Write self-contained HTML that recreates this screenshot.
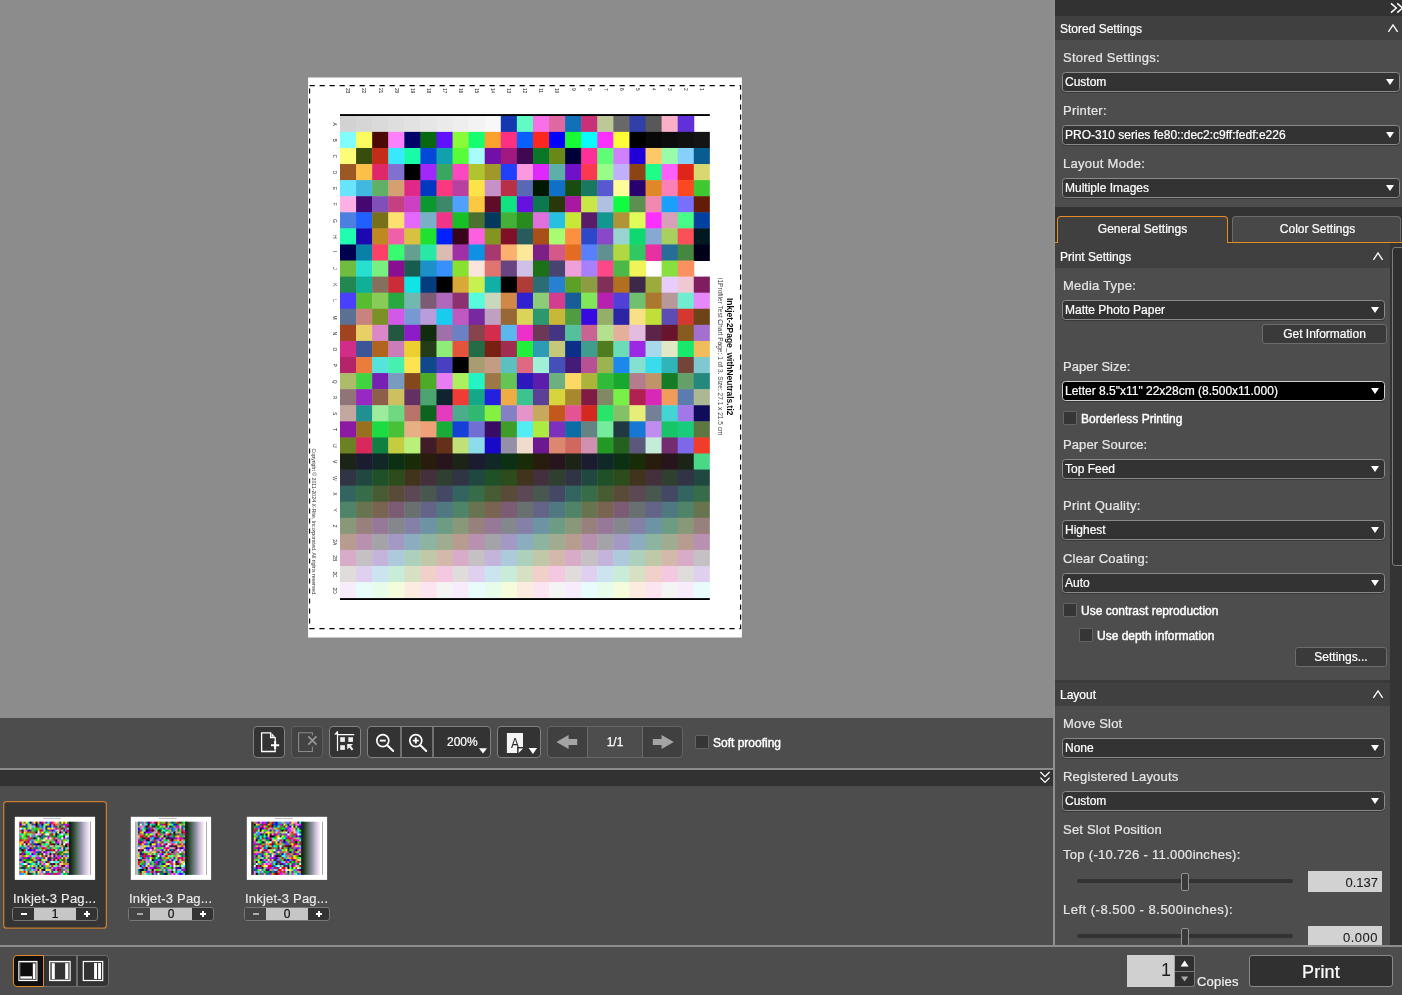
<!DOCTYPE html><html><head><meta charset="utf-8"><title>Print Layout</title><style>
*{box-sizing:border-box;margin:0;padding:0}
html,body{width:1402px;height:995px;overflow:hidden;background:#4d4d4d}
body{position:relative;font-family:"Liberation Sans",sans-serif;font-size:12px;color:#fff;-webkit-font-smoothing:antialiased;-webkit-text-stroke-width:.22px}
.a{position:absolute}
.t{position:absolute;white-space:nowrap;line-height:16px;height:16px}
.lb{position:absolute;white-space:nowrap;font-size:13px;line-height:16px;height:16px;color:#e6e6e6}
.hd{position:absolute;left:1055px;background:#404040;height:24px}
.hd span{position:absolute;left:5px;top:4px;line-height:16px;font-size:12px;color:#fff}
.dd{position:absolute;height:20px;background:#333;border:1px solid #8a8a8a;border-radius:3.5px;box-shadow:0 1px 0 rgba(0,0,0,.25)}
.dd span{position:absolute;left:2px;top:1px;line-height:16px;font-size:12px;color:#fff;white-space:nowrap}
.dd i{position:absolute;right:5px;top:6px;width:0;height:0;border-left:4.5px solid transparent;border-right:4.5px solid transparent;border-top:6px solid #fff}
.btn{position:absolute;height:20px;background:#3a3a3a;border:1px solid #6c6c6c;border-radius:3px;text-align:center;line-height:19px;font-size:12px;color:#fff}
.cb{position:absolute;width:14px;height:14px;background:#353535;border:1px solid #626262;border-radius:1px}
.fb{-webkit-text-stroke-width:.42px}
.tb{position:absolute;top:726px;height:32px;background:#333;border:1px solid #828282;border-radius:4px}
.sl{position:absolute;height:4.5px;background:#333;border-radius:2.25px}
.th{position:absolute;width:8px;height:18px;background:#3a3a3a;border:1px solid #929292;border-radius:2px}
.vb{position:absolute;background:#d2d2d2;color:#1e1e1e;font-size:13px;text-align:right;padding-right:4px;-webkit-text-stroke-width:.1px}
</style></head><body><div id="app" style="position:absolute;left:0;top:0;width:1402px;height:995px;will-change:transform">
<div class="a" style="left:0;top:0;width:1053px;height:718px;background:#8c8c8c"></div>
<svg class="a" style="left:0;top:0" width="1053" height="718" viewBox="0 0 1053 718"><rect x="308.1" y="77.5" width="433.8" height="560.0" fill="#fff"/><rect x="340.00" y="115.80" width="16.58" height="16.58" fill="#d2d2d2"/><rect x="356.08" y="115.80" width="16.58" height="16.58" fill="#d6d6d6"/><rect x="372.16" y="115.80" width="16.58" height="16.58" fill="#dadada"/><rect x="388.24" y="115.80" width="16.58" height="16.58" fill="#dedede"/><rect x="404.32" y="115.80" width="16.58" height="16.58" fill="#e2e2e2"/><rect x="420.40" y="115.80" width="16.58" height="16.58" fill="#e6e6e6"/><rect x="436.48" y="115.80" width="16.58" height="16.58" fill="#eaeaea"/><rect x="452.56" y="115.80" width="16.58" height="16.58" fill="#eeeeee"/><rect x="468.64" y="115.80" width="16.58" height="16.58" fill="#f3f3f3"/><rect x="484.72" y="115.80" width="16.58" height="16.58" fill="#f8f8f8"/><rect x="500.80" y="115.80" width="16.58" height="16.58" fill="#1338b0"/><rect x="516.88" y="115.80" width="16.58" height="16.58" fill="#60fcc4"/><rect x="532.96" y="115.80" width="16.58" height="16.58" fill="#f870e8"/><rect x="549.04" y="115.80" width="16.58" height="16.58" fill="#e068a0"/><rect x="565.12" y="115.80" width="16.58" height="16.58" fill="#1070b8"/><rect x="581.20" y="115.80" width="16.58" height="16.58" fill="#c83078"/><rect x="597.28" y="115.80" width="16.58" height="16.58" fill="#bcc898"/><rect x="613.36" y="115.80" width="16.58" height="16.58" fill="#686868"/><rect x="629.44" y="115.80" width="16.58" height="16.58" fill="#3040a8"/><rect x="645.52" y="115.80" width="16.58" height="16.58" fill="#585858"/><rect x="661.60" y="115.80" width="16.58" height="16.58" fill="#fcb0c8"/><rect x="677.68" y="115.80" width="16.58" height="16.58" fill="#6030d8"/><rect x="340.00" y="131.88" width="16.58" height="16.58" fill="#80fcfc"/><rect x="356.08" y="131.88" width="16.58" height="16.58" fill="#fcfc60"/><rect x="372.16" y="131.88" width="16.58" height="16.58" fill="#4c0804"/><rect x="388.24" y="131.88" width="16.58" height="16.58" fill="#fc80fc"/><rect x="404.32" y="131.88" width="16.58" height="16.58" fill="#000068"/><rect x="420.40" y="131.88" width="16.58" height="16.58" fill="#086810"/><rect x="436.48" y="131.88" width="16.58" height="16.58" fill="#6010fc"/><rect x="452.56" y="131.88" width="16.58" height="16.58" fill="#88fc38"/><rect x="468.64" y="131.88" width="16.58" height="16.58" fill="#18fc70"/><rect x="484.72" y="131.88" width="16.58" height="16.58" fill="#fca030"/><rect x="500.80" y="131.88" width="16.58" height="16.58" fill="#fc3080"/><rect x="516.88" y="131.88" width="16.58" height="16.58" fill="#0860fc"/><rect x="532.96" y="131.88" width="16.58" height="16.58" fill="#fc2820"/><rect x="549.04" y="131.88" width="16.58" height="16.58" fill="#0000fc"/><rect x="565.12" y="131.88" width="16.58" height="16.58" fill="#18fc38"/><rect x="581.20" y="131.88" width="16.58" height="16.58" fill="#08fcfc"/><rect x="597.28" y="131.88" width="16.58" height="16.58" fill="#fc30fc"/><rect x="613.36" y="131.88" width="16.58" height="16.58" fill="#fcfc38"/><rect x="629.44" y="131.88" width="16.58" height="16.58" fill="#000000"/><rect x="645.52" y="131.88" width="16.58" height="16.58" fill="#080808"/><rect x="661.60" y="131.88" width="16.58" height="16.58" fill="#0c0c0c"/><rect x="677.68" y="131.88" width="16.58" height="16.58" fill="#101010"/><rect x="693.76" y="131.88" width="16.08" height="16.58" fill="#141414"/><rect x="340.00" y="147.96" width="16.58" height="16.58" fill="#fcfc78"/><rect x="356.08" y="147.96" width="16.58" height="16.58" fill="#384c0c"/><rect x="372.16" y="147.96" width="16.58" height="16.58" fill="#c42c18"/><rect x="388.24" y="147.96" width="16.58" height="16.58" fill="#38e8fc"/><rect x="404.32" y="147.96" width="16.58" height="16.58" fill="#18fca8"/><rect x="420.40" y="147.96" width="16.58" height="16.58" fill="#0448d8"/><rect x="436.48" y="147.96" width="16.58" height="16.58" fill="#10a0b0"/><rect x="452.56" y="147.96" width="16.58" height="16.58" fill="#58fc38"/><rect x="468.64" y="147.96" width="16.58" height="16.58" fill="#a8fcfc"/><rect x="484.72" y="147.96" width="16.58" height="16.58" fill="#7010a8"/><rect x="500.80" y="147.96" width="16.58" height="16.58" fill="#a01880"/><rect x="516.88" y="147.96" width="16.58" height="16.58" fill="#400850"/><rect x="532.96" y="147.96" width="16.58" height="16.58" fill="#087828"/><rect x="549.04" y="147.96" width="16.58" height="16.58" fill="#688818"/><rect x="565.12" y="147.96" width="16.58" height="16.58" fill="#000038"/><rect x="581.20" y="147.96" width="16.58" height="16.58" fill="#fc3098"/><rect x="597.28" y="147.96" width="16.58" height="16.58" fill="#60fc78"/><rect x="613.36" y="147.96" width="16.58" height="16.58" fill="#d080fc"/><rect x="629.44" y="147.96" width="16.58" height="16.58" fill="#2000d8"/><rect x="645.52" y="147.96" width="16.58" height="16.58" fill="#fcc868"/><rect x="661.60" y="147.96" width="16.58" height="16.58" fill="#98fca8"/><rect x="677.68" y="147.96" width="16.58" height="16.58" fill="#88d0fc"/><rect x="693.76" y="147.96" width="16.08" height="16.58" fill="#085c90"/><rect x="340.00" y="164.04" width="16.58" height="16.58" fill="#9c5824"/><rect x="356.08" y="164.04" width="16.58" height="16.58" fill="#fcc048"/><rect x="372.16" y="164.04" width="16.58" height="16.58" fill="#e02868"/><rect x="388.24" y="164.04" width="16.58" height="16.58" fill="#8070d0"/><rect x="404.32" y="164.04" width="16.58" height="16.58" fill="#000000"/><rect x="420.40" y="164.04" width="16.58" height="16.58" fill="#a028fc"/><rect x="436.48" y="164.04" width="16.58" height="16.58" fill="#38a860"/><rect x="452.56" y="164.04" width="16.58" height="16.58" fill="#fc48c0"/><rect x="468.64" y="164.04" width="16.58" height="16.58" fill="#b0c430"/><rect x="484.72" y="164.04" width="16.58" height="16.58" fill="#a09828"/><rect x="500.80" y="164.04" width="16.58" height="16.58" fill="#2040fc"/><rect x="516.88" y="164.04" width="16.58" height="16.58" fill="#fc98e0"/><rect x="532.96" y="164.04" width="16.58" height="16.58" fill="#e028fc"/><rect x="549.04" y="164.04" width="16.58" height="16.58" fill="#5cb0a8"/><rect x="565.12" y="164.04" width="16.58" height="16.58" fill="#7010c8"/><rect x="581.20" y="164.04" width="16.58" height="16.58" fill="#fc3850"/><rect x="597.28" y="164.04" width="16.58" height="16.58" fill="#98fc88"/><rect x="613.36" y="164.04" width="16.58" height="16.58" fill="#c0b0fc"/><rect x="629.44" y="164.04" width="16.58" height="16.58" fill="#8c4414"/><rect x="645.52" y="164.04" width="16.58" height="16.58" fill="#20fc88"/><rect x="661.60" y="164.04" width="16.58" height="16.58" fill="#fc60fc"/><rect x="677.68" y="164.04" width="16.58" height="16.58" fill="#e02418"/><rect x="693.76" y="164.04" width="16.08" height="16.58" fill="#d8d870"/><rect x="340.00" y="180.12" width="16.58" height="16.58" fill="#68e4fc"/><rect x="356.08" y="180.12" width="16.58" height="16.58" fill="#40b8e0"/><rect x="372.16" y="180.12" width="16.58" height="16.58" fill="#60b068"/><rect x="388.24" y="180.12" width="16.58" height="16.58" fill="#d4a070"/><rect x="404.32" y="180.12" width="16.58" height="16.58" fill="#e02888"/><rect x="420.40" y="180.12" width="16.58" height="16.58" fill="#0038c0"/><rect x="436.48" y="180.12" width="16.58" height="16.58" fill="#fc3880"/><rect x="452.56" y="180.12" width="16.58" height="16.58" fill="#b840a0"/><rect x="468.64" y="180.12" width="16.58" height="16.58" fill="#fce448"/><rect x="484.72" y="180.12" width="16.58" height="16.58" fill="#c890c8"/><rect x="500.80" y="180.12" width="16.58" height="16.58" fill="#b83048"/><rect x="516.88" y="180.12" width="16.58" height="16.58" fill="#5868b4"/><rect x="532.96" y="180.12" width="16.58" height="16.58" fill="#001800"/><rect x="549.04" y="180.12" width="16.58" height="16.58" fill="#1070c8"/><rect x="565.12" y="180.12" width="16.58" height="16.58" fill="#184c10"/><rect x="581.20" y="180.12" width="16.58" height="16.58" fill="#187860"/><rect x="597.28" y="180.12" width="16.58" height="16.58" fill="#5858d0"/><rect x="613.36" y="180.12" width="16.58" height="16.58" fill="#fcfc98"/><rect x="629.44" y="180.12" width="16.58" height="16.58" fill="#280070"/><rect x="645.52" y="180.12" width="16.58" height="16.58" fill="#e08828"/><rect x="661.60" y="180.12" width="16.58" height="16.58" fill="#fc80b8"/><rect x="677.68" y="180.12" width="16.58" height="16.58" fill="#fc4820"/><rect x="693.76" y="180.12" width="16.08" height="16.58" fill="#40c830"/><rect x="340.00" y="196.20" width="16.58" height="16.58" fill="#fcb0e4"/><rect x="356.08" y="196.20" width="16.58" height="16.58" fill="#440870"/><rect x="372.16" y="196.20" width="16.58" height="16.58" fill="#8050b8"/><rect x="388.24" y="196.20" width="16.58" height="16.58" fill="#c44080"/><rect x="404.32" y="196.20" width="16.58" height="16.58" fill="#cc40c4"/><rect x="420.40" y="196.20" width="16.58" height="16.58" fill="#0c9830"/><rect x="436.48" y="196.20" width="16.58" height="16.58" fill="#3c8868"/><rect x="452.56" y="196.20" width="16.58" height="16.58" fill="#50a0fc"/><rect x="468.64" y="196.20" width="16.58" height="16.58" fill="#fcc840"/><rect x="484.72" y="196.20" width="16.58" height="16.58" fill="#600c28"/><rect x="500.80" y="196.20" width="16.58" height="16.58" fill="#10e480"/><rect x="516.88" y="196.20" width="16.58" height="16.58" fill="#6810e0"/><rect x="532.96" y="196.20" width="16.58" height="16.58" fill="#0c7850"/><rect x="549.04" y="196.20" width="16.58" height="16.58" fill="#283808"/><rect x="565.12" y="196.20" width="16.58" height="16.58" fill="#a818a0"/><rect x="581.20" y="196.20" width="16.58" height="16.58" fill="#c8e848"/><rect x="597.28" y="196.20" width="16.58" height="16.58" fill="#b0c0e0"/><rect x="613.36" y="196.20" width="16.58" height="16.58" fill="#10fc40"/><rect x="629.44" y="196.20" width="16.58" height="16.58" fill="#5c9050"/><rect x="645.52" y="196.20" width="16.58" height="16.58" fill="#f088b0"/><rect x="661.60" y="196.20" width="16.58" height="16.58" fill="#18a0fc"/><rect x="677.68" y="196.20" width="16.58" height="16.58" fill="#7870fc"/><rect x="693.76" y="196.20" width="16.08" height="16.58" fill="#641c08"/><rect x="340.00" y="212.28" width="16.58" height="16.58" fill="#4c80e0"/><rect x="356.08" y="212.28" width="16.58" height="16.58" fill="#2060fc"/><rect x="372.16" y="212.28" width="16.58" height="16.58" fill="#787018"/><rect x="388.24" y="212.28" width="16.58" height="16.58" fill="#fce070"/><rect x="404.32" y="212.28" width="16.58" height="16.58" fill="#e468fc"/><rect x="420.40" y="212.28" width="16.58" height="16.58" fill="#78b0c8"/><rect x="436.48" y="212.28" width="16.58" height="16.58" fill="#f03488"/><rect x="452.56" y="212.28" width="16.58" height="16.58" fill="#18c028"/><rect x="468.64" y="212.28" width="16.58" height="16.58" fill="#4c7030"/><rect x="484.72" y="212.28" width="16.58" height="16.58" fill="#04385c"/><rect x="500.80" y="212.28" width="16.58" height="16.58" fill="#44b038"/><rect x="516.88" y="212.28" width="16.58" height="16.58" fill="#288c1c"/><rect x="532.96" y="212.28" width="16.58" height="16.58" fill="#e070dc"/><rect x="549.04" y="212.28" width="16.58" height="16.58" fill="#28c0e0"/><rect x="565.12" y="212.28" width="16.58" height="16.58" fill="#c8e838"/><rect x="581.20" y="212.28" width="16.58" height="16.58" fill="#581c68"/><rect x="597.28" y="212.28" width="16.58" height="16.58" fill="#109890"/><rect x="613.36" y="212.28" width="16.58" height="16.58" fill="#b09438"/><rect x="629.44" y="212.28" width="16.58" height="16.58" fill="#e0fc58"/><rect x="645.52" y="212.28" width="16.58" height="16.58" fill="#fc30fc"/><rect x="661.60" y="212.28" width="16.58" height="16.58" fill="#d8a0b8"/><rect x="677.68" y="212.28" width="16.58" height="16.58" fill="#48fc88"/><rect x="693.76" y="212.28" width="16.08" height="16.58" fill="#0440a0"/><rect x="340.00" y="228.36" width="16.58" height="16.58" fill="#20fcb0"/><rect x="356.08" y="228.36" width="16.58" height="16.58" fill="#1c08b0"/><rect x="372.16" y="228.36" width="16.58" height="16.58" fill="#c08820"/><rect x="388.24" y="228.36" width="16.58" height="16.58" fill="#f060a8"/><rect x="404.32" y="228.36" width="16.58" height="16.58" fill="#d8c040"/><rect x="420.40" y="228.36" width="16.58" height="16.58" fill="#20e030"/><rect x="436.48" y="228.36" width="16.58" height="16.58" fill="#0020fc"/><rect x="452.56" y="228.36" width="16.58" height="16.58" fill="#38041c"/><rect x="468.64" y="228.36" width="16.58" height="16.58" fill="#fc60e0"/><rect x="484.72" y="228.36" width="16.58" height="16.58" fill="#849420"/><rect x="500.80" y="228.36" width="16.58" height="16.58" fill="#801028"/><rect x="516.88" y="228.36" width="16.58" height="16.58" fill="#285c5c"/><rect x="532.96" y="228.36" width="16.58" height="16.58" fill="#a85018"/><rect x="549.04" y="228.36" width="16.58" height="16.58" fill="#a8fc70"/><rect x="565.12" y="228.36" width="16.58" height="16.58" fill="#fc9040"/><rect x="581.20" y="228.36" width="16.58" height="16.58" fill="#2c48c8"/><rect x="597.28" y="228.36" width="16.58" height="16.58" fill="#8848c8"/><rect x="613.36" y="228.36" width="16.58" height="16.58" fill="#98d4d0"/><rect x="629.44" y="228.36" width="16.58" height="16.58" fill="#10d870"/><rect x="645.52" y="228.36" width="16.58" height="16.58" fill="#88a8d4"/><rect x="661.60" y="228.36" width="16.58" height="16.58" fill="#a8d060"/><rect x="677.68" y="228.36" width="16.58" height="16.58" fill="#fc5058"/><rect x="693.76" y="228.36" width="16.08" height="16.58" fill="#001820"/><rect x="340.00" y="244.44" width="16.58" height="16.58" fill="#000050"/><rect x="356.08" y="244.44" width="16.58" height="16.58" fill="#0880a8"/><rect x="372.16" y="244.44" width="16.58" height="16.58" fill="#fc4068"/><rect x="388.24" y="244.44" width="16.58" height="16.58" fill="#38fc70"/><rect x="404.32" y="244.44" width="16.58" height="16.58" fill="#64a090"/><rect x="420.40" y="244.44" width="16.58" height="16.58" fill="#28e8a8"/><rect x="436.48" y="244.44" width="16.58" height="16.58" fill="#dcbcb0"/><rect x="452.56" y="244.44" width="16.58" height="16.58" fill="#a030a8"/><rect x="468.64" y="244.44" width="16.58" height="16.58" fill="#1090e0"/><rect x="484.72" y="244.44" width="16.58" height="16.58" fill="#a83870"/><rect x="500.80" y="244.44" width="16.58" height="16.58" fill="#fcb070"/><rect x="516.88" y="244.44" width="16.58" height="16.58" fill="#fce898"/><rect x="532.96" y="244.44" width="16.58" height="16.58" fill="#7c2088"/><rect x="549.04" y="244.44" width="16.58" height="16.58" fill="#d45888"/><rect x="565.12" y="244.44" width="16.58" height="16.58" fill="#e46c20"/><rect x="581.20" y="244.44" width="16.58" height="16.58" fill="#5880fc"/><rect x="597.28" y="244.44" width="16.58" height="16.58" fill="#609090"/><rect x="613.36" y="244.44" width="16.58" height="16.58" fill="#b0d840"/><rect x="629.44" y="244.44" width="16.58" height="16.58" fill="#30c860"/><rect x="645.52" y="244.44" width="16.58" height="16.58" fill="#e830a0"/><rect x="661.60" y="244.44" width="16.58" height="16.58" fill="#286c98"/><rect x="677.68" y="244.44" width="16.58" height="16.58" fill="#448840"/><rect x="693.76" y="244.44" width="16.08" height="16.58" fill="#000018"/><rect x="340.00" y="260.52" width="16.58" height="16.58" fill="#70bc40"/><rect x="356.08" y="260.52" width="16.58" height="16.58" fill="#28e0d0"/><rect x="372.16" y="260.52" width="16.58" height="16.58" fill="#78f080"/><rect x="388.24" y="260.52" width="16.58" height="16.58" fill="#881090"/><rect x="404.32" y="260.52" width="16.58" height="16.58" fill="#185c50"/><rect x="420.40" y="260.52" width="16.58" height="16.58" fill="#1c90c8"/><rect x="436.48" y="260.52" width="16.58" height="16.58" fill="#3890fc"/><rect x="452.56" y="260.52" width="16.58" height="16.58" fill="#88e030"/><rect x="468.64" y="260.52" width="16.58" height="16.58" fill="#fce4dc"/><rect x="484.72" y="260.52" width="16.58" height="16.58" fill="#e07470"/><rect x="500.80" y="260.52" width="16.58" height="16.58" fill="#684480"/><rect x="516.88" y="260.52" width="16.58" height="16.58" fill="#d0c0e8"/><rect x="532.96" y="260.52" width="16.58" height="16.58" fill="#1c7018"/><rect x="549.04" y="260.52" width="16.58" height="16.58" fill="#484470"/><rect x="565.12" y="260.52" width="16.58" height="16.58" fill="#f0a0d8"/><rect x="581.20" y="260.52" width="16.58" height="16.58" fill="#a880fc"/><rect x="597.28" y="260.52" width="16.58" height="16.58" fill="#fc4888"/><rect x="613.36" y="260.52" width="16.58" height="16.58" fill="#4cb848"/><rect x="629.44" y="260.52" width="16.58" height="16.58" fill="#f0f458"/><rect x="661.60" y="260.52" width="16.58" height="16.58" fill="#88e040"/><rect x="677.68" y="260.52" width="16.58" height="16.58" fill="#fc9060"/><rect x="340.00" y="276.60" width="16.58" height="16.58" fill="#208850"/><rect x="356.08" y="276.60" width="16.58" height="16.58" fill="#10b098"/><rect x="372.16" y="276.60" width="16.58" height="16.58" fill="#84705c"/><rect x="388.24" y="276.60" width="16.58" height="16.58" fill="#cc2c38"/><rect x="404.32" y="276.60" width="16.58" height="16.58" fill="#10e4e4"/><rect x="420.40" y="276.60" width="16.58" height="16.58" fill="#043c80"/><rect x="436.48" y="276.60" width="16.58" height="16.58" fill="#000000"/><rect x="452.56" y="276.60" width="16.58" height="16.58" fill="#d8a838"/><rect x="468.64" y="276.60" width="16.58" height="16.58" fill="#c8f050"/><rect x="484.72" y="276.60" width="16.58" height="16.58" fill="#10b0a8"/><rect x="500.80" y="276.60" width="16.58" height="16.58" fill="#000000"/><rect x="516.88" y="276.60" width="16.58" height="16.58" fill="#b03c38"/><rect x="532.96" y="276.60" width="16.58" height="16.58" fill="#2c6c74"/><rect x="549.04" y="276.60" width="16.58" height="16.58" fill="#2880d0"/><rect x="565.12" y="276.60" width="16.58" height="16.58" fill="#5ca028"/><rect x="581.20" y="276.60" width="16.58" height="16.58" fill="#8c9c40"/><rect x="597.28" y="276.60" width="16.58" height="16.58" fill="#803058"/><rect x="613.36" y="276.60" width="16.58" height="16.58" fill="#b07020"/><rect x="629.44" y="276.60" width="16.58" height="16.58" fill="#3c2848"/><rect x="645.52" y="276.60" width="16.58" height="16.58" fill="#9cac3c"/><rect x="661.60" y="276.60" width="16.58" height="16.58" fill="#e8ccfc"/><rect x="677.68" y="276.60" width="16.58" height="16.58" fill="#f0c8d4"/><rect x="693.76" y="276.60" width="16.08" height="16.58" fill="#801c60"/><rect x="340.00" y="292.68" width="16.58" height="16.58" fill="#4840fc"/><rect x="356.08" y="292.68" width="16.58" height="16.58" fill="#58bc30"/><rect x="372.16" y="292.68" width="16.58" height="16.58" fill="#88cc58"/><rect x="388.24" y="292.68" width="16.58" height="16.58" fill="#28a840"/><rect x="404.32" y="292.68" width="16.58" height="16.58" fill="#70b8b0"/><rect x="420.40" y="292.68" width="16.58" height="16.58" fill="#7c5c74"/><rect x="436.48" y="292.68" width="16.58" height="16.58" fill="#b068bc"/><rect x="452.56" y="292.68" width="16.58" height="16.58" fill="#8c3070"/><rect x="468.64" y="292.68" width="16.58" height="16.58" fill="#58fcdc"/><rect x="484.72" y="292.68" width="16.58" height="16.58" fill="#c8d8bc"/><rect x="500.80" y="292.68" width="16.58" height="16.58" fill="#d08848"/><rect x="516.88" y="292.68" width="16.58" height="16.58" fill="#3020d0"/><rect x="532.96" y="292.68" width="16.58" height="16.58" fill="#8ccc78"/><rect x="549.04" y="292.68" width="16.58" height="16.58" fill="#d43c90"/><rect x="565.12" y="292.68" width="16.58" height="16.58" fill="#185c98"/><rect x="581.20" y="292.68" width="16.58" height="16.58" fill="#80e858"/><rect x="597.28" y="292.68" width="16.58" height="16.58" fill="#b820b0"/><rect x="613.36" y="292.68" width="16.58" height="16.58" fill="#5040d8"/><rect x="629.44" y="292.68" width="16.58" height="16.58" fill="#70c070"/><rect x="645.52" y="292.68" width="16.58" height="16.58" fill="#ac7830"/><rect x="661.60" y="292.68" width="16.58" height="16.58" fill="#b89898"/><rect x="677.68" y="292.68" width="16.58" height="16.58" fill="#70ecd0"/><rect x="693.76" y="292.68" width="16.08" height="16.58" fill="#e488fc"/><rect x="340.00" y="308.76" width="16.58" height="16.58" fill="#5c7094"/><rect x="356.08" y="308.76" width="16.58" height="16.58" fill="#c8847c"/><rect x="372.16" y="308.76" width="16.58" height="16.58" fill="#7c9028"/><rect x="388.24" y="308.76" width="16.58" height="16.58" fill="#d458e8"/><rect x="404.32" y="308.76" width="16.58" height="16.58" fill="#7898d4"/><rect x="420.40" y="308.76" width="16.58" height="16.58" fill="#b89cdc"/><rect x="436.48" y="308.76" width="16.58" height="16.58" fill="#18ccf0"/><rect x="452.56" y="308.76" width="16.58" height="16.58" fill="#c058c0"/><rect x="468.64" y="308.76" width="16.58" height="16.58" fill="#7828a0"/><rect x="484.72" y="308.76" width="16.58" height="16.58" fill="#c0a0c0"/><rect x="500.80" y="308.76" width="16.58" height="16.58" fill="#986834"/><rect x="516.88" y="308.76" width="16.58" height="16.58" fill="#dcd458"/><rect x="532.96" y="308.76" width="16.58" height="16.58" fill="#2c9870"/><rect x="549.04" y="308.76" width="16.58" height="16.58" fill="#c8b838"/><rect x="565.12" y="308.76" width="16.58" height="16.58" fill="#509c40"/><rect x="581.20" y="308.76" width="16.58" height="16.58" fill="#3808e0"/><rect x="597.28" y="308.76" width="16.58" height="16.58" fill="#94b068"/><rect x="613.36" y="308.76" width="16.58" height="16.58" fill="#2c24a4"/><rect x="629.44" y="308.76" width="16.58" height="16.58" fill="#f8e084"/><rect x="645.52" y="308.76" width="16.58" height="16.58" fill="#c0e038"/><rect x="661.60" y="308.76" width="16.58" height="16.58" fill="#5c4cb4"/><rect x="677.68" y="308.76" width="16.58" height="16.58" fill="#d43830"/><rect x="693.76" y="308.76" width="16.08" height="16.58" fill="#6c4418"/><rect x="340.00" y="324.84" width="16.58" height="16.58" fill="#a04420"/><rect x="356.08" y="324.84" width="16.58" height="16.58" fill="#e8d064"/><rect x="372.16" y="324.84" width="16.58" height="16.58" fill="#dc88c8"/><rect x="388.24" y="324.84" width="16.58" height="16.58" fill="#205840"/><rect x="404.32" y="324.84" width="16.58" height="16.58" fill="#8c1cc8"/><rect x="420.40" y="324.84" width="16.58" height="16.58" fill="#102c0c"/><rect x="436.48" y="324.84" width="16.58" height="16.58" fill="#a070a8"/><rect x="452.56" y="324.84" width="16.58" height="16.58" fill="#6c80c4"/><rect x="468.64" y="324.84" width="16.58" height="16.58" fill="#88444c"/><rect x="484.72" y="324.84" width="16.58" height="16.58" fill="#d42c4c"/><rect x="500.80" y="324.84" width="16.58" height="16.58" fill="#5cb8ec"/><rect x="516.88" y="324.84" width="16.58" height="16.58" fill="#ec30c8"/><rect x="532.96" y="324.84" width="16.58" height="16.58" fill="#6c3858"/><rect x="549.04" y="324.84" width="16.58" height="16.58" fill="#443484"/><rect x="565.12" y="324.84" width="16.58" height="16.58" fill="#54c09c"/><rect x="581.20" y="324.84" width="16.58" height="16.58" fill="#c86494"/><rect x="597.28" y="324.84" width="16.58" height="16.58" fill="#b4e090"/><rect x="613.36" y="324.84" width="16.58" height="16.58" fill="#e4b09c"/><rect x="629.44" y="324.84" width="16.58" height="16.58" fill="#e4bce0"/><rect x="645.52" y="324.84" width="16.58" height="16.58" fill="#5c2448"/><rect x="661.60" y="324.84" width="16.58" height="16.58" fill="#68142c"/><rect x="677.68" y="324.84" width="16.58" height="16.58" fill="#885c20"/><rect x="693.76" y="324.84" width="16.08" height="16.58" fill="#a470d0"/><rect x="340.00" y="340.92" width="16.58" height="16.58" fill="#d02c88"/><rect x="356.08" y="340.92" width="16.58" height="16.58" fill="#3c5498"/><rect x="372.16" y="340.92" width="16.58" height="16.58" fill="#b06420"/><rect x="388.24" y="340.92" width="16.58" height="16.58" fill="#cc7cb8"/><rect x="404.32" y="340.92" width="16.58" height="16.58" fill="#ecd030"/><rect x="420.40" y="340.92" width="16.58" height="16.58" fill="#243c18"/><rect x="436.48" y="340.92" width="16.58" height="16.58" fill="#90ec78"/><rect x="452.56" y="340.92" width="16.58" height="16.58" fill="#e4543c"/><rect x="468.64" y="340.92" width="16.58" height="16.58" fill="#246c48"/><rect x="484.72" y="340.92" width="16.58" height="16.58" fill="#782014"/><rect x="500.80" y="340.92" width="16.58" height="16.58" fill="#a02c50"/><rect x="516.88" y="340.92" width="16.58" height="16.58" fill="#20f03c"/><rect x="532.96" y="340.92" width="16.58" height="16.58" fill="#2c9cb4"/><rect x="549.04" y="340.92" width="16.58" height="16.58" fill="#c4c878"/><rect x="565.12" y="340.92" width="16.58" height="16.58" fill="#0c3088"/><rect x="581.20" y="340.92" width="16.58" height="16.58" fill="#409c8c"/><rect x="597.28" y="340.92" width="16.58" height="16.58" fill="#507c20"/><rect x="613.36" y="340.92" width="16.58" height="16.58" fill="#6cdcb8"/><rect x="629.44" y="340.92" width="16.58" height="16.58" fill="#9c28e4"/><rect x="645.52" y="340.92" width="16.58" height="16.58" fill="#a8d8ec"/><rect x="661.60" y="340.92" width="16.58" height="16.58" fill="#e0e8c4"/><rect x="677.68" y="340.92" width="16.58" height="16.58" fill="#18e86c"/><rect x="693.76" y="340.92" width="16.08" height="16.58" fill="#f0bc5c"/><rect x="340.00" y="357.00" width="16.58" height="16.58" fill="#b42468"/><rect x="356.08" y="357.00" width="16.58" height="16.58" fill="#ec7c3c"/><rect x="372.16" y="357.00" width="16.58" height="16.58" fill="#54e4dc"/><rect x="388.24" y="357.00" width="16.58" height="16.58" fill="#48f0b0"/><rect x="404.32" y="357.00" width="16.58" height="16.58" fill="#fce450"/><rect x="420.40" y="357.00" width="16.58" height="16.58" fill="#10488c"/><rect x="436.48" y="357.00" width="16.58" height="16.58" fill="#4840c0"/><rect x="452.56" y="357.00" width="16.58" height="16.58" fill="#000000"/><rect x="468.64" y="357.00" width="16.58" height="16.58" fill="#a89c70"/><rect x="484.72" y="357.00" width="16.58" height="16.58" fill="#c49c84"/><rect x="500.80" y="357.00" width="16.58" height="16.58" fill="#5cc0c0"/><rect x="516.88" y="357.00" width="16.58" height="16.58" fill="#e06880"/><rect x="532.96" y="357.00" width="16.58" height="16.58" fill="#a0f0d8"/><rect x="549.04" y="357.00" width="16.58" height="16.58" fill="#4450b8"/><rect x="565.12" y="357.00" width="16.58" height="16.58" fill="#441c78"/><rect x="581.20" y="357.00" width="16.58" height="16.58" fill="#b85094"/><rect x="597.28" y="357.00" width="16.58" height="16.58" fill="#9cb450"/><rect x="613.36" y="357.00" width="16.58" height="16.58" fill="#1c88ec"/><rect x="629.44" y="357.00" width="16.58" height="16.58" fill="#84e0d0"/><rect x="645.52" y="357.00" width="16.58" height="16.58" fill="#38dcec"/><rect x="661.60" y="357.00" width="16.58" height="16.58" fill="#30b4b8"/><rect x="677.68" y="357.00" width="16.58" height="16.58" fill="#744438"/><rect x="693.76" y="357.00" width="16.08" height="16.58" fill="#80c8d0"/><rect x="340.00" y="373.08" width="16.58" height="16.58" fill="#acbc68"/><rect x="356.08" y="373.08" width="16.58" height="16.58" fill="#40d440"/><rect x="372.16" y="373.08" width="16.58" height="16.58" fill="#7820b4"/><rect x="388.24" y="373.08" width="16.58" height="16.58" fill="#789cc0"/><rect x="404.32" y="373.08" width="16.58" height="16.58" fill="#84481c"/><rect x="420.40" y="373.08" width="16.58" height="16.58" fill="#4cac28"/><rect x="436.48" y="373.08" width="16.58" height="16.58" fill="#e87cf4"/><rect x="452.56" y="373.08" width="16.58" height="16.58" fill="#acf060"/><rect x="468.64" y="373.08" width="16.58" height="16.58" fill="#24f4c4"/><rect x="484.72" y="373.08" width="16.58" height="16.58" fill="#9c7848"/><rect x="500.80" y="373.08" width="16.58" height="16.58" fill="#64c454"/><rect x="516.88" y="373.08" width="16.58" height="16.58" fill="#2c18bc"/><rect x="532.96" y="373.08" width="16.58" height="16.58" fill="#5c1cac"/><rect x="549.04" y="373.08" width="16.58" height="16.58" fill="#6cb080"/><rect x="565.12" y="373.08" width="16.58" height="16.58" fill="#fcd864"/><rect x="581.20" y="373.08" width="16.58" height="16.58" fill="#acb43c"/><rect x="597.28" y="373.08" width="16.58" height="16.58" fill="#30bc38"/><rect x="613.36" y="373.08" width="16.58" height="16.58" fill="#18a830"/><rect x="629.44" y="373.08" width="16.58" height="16.58" fill="#b47c8c"/><rect x="645.52" y="373.08" width="16.58" height="16.58" fill="#c09468"/><rect x="661.60" y="373.08" width="16.58" height="16.58" fill="#147c24"/><rect x="677.68" y="373.08" width="16.58" height="16.58" fill="#64a068"/><rect x="693.76" y="373.08" width="16.08" height="16.58" fill="#24887c"/><rect x="340.00" y="389.16" width="16.58" height="16.58" fill="#907478"/><rect x="356.08" y="389.16" width="16.58" height="16.58" fill="#9828c4"/><rect x="372.16" y="389.16" width="16.58" height="16.58" fill="#8c6048"/><rect x="388.24" y="389.16" width="16.58" height="16.58" fill="#ccc060"/><rect x="404.32" y="389.16" width="16.58" height="16.58" fill="#643064"/><rect x="420.40" y="389.16" width="16.58" height="16.58" fill="#4ca470"/><rect x="436.48" y="389.16" width="16.58" height="16.58" fill="#102430"/><rect x="452.56" y="389.16" width="16.58" height="16.58" fill="#f03c34"/><rect x="468.64" y="389.16" width="16.58" height="16.58" fill="#14a888"/><rect x="484.72" y="389.16" width="16.58" height="16.58" fill="#2420e0"/><rect x="500.80" y="389.16" width="16.58" height="16.58" fill="#f0ac44"/><rect x="516.88" y="389.16" width="16.58" height="16.58" fill="#3cc490"/><rect x="532.96" y="389.16" width="16.58" height="16.58" fill="#5c4098"/><rect x="549.04" y="389.16" width="16.58" height="16.58" fill="#d8d43c"/><rect x="565.12" y="389.16" width="16.58" height="16.58" fill="#a8882c"/><rect x="581.20" y="389.16" width="16.58" height="16.58" fill="#801c44"/><rect x="597.28" y="389.16" width="16.58" height="16.58" fill="#808864"/><rect x="613.36" y="389.16" width="16.58" height="16.58" fill="#78f048"/><rect x="629.44" y="389.16" width="16.58" height="16.58" fill="#b02050"/><rect x="645.52" y="389.16" width="16.58" height="16.58" fill="#d828b8"/><rect x="661.60" y="389.16" width="16.58" height="16.58" fill="#f09c5c"/><rect x="677.68" y="389.16" width="16.58" height="16.58" fill="#5c7cb0"/><rect x="693.76" y="389.16" width="16.08" height="16.58" fill="#acb894"/><rect x="340.00" y="405.24" width="16.58" height="16.58" fill="#c4a8a0"/><rect x="356.08" y="405.24" width="16.58" height="16.58" fill="#209090"/><rect x="372.16" y="405.24" width="16.58" height="16.58" fill="#9cec9c"/><rect x="388.24" y="405.24" width="16.58" height="16.58" fill="#70d880"/><rect x="404.32" y="405.24" width="16.58" height="16.58" fill="#b87468"/><rect x="420.40" y="405.24" width="16.58" height="16.58" fill="#0c6420"/><rect x="436.48" y="405.24" width="16.58" height="16.58" fill="#e43cbc"/><rect x="452.56" y="405.24" width="16.58" height="16.58" fill="#4cac8c"/><rect x="468.64" y="405.24" width="16.58" height="16.58" fill="#30b870"/><rect x="484.72" y="405.24" width="16.58" height="16.58" fill="#84f040"/><rect x="500.80" y="405.24" width="16.58" height="16.58" fill="#8480c4"/><rect x="516.88" y="405.24" width="16.58" height="16.58" fill="#e494c8"/><rect x="532.96" y="405.24" width="16.58" height="16.58" fill="#c8a85c"/><rect x="549.04" y="405.24" width="16.58" height="16.58" fill="#c4581c"/><rect x="565.12" y="405.24" width="16.58" height="16.58" fill="#e45494"/><rect x="581.20" y="405.24" width="16.58" height="16.58" fill="#d42820"/><rect x="597.28" y="405.24" width="16.58" height="16.58" fill="#28e468"/><rect x="613.36" y="405.24" width="16.58" height="16.58" fill="#84c068"/><rect x="629.44" y="405.24" width="16.58" height="16.58" fill="#e8ec78"/><rect x="645.52" y="405.24" width="16.58" height="16.58" fill="#748098"/><rect x="661.60" y="405.24" width="16.58" height="16.58" fill="#44d4d4"/><rect x="677.68" y="405.24" width="16.58" height="16.58" fill="#a078e8"/><rect x="693.76" y="405.24" width="16.08" height="16.58" fill="#100c5c"/><rect x="340.00" y="421.32" width="16.58" height="16.58" fill="#8c18a4"/><rect x="356.08" y="421.32" width="16.58" height="16.58" fill="#987020"/><rect x="372.16" y="421.32" width="16.58" height="16.58" fill="#1cdc44"/><rect x="388.24" y="421.32" width="16.58" height="16.58" fill="#48c038"/><rect x="404.32" y="421.32" width="16.58" height="16.58" fill="#e4b084"/><rect x="420.40" y="421.32" width="16.58" height="16.58" fill="#f0a078"/><rect x="436.48" y="421.32" width="16.58" height="16.58" fill="#18ac38"/><rect x="452.56" y="421.32" width="16.58" height="16.58" fill="#1440d8"/><rect x="468.64" y="421.32" width="16.58" height="16.58" fill="#7070d4"/><rect x="484.72" y="421.32" width="16.58" height="16.58" fill="#380c64"/><rect x="500.80" y="421.32" width="16.58" height="16.58" fill="#409c28"/><rect x="516.88" y="421.32" width="16.58" height="16.58" fill="#54ecf4"/><rect x="532.96" y="421.32" width="16.58" height="16.58" fill="#acec40"/><rect x="549.04" y="421.32" width="16.58" height="16.58" fill="#7c30bc"/><rect x="565.12" y="421.32" width="16.58" height="16.58" fill="#0c6ca4"/><rect x="581.20" y="421.32" width="16.58" height="16.58" fill="#648484"/><rect x="597.28" y="421.32" width="16.58" height="16.58" fill="#74ec9c"/><rect x="613.36" y="421.32" width="16.58" height="16.58" fill="#203840"/><rect x="629.44" y="421.32" width="16.58" height="16.58" fill="#1478d4"/><rect x="645.52" y="421.32" width="16.58" height="16.58" fill="#c08cf0"/><rect x="661.60" y="421.32" width="16.58" height="16.58" fill="#18c468"/><rect x="677.68" y="421.32" width="16.58" height="16.58" fill="#18cc7c"/><rect x="693.76" y="421.32" width="16.08" height="16.58" fill="#5c7840"/><rect x="340.00" y="437.40" width="16.58" height="16.58" fill="#6c8024"/><rect x="356.08" y="437.40" width="16.58" height="16.58" fill="#d8285c"/><rect x="372.16" y="437.40" width="16.58" height="16.58" fill="#108040"/><rect x="388.24" y="437.40" width="16.58" height="16.58" fill="#c4cc40"/><rect x="404.32" y="437.40" width="16.58" height="16.58" fill="#b8f078"/><rect x="420.40" y="437.40" width="16.58" height="16.58" fill="#401c28"/><rect x="436.48" y="437.40" width="16.58" height="16.58" fill="#643018"/><rect x="452.56" y="437.40" width="16.58" height="16.58" fill="#c0e078"/><rect x="468.64" y="437.40" width="16.58" height="16.58" fill="#8cdcec"/><rect x="484.72" y="437.40" width="16.58" height="16.58" fill="#1808c8"/><rect x="500.80" y="437.40" width="16.58" height="16.58" fill="#9490a8"/><rect x="516.88" y="437.40" width="16.58" height="16.58" fill="#f0dccc"/><rect x="532.96" y="437.40" width="16.58" height="16.58" fill="#6c1890"/><rect x="549.04" y="437.40" width="16.58" height="16.58" fill="#dc8870"/><rect x="565.12" y="437.40" width="16.58" height="16.58" fill="#d06860"/><rect x="581.20" y="437.40" width="16.58" height="16.58" fill="#d090b0"/><rect x="597.28" y="437.40" width="16.58" height="16.58" fill="#249824"/><rect x="613.36" y="437.40" width="16.58" height="16.58" fill="#246020"/><rect x="629.44" y="437.40" width="16.58" height="16.58" fill="#5c587c"/><rect x="645.52" y="437.40" width="16.58" height="16.58" fill="#c4ecd8"/><rect x="661.60" y="437.40" width="16.58" height="16.58" fill="#742c70"/><rect x="677.68" y="437.40" width="16.58" height="16.58" fill="#7c68e8"/><rect x="693.76" y="437.40" width="16.08" height="16.58" fill="#f03c28"/><rect x="340.00" y="453.48" width="16.58" height="16.58" fill="#1c2418"/><rect x="356.08" y="453.48" width="16.58" height="16.58" fill="#1c1c30"/><rect x="372.16" y="453.48" width="16.58" height="16.58" fill="#102828"/><rect x="388.24" y="453.48" width="16.58" height="16.58" fill="#0c3014"/><rect x="404.32" y="453.48" width="16.58" height="16.58" fill="#182c08"/><rect x="420.40" y="453.48" width="16.58" height="16.58" fill="#281c0c"/><rect x="436.48" y="453.48" width="16.58" height="16.58" fill="#28141c"/><rect x="452.56" y="453.48" width="16.58" height="16.58" fill="#1c2418"/><rect x="468.64" y="453.48" width="16.58" height="16.58" fill="#1c1c30"/><rect x="484.72" y="453.48" width="16.58" height="16.58" fill="#102828"/><rect x="500.80" y="453.48" width="16.58" height="16.58" fill="#0c3014"/><rect x="516.88" y="453.48" width="16.58" height="16.58" fill="#182c08"/><rect x="532.96" y="453.48" width="16.58" height="16.58" fill="#281c0c"/><rect x="549.04" y="453.48" width="16.58" height="16.58" fill="#28141c"/><rect x="565.12" y="453.48" width="16.58" height="16.58" fill="#1c2418"/><rect x="581.20" y="453.48" width="16.58" height="16.58" fill="#1c1c30"/><rect x="597.28" y="453.48" width="16.58" height="16.58" fill="#102828"/><rect x="613.36" y="453.48" width="16.58" height="16.58" fill="#0c3014"/><rect x="629.44" y="453.48" width="16.58" height="16.58" fill="#182c08"/><rect x="645.52" y="453.48" width="16.58" height="16.58" fill="#281c0c"/><rect x="661.60" y="453.48" width="16.58" height="16.58" fill="#28141c"/><rect x="677.68" y="453.48" width="16.58" height="16.58" fill="#1c2418"/><rect x="693.76" y="453.48" width="16.08" height="16.58" fill="#48d888"/><rect x="340.00" y="469.56" width="16.58" height="16.58" fill="#303444"/><rect x="356.08" y="469.56" width="16.58" height="16.58" fill="#204840"/><rect x="372.16" y="469.56" width="16.58" height="16.58" fill="#205028"/><rect x="388.24" y="469.56" width="16.58" height="16.58" fill="#2c4c1c"/><rect x="404.32" y="469.56" width="16.58" height="16.58" fill="#40341c"/><rect x="420.40" y="469.56" width="16.58" height="16.58" fill="#44303c"/><rect x="436.48" y="469.56" width="16.58" height="16.58" fill="#304030"/><rect x="452.56" y="469.56" width="16.58" height="16.58" fill="#303444"/><rect x="468.64" y="469.56" width="16.58" height="16.58" fill="#204840"/><rect x="484.72" y="469.56" width="16.58" height="16.58" fill="#205028"/><rect x="500.80" y="469.56" width="16.58" height="16.58" fill="#2c4c1c"/><rect x="516.88" y="469.56" width="16.58" height="16.58" fill="#40341c"/><rect x="532.96" y="469.56" width="16.58" height="16.58" fill="#44303c"/><rect x="549.04" y="469.56" width="16.58" height="16.58" fill="#304030"/><rect x="565.12" y="469.56" width="16.58" height="16.58" fill="#303444"/><rect x="581.20" y="469.56" width="16.58" height="16.58" fill="#204840"/><rect x="597.28" y="469.56" width="16.58" height="16.58" fill="#205028"/><rect x="613.36" y="469.56" width="16.58" height="16.58" fill="#2c4c1c"/><rect x="629.44" y="469.56" width="16.58" height="16.58" fill="#40341c"/><rect x="645.52" y="469.56" width="16.58" height="16.58" fill="#44303c"/><rect x="661.60" y="469.56" width="16.58" height="16.58" fill="#304030"/><rect x="677.68" y="469.56" width="16.58" height="16.58" fill="#303444"/><rect x="693.76" y="469.56" width="16.08" height="16.58" fill="#204840"/><rect x="340.00" y="485.64" width="16.58" height="16.58" fill="#346460"/><rect x="356.08" y="485.64" width="16.58" height="16.58" fill="#386c48"/><rect x="372.16" y="485.64" width="16.58" height="16.58" fill="#485c34"/><rect x="388.24" y="485.64" width="16.58" height="16.58" fill="#584c38"/><rect x="404.32" y="485.64" width="16.58" height="16.58" fill="#5c4854"/><rect x="420.40" y="485.64" width="16.58" height="16.58" fill="#485850"/><rect x="436.48" y="485.64" width="16.58" height="16.58" fill="#444864"/><rect x="452.56" y="485.64" width="16.58" height="16.58" fill="#346460"/><rect x="468.64" y="485.64" width="16.58" height="16.58" fill="#386c48"/><rect x="484.72" y="485.64" width="16.58" height="16.58" fill="#485c34"/><rect x="500.80" y="485.64" width="16.58" height="16.58" fill="#584c38"/><rect x="516.88" y="485.64" width="16.58" height="16.58" fill="#5c4854"/><rect x="532.96" y="485.64" width="16.58" height="16.58" fill="#485850"/><rect x="549.04" y="485.64" width="16.58" height="16.58" fill="#444864"/><rect x="565.12" y="485.64" width="16.58" height="16.58" fill="#346460"/><rect x="581.20" y="485.64" width="16.58" height="16.58" fill="#386c48"/><rect x="597.28" y="485.64" width="16.58" height="16.58" fill="#485c34"/><rect x="613.36" y="485.64" width="16.58" height="16.58" fill="#584c38"/><rect x="629.44" y="485.64" width="16.58" height="16.58" fill="#5c4854"/><rect x="645.52" y="485.64" width="16.58" height="16.58" fill="#485850"/><rect x="661.60" y="485.64" width="16.58" height="16.58" fill="#444864"/><rect x="677.68" y="485.64" width="16.58" height="16.58" fill="#346460"/><rect x="693.76" y="485.64" width="16.08" height="16.58" fill="#386c48"/><rect x="340.00" y="501.72" width="16.58" height="16.58" fill="#508468"/><rect x="356.08" y="501.72" width="16.58" height="16.58" fill="#687450"/><rect x="372.16" y="501.72" width="16.58" height="16.58" fill="#786450"/><rect x="388.24" y="501.72" width="16.58" height="16.58" fill="#7c5c74"/><rect x="404.32" y="501.72" width="16.58" height="16.58" fill="#687070"/><rect x="420.40" y="501.72" width="16.58" height="16.58" fill="#646488"/><rect x="436.48" y="501.72" width="16.58" height="16.58" fill="#507880"/><rect x="452.56" y="501.72" width="16.58" height="16.58" fill="#508468"/><rect x="468.64" y="501.72" width="16.58" height="16.58" fill="#687450"/><rect x="484.72" y="501.72" width="16.58" height="16.58" fill="#786450"/><rect x="500.80" y="501.72" width="16.58" height="16.58" fill="#7c5c74"/><rect x="516.88" y="501.72" width="16.58" height="16.58" fill="#687070"/><rect x="532.96" y="501.72" width="16.58" height="16.58" fill="#646488"/><rect x="549.04" y="501.72" width="16.58" height="16.58" fill="#507880"/><rect x="565.12" y="501.72" width="16.58" height="16.58" fill="#508468"/><rect x="581.20" y="501.72" width="16.58" height="16.58" fill="#687450"/><rect x="597.28" y="501.72" width="16.58" height="16.58" fill="#786450"/><rect x="613.36" y="501.72" width="16.58" height="16.58" fill="#7c5c74"/><rect x="629.44" y="501.72" width="16.58" height="16.58" fill="#687070"/><rect x="645.52" y="501.72" width="16.58" height="16.58" fill="#646488"/><rect x="661.60" y="501.72" width="16.58" height="16.58" fill="#507880"/><rect x="677.68" y="501.72" width="16.58" height="16.58" fill="#508468"/><rect x="693.76" y="501.72" width="16.08" height="16.58" fill="#687450"/><rect x="340.00" y="517.80" width="16.58" height="16.58" fill="#889878"/><rect x="356.08" y="517.80" width="16.58" height="16.58" fill="#98807c"/><rect x="372.16" y="517.80" width="16.58" height="16.58" fill="#987898"/><rect x="388.24" y="517.80" width="16.58" height="16.58" fill="#84888c"/><rect x="404.32" y="517.80" width="16.58" height="16.58" fill="#8480a8"/><rect x="420.40" y="517.80" width="16.58" height="16.58" fill="#6c94a4"/><rect x="436.48" y="517.80" width="16.58" height="16.58" fill="#6c9c84"/><rect x="452.56" y="517.80" width="16.58" height="16.58" fill="#889878"/><rect x="468.64" y="517.80" width="16.58" height="16.58" fill="#98807c"/><rect x="484.72" y="517.80" width="16.58" height="16.58" fill="#987898"/><rect x="500.80" y="517.80" width="16.58" height="16.58" fill="#84888c"/><rect x="516.88" y="517.80" width="16.58" height="16.58" fill="#8480a8"/><rect x="532.96" y="517.80" width="16.58" height="16.58" fill="#6c94a4"/><rect x="549.04" y="517.80" width="16.58" height="16.58" fill="#6c9c84"/><rect x="565.12" y="517.80" width="16.58" height="16.58" fill="#889878"/><rect x="581.20" y="517.80" width="16.58" height="16.58" fill="#98807c"/><rect x="597.28" y="517.80" width="16.58" height="16.58" fill="#987898"/><rect x="613.36" y="517.80" width="16.58" height="16.58" fill="#84888c"/><rect x="629.44" y="517.80" width="16.58" height="16.58" fill="#8480a8"/><rect x="645.52" y="517.80" width="16.58" height="16.58" fill="#6c94a4"/><rect x="661.60" y="517.80" width="16.58" height="16.58" fill="#6c9c84"/><rect x="677.68" y="517.80" width="16.58" height="16.58" fill="#889878"/><rect x="693.76" y="517.80" width="16.08" height="16.58" fill="#98807c"/><rect x="340.00" y="533.88" width="16.58" height="16.58" fill="#b89c90"/><rect x="356.08" y="533.88" width="16.58" height="16.58" fill="#b890b0"/><rect x="372.16" y="533.88" width="16.58" height="16.58" fill="#a4a4a8"/><rect x="388.24" y="533.88" width="16.58" height="16.58" fill="#a498c4"/><rect x="404.32" y="533.88" width="16.58" height="16.58" fill="#8cacc0"/><rect x="420.40" y="533.88" width="16.58" height="16.58" fill="#8cb4a0"/><rect x="436.48" y="533.88" width="16.58" height="16.58" fill="#a0ac90"/><rect x="452.56" y="533.88" width="16.58" height="16.58" fill="#b89c90"/><rect x="468.64" y="533.88" width="16.58" height="16.58" fill="#b890b0"/><rect x="484.72" y="533.88" width="16.58" height="16.58" fill="#a4a4a8"/><rect x="500.80" y="533.88" width="16.58" height="16.58" fill="#a498c4"/><rect x="516.88" y="533.88" width="16.58" height="16.58" fill="#8cacc0"/><rect x="532.96" y="533.88" width="16.58" height="16.58" fill="#8cb4a0"/><rect x="549.04" y="533.88" width="16.58" height="16.58" fill="#a0ac90"/><rect x="565.12" y="533.88" width="16.58" height="16.58" fill="#b89c90"/><rect x="581.20" y="533.88" width="16.58" height="16.58" fill="#b890b0"/><rect x="597.28" y="533.88" width="16.58" height="16.58" fill="#a4a4a8"/><rect x="613.36" y="533.88" width="16.58" height="16.58" fill="#a498c4"/><rect x="629.44" y="533.88" width="16.58" height="16.58" fill="#8cacc0"/><rect x="645.52" y="533.88" width="16.58" height="16.58" fill="#8cb4a0"/><rect x="661.60" y="533.88" width="16.58" height="16.58" fill="#a0ac90"/><rect x="677.68" y="533.88" width="16.58" height="16.58" fill="#b89c90"/><rect x="693.76" y="533.88" width="16.08" height="16.58" fill="#b890b0"/><rect x="340.00" y="549.96" width="16.58" height="16.58" fill="#d8acc8"/><rect x="356.08" y="549.96" width="16.58" height="16.58" fill="#c4c0c4"/><rect x="372.16" y="549.96" width="16.58" height="16.58" fill="#c4b4dc"/><rect x="388.24" y="549.96" width="16.58" height="16.58" fill="#accadc"/><rect x="404.32" y="549.96" width="16.58" height="16.58" fill="#acd0bc"/><rect x="420.40" y="549.96" width="16.58" height="16.58" fill="#c0c8a8"/><rect x="436.48" y="549.96" width="16.58" height="16.58" fill="#d4b8ac"/><rect x="452.56" y="549.96" width="16.58" height="16.58" fill="#d8acc8"/><rect x="468.64" y="549.96" width="16.58" height="16.58" fill="#c4c0c4"/><rect x="484.72" y="549.96" width="16.58" height="16.58" fill="#c4b4dc"/><rect x="500.80" y="549.96" width="16.58" height="16.58" fill="#accadc"/><rect x="516.88" y="549.96" width="16.58" height="16.58" fill="#acd0bc"/><rect x="532.96" y="549.96" width="16.58" height="16.58" fill="#c0c8a8"/><rect x="549.04" y="549.96" width="16.58" height="16.58" fill="#d4b8ac"/><rect x="565.12" y="549.96" width="16.58" height="16.58" fill="#d8acc8"/><rect x="581.20" y="549.96" width="16.58" height="16.58" fill="#c4c0c4"/><rect x="597.28" y="549.96" width="16.58" height="16.58" fill="#c4b4dc"/><rect x="613.36" y="549.96" width="16.58" height="16.58" fill="#accadc"/><rect x="629.44" y="549.96" width="16.58" height="16.58" fill="#acd0bc"/><rect x="645.52" y="549.96" width="16.58" height="16.58" fill="#c0c8a8"/><rect x="661.60" y="549.96" width="16.58" height="16.58" fill="#d4b8ac"/><rect x="677.68" y="549.96" width="16.58" height="16.58" fill="#d8acc8"/><rect x="693.76" y="549.96" width="16.08" height="16.58" fill="#c4c0c4"/><rect x="340.00" y="566.04" width="16.58" height="16.58" fill="#e0dcdc"/><rect x="356.08" y="566.04" width="16.58" height="16.58" fill="#e0d0f0"/><rect x="372.16" y="566.04" width="16.58" height="16.58" fill="#cce4f0"/><rect x="388.24" y="566.04" width="16.58" height="16.58" fill="#c8ecd8"/><rect x="404.32" y="566.04" width="16.58" height="16.58" fill="#d8e0c4"/><rect x="420.40" y="566.04" width="16.58" height="16.58" fill="#f0d0c8"/><rect x="436.48" y="566.04" width="16.58" height="16.58" fill="#f4c8e0"/><rect x="452.56" y="566.04" width="16.58" height="16.58" fill="#e0dcdc"/><rect x="468.64" y="566.04" width="16.58" height="16.58" fill="#e0d0f0"/><rect x="484.72" y="566.04" width="16.58" height="16.58" fill="#cce4f0"/><rect x="500.80" y="566.04" width="16.58" height="16.58" fill="#c8ecd8"/><rect x="516.88" y="566.04" width="16.58" height="16.58" fill="#d8e0c4"/><rect x="532.96" y="566.04" width="16.58" height="16.58" fill="#f0d0c8"/><rect x="549.04" y="566.04" width="16.58" height="16.58" fill="#f4c8e0"/><rect x="565.12" y="566.04" width="16.58" height="16.58" fill="#e0dcdc"/><rect x="581.20" y="566.04" width="16.58" height="16.58" fill="#e0d0f0"/><rect x="597.28" y="566.04" width="16.58" height="16.58" fill="#cce4f0"/><rect x="613.36" y="566.04" width="16.58" height="16.58" fill="#c8ecd8"/><rect x="629.44" y="566.04" width="16.58" height="16.58" fill="#d8e0c4"/><rect x="645.52" y="566.04" width="16.58" height="16.58" fill="#f0d0c8"/><rect x="661.60" y="566.04" width="16.58" height="16.58" fill="#f4c8e0"/><rect x="677.68" y="566.04" width="16.58" height="16.58" fill="#e0dcdc"/><rect x="693.76" y="566.04" width="16.08" height="16.58" fill="#e0d0f0"/><rect x="340.00" y="582.12" width="16.58" height="16.08" fill="#f8ecfc"/><rect x="356.08" y="582.12" width="16.58" height="16.08" fill="#e8fcfc"/><rect x="372.16" y="582.12" width="16.58" height="16.08" fill="#e8fcec"/><rect x="388.24" y="582.12" width="16.58" height="16.08" fill="#f4fcdc"/><rect x="404.32" y="582.12" width="16.58" height="16.08" fill="#fcece0"/><rect x="420.40" y="582.12" width="16.58" height="16.08" fill="#fce4f0"/><rect x="436.48" y="582.12" width="16.58" height="16.08" fill="#f4f4f4"/><rect x="452.56" y="582.12" width="16.58" height="16.08" fill="#f8ecfc"/><rect x="468.64" y="582.12" width="16.58" height="16.08" fill="#e8fcfc"/><rect x="484.72" y="582.12" width="16.58" height="16.08" fill="#e8fcec"/><rect x="500.80" y="582.12" width="16.58" height="16.08" fill="#f4fcdc"/><rect x="516.88" y="582.12" width="16.58" height="16.08" fill="#fcece0"/><rect x="532.96" y="582.12" width="16.58" height="16.08" fill="#fce4f0"/><rect x="549.04" y="582.12" width="16.58" height="16.08" fill="#f4f4f4"/><rect x="565.12" y="582.12" width="16.58" height="16.08" fill="#f8ecfc"/><rect x="581.20" y="582.12" width="16.58" height="16.08" fill="#e8fcfc"/><rect x="597.28" y="582.12" width="16.58" height="16.08" fill="#e8fcec"/><rect x="613.36" y="582.12" width="16.58" height="16.08" fill="#f4fcdc"/><rect x="629.44" y="582.12" width="16.58" height="16.08" fill="#fcece0"/><rect x="645.52" y="582.12" width="16.58" height="16.08" fill="#fce4f0"/><rect x="661.60" y="582.12" width="16.58" height="16.08" fill="#f4f4f4"/><rect x="677.68" y="582.12" width="16.58" height="16.08" fill="#f8ecfc"/><rect x="693.76" y="582.12" width="16.08" height="16.08" fill="#e8fcfc"/><rect x="340.0" y="114.1" width="369.8" height="1.9" fill="#000"/><rect x="340.0" y="598.1" width="369.8" height="1.9" fill="#000"/><rect x="309.6" y="85.6" width="431" height="543" fill="none" stroke="#000" stroke-width="1.1" stroke-dasharray="5.2 4.8"/><g font-family="Liberation Sans, sans-serif" fill="#1c1c1c"><text transform="translate(346.3 87.9) rotate(90)" font-size="4.9">23</text><text transform="translate(362.4 87.9) rotate(90)" font-size="4.9">22</text><text transform="translate(378.5 87.9) rotate(90)" font-size="4.9">21</text><text transform="translate(394.6 87.9) rotate(90)" font-size="4.9">20</text><text transform="translate(410.7 87.9) rotate(90)" font-size="4.9">19</text><text transform="translate(426.7 87.9) rotate(90)" font-size="4.9">18</text><text transform="translate(442.8 87.9) rotate(90)" font-size="4.9">17</text><text transform="translate(458.9 87.9) rotate(90)" font-size="4.9">16</text><text transform="translate(475.0 87.9) rotate(90)" font-size="4.9">15</text><text transform="translate(491.1 87.9) rotate(90)" font-size="4.9">14</text><text transform="translate(507.1 87.9) rotate(90)" font-size="4.9">13</text><text transform="translate(523.2 87.9) rotate(90)" font-size="4.9">12</text><text transform="translate(539.3 87.9) rotate(90)" font-size="4.9">11</text><text transform="translate(555.4 87.9) rotate(90)" font-size="4.9">10</text><text transform="translate(571.5 87.9) rotate(90)" font-size="4.9">9</text><text transform="translate(587.5 87.9) rotate(90)" font-size="4.9">8</text><text transform="translate(603.6 87.9) rotate(90)" font-size="4.9">7</text><text transform="translate(619.7 87.9) rotate(90)" font-size="4.9">6</text><text transform="translate(635.8 87.9) rotate(90)" font-size="4.9">5</text><text transform="translate(651.9 87.9) rotate(90)" font-size="4.9">4</text><text transform="translate(667.9 87.9) rotate(90)" font-size="4.9">3</text><text transform="translate(684.0 87.9) rotate(90)" font-size="4.9">2</text><text transform="translate(700.1 87.9) rotate(90)" font-size="4.9">1</text><text transform="translate(333.2 122.4) rotate(90)" font-size="4.9">A</text><text transform="translate(333.2 138.5) rotate(90)" font-size="4.9">B</text><text transform="translate(333.2 154.6) rotate(90)" font-size="4.9">C</text><text transform="translate(333.2 170.7) rotate(90)" font-size="4.9">D</text><text transform="translate(333.2 186.8) rotate(90)" font-size="4.9">E</text><text transform="translate(333.2 202.8) rotate(90)" font-size="4.9">F</text><text transform="translate(333.2 218.9) rotate(90)" font-size="4.9">G</text><text transform="translate(333.2 235.0) rotate(90)" font-size="4.9">H</text><text transform="translate(333.2 251.1) rotate(90)" font-size="4.9">I</text><text transform="translate(333.2 267.2) rotate(90)" font-size="4.9">J</text><text transform="translate(333.2 283.2) rotate(90)" font-size="4.9">K</text><text transform="translate(333.2 299.3) rotate(90)" font-size="4.9">L</text><text transform="translate(333.2 315.4) rotate(90)" font-size="4.9">M</text><text transform="translate(333.2 331.5) rotate(90)" font-size="4.9">N</text><text transform="translate(333.2 347.6) rotate(90)" font-size="4.9">O</text><text transform="translate(333.2 363.6) rotate(90)" font-size="4.9">P</text><text transform="translate(333.2 379.7) rotate(90)" font-size="4.9">Q</text><text transform="translate(333.2 395.8) rotate(90)" font-size="4.9">R</text><text transform="translate(333.2 411.9) rotate(90)" font-size="4.9">S</text><text transform="translate(333.2 428.0) rotate(90)" font-size="4.9">T</text><text transform="translate(333.2 444.0) rotate(90)" font-size="4.9">U</text><text transform="translate(333.2 460.1) rotate(90)" font-size="4.9">V</text><text transform="translate(333.2 476.2) rotate(90)" font-size="4.9">W</text><text transform="translate(333.2 492.3) rotate(90)" font-size="4.9">X</text><text transform="translate(333.2 508.4) rotate(90)" font-size="4.9">Y</text><text transform="translate(333.2 524.4) rotate(90)" font-size="4.9">Z</text><text transform="translate(333.2 539.2) rotate(90)" font-size="4.9">2A</text><text transform="translate(333.2 555.3) rotate(90)" font-size="4.9">2B</text><text transform="translate(333.2 571.4) rotate(90)" font-size="4.9">2C</text><text transform="translate(333.2 587.5) rotate(90)" font-size="4.9">2D</text><text transform="translate(726.6 298) rotate(90)" font-size="8.3" font-weight="bold" fill="#111" textLength="117.5" lengthAdjust="spacingAndGlyphs">Inkjet-2Page_withNeutrals.ti2</text><text transform="translate(717.9 278) rotate(90)" font-size="6.4" fill="#444" textLength="157.5" lengthAdjust="spacingAndGlyphs">i1Profiler Test Chart Page: 1 of 3. Size: 27.1 x 21.5 cm</text><text transform="translate(311.8 448.6) rotate(90)" font-size="4.7" fill="#333" textLength="147" lengthAdjust="spacingAndGlyphs">Copyright © 2011-2024 X-Rite, Incorporated. All rights reserved.</text></g></svg>
<div class="a" style="left:1053px;top:0;width:2px;height:945px;background:#909090"></div>
<div class="a" style="left:0;top:718px;width:1053px;height:50px;background:#4d4d4d"></div>
<div class="a" style="left:0;top:768px;width:1053px;height:2px;background:#8c8c8c"></div>
<div class="a" style="left:0;top:770px;width:1053px;height:16px;background:#323232"></div>
<div class="a" style="left:0;top:945px;width:1402px;height:2px;background:#8c8c8c"></div>
<div class="tb" style="left:253px;width:32px"></div>
<div class="tb" style="left:291px;width:32px;background:#434343;border-color:#5e5e5e"></div>
<div class="tb" style="left:329px;width:32px"></div>
<div class="tb" style="left:367px;width:124px"></div>
<div class="a" style="left:400px;top:727px;width:2px;height:30px;background:#707070"></div>
<div class="a" style="left:432px;top:727px;width:2px;height:30px;background:#707070"></div>
<div class="tb" style="left:497px;width:44px"></div>
<div class="tb" style="left:547px;width:136px;background:#404040;border-color:#646464"></div>
<div class="a" style="left:587px;top:727px;width:56px;height:30px;background:#4d4d4d;border-left:1px solid #6a6a6a;border-right:1px solid #6a6a6a"></div>
<svg class="a" style="left:240px;top:718px" width="460" height="50" viewBox="240 718 460 50">
<path d="M275.2 741 V737.6 H270.6 V732.8 H261.6 V751.5 H275.2 V749.6" fill="none" stroke="#fff" stroke-width="1.3"/>
<path d="M271.5 732.9 L275.2 736.7 H271.5 Z" fill="#f4f4f4"/>
<path d="M271 745.2 H279.2 M275.1 741.1 V749.3" stroke="#fff" stroke-width="2.1" fill="none"/>
<path d="M312.4 735.5 V732.8 H298.6 V751.5 H312.4 V746.5" fill="none" stroke="#8a8a8a" stroke-width="1.1"/>
<path d="M308.3 736.4 L316.5 744.6 M316.5 736.4 L308.3 744.6" stroke="#969696" stroke-width="1.8" fill="none"/>
<path d="M337.5 731.3 V751 M337 734.6 H354.2" stroke="#fff" stroke-width="1.2" fill="none"/>
<path d="M334 734.4 L337.2 731.2 V734.4 Z" fill="#fff"/>
<rect x="340.2" y="737.2" width="4.7" height="4.7" fill="#eee"/><rect x="348.3" y="737.2" width="4.7" height="4.7" fill="#eee"/><rect x="340.2" y="745.2" width="4.7" height="4.7" fill="#eee"/>
<path d="M347.2 743.9 H353 L351 745.9 L353.4 749.2 L351.8 750.5 L349.3 747.4 L347.2 749.6 Z" fill="#f0f0f0"/>
<circle cx="382.8" cy="740.6" r="6" fill="none" stroke="#fff" stroke-width="1.7"/><path d="M387.3 745.2 L393.2 751" stroke="#fff" stroke-width="2" stroke-linecap="round"/><path d="M379.8 740.6 H385.8" stroke="#fff" stroke-width="1.9"/>
<circle cx="415.8" cy="740.6" r="6" fill="none" stroke="#fff" stroke-width="1.7"/><path d="M420.3 745.2 L426.2 751" stroke="#fff" stroke-width="2" stroke-linecap="round"/><path d="M412.8 740.6 H418.8 M415.8 737.6 V743.6" stroke="#fff" stroke-width="1.9"/>
<path d="M479 748.2 H487 L483 753.6 Z" fill="#fff"/>
<path d="M506.9 733 H523 V747.1 H517.1 V752.9 H506.9 Z" fill="#f4f4f4"/><path d="M518.6 748.6 H523 L518.6 753 Z" fill="#fff"/>
<text x="515.1" y="747.9" font-family="Liberation Sans, sans-serif" font-size="15.2" fill="#2a2a2a" text-anchor="middle" transform="translate(515.1 0) scale(.8 1) translate(-515.1 0)">A</text>
<rect x="517.1" y="747.1" width="1.2" height="1.2" fill="#333"/>
<path d="M528.7 748 H537.1 L532.9 753.9 Z" fill="#fff"/>
<path d="M556.4 742 L568.6 735.1 V739 H577.2 V745 H568.6 V748.9 Z" fill="#a4a4a4"/>
<path d="M673.8 742 L661.6 735.1 V739 H652.8 V745 H661.6 V748.9 Z" fill="#a4a4a4"/>
</svg>
<div class="t" style="left:447px;top:734px;font-size:12px;-webkit-text-stroke:.2px #fff">200%</div>
<div class="t" style="left:587px;width:56px;text-align:center;top:734px;font-size:12px;-webkit-text-stroke:.25px #fff">1/1</div>
<div class="cb" style="left:695px;top:735px"></div>
<div class="t fb" style="left:713px;top:735px">Soft proofing</div>
<svg class="a" style="left:1036px;top:770px" width="17" height="16" viewBox="1036 770 17 16"><path d="M1040.4 772 L1045 776.6 L1049.6 772 M1040.4 777.6 L1045 782.4 L1049.6 777.6" fill="none" stroke="#fff" stroke-width="1.3"/></svg>
<svg class="a" style="left:0;top:786px" width="1053" height="159" viewBox="0 786 1053 159">
<linearGradient id="ng" x1="0" x2="1" y1="0" y2="0"><stop offset="0" stop-color="#0c140c"/><stop offset=".2" stop-color="#2c4430"/><stop offset=".4" stop-color="#60746c"/><stop offset=".58" stop-color="#9494a8"/><stop offset=".76" stop-color="#ccc0d8"/><stop offset=".9" stop-color="#ecdcec"/><stop offset="1" stop-color="#f6f8fa"/></linearGradient>
<rect x="3.7" y="801.6" width="102.7" height="126.6" rx="3" fill="#353535" stroke="#c47c30" stroke-width="1.3"/>
<rect x="14.8" y="816.8" width="80.3" height="63.1" fill="#fff"/>
<rect x="19.0" y="821.7" width="0.5" height="53.2" fill="#444"/>
<rect x="19.6" y="821.7" width="2.5" height="2.5" fill="#d04"/>
<rect x="21.6" y="821.7" width="2.5" height="2.5" fill="#8f4"/>
<rect x="23.6" y="821.7" width="2.5" height="2.5" fill="#a62"/>
<rect x="25.6" y="821.7" width="2.5" height="2.5" fill="#ff0"/>
<rect x="27.5" y="821.7" width="2.5" height="2.5" fill="#0ff"/>
<rect x="29.5" y="821.7" width="2.5" height="2.5" fill="#000"/>
<rect x="31.5" y="821.7" width="2.5" height="2.5" fill="#b4e"/>
<rect x="33.5" y="821.7" width="2.5" height="2.5" fill="#ff0"/>
<rect x="35.5" y="821.7" width="2.5" height="2.5" fill="#511"/>
<rect x="37.5" y="821.7" width="2.5" height="2.5" fill="#fa0"/>
<rect x="39.4" y="821.7" width="2.5" height="2.5" fill="#00f"/>
<rect x="41.4" y="821.7" width="2.5" height="2.5" fill="#f00"/>
<rect x="43.4" y="821.7" width="2.5" height="2.5" fill="#e6c"/>
<rect x="45.4" y="821.7" width="2.5" height="2.5" fill="#24a"/>
<rect x="47.4" y="821.7" width="2.5" height="2.5" fill="#0ff"/>
<rect x="49.4" y="821.7" width="2.5" height="2.5" fill="#c0c"/>
<rect x="51.3" y="821.7" width="2.5" height="2.5" fill="#f00"/>
<rect x="53.3" y="821.7" width="2.5" height="2.5" fill="#e6c"/>
<rect x="55.3" y="821.7" width="2.5" height="2.5" fill="#ff0"/>
<rect x="57.3" y="821.7" width="2.5" height="2.5" fill="#e8e"/>
<rect x="59.3" y="821.7" width="2.5" height="2.5" fill="#084"/>
<rect x="61.3" y="821.7" width="2.5" height="2.5" fill="#ff0"/>
<rect x="63.2" y="821.7" width="2.5" height="2.5" fill="#a62"/>
<rect x="65.2" y="821.7" width="2.5" height="2.5" fill="#ff0"/>
<rect x="67.2" y="821.7" width="2.0" height="2.5" fill="#084"/>
<rect x="19.6" y="823.7" width="2.5" height="2.5" fill="#00f"/>
<rect x="21.6" y="823.7" width="2.5" height="2.5" fill="#f8a"/>
<rect x="23.6" y="823.7" width="2.5" height="2.5" fill="#fc8"/>
<rect x="25.6" y="823.7" width="2.5" height="2.5" fill="#24a"/>
<rect x="27.5" y="823.7" width="2.5" height="2.5" fill="#8f4"/>
<rect x="29.5" y="823.7" width="2.5" height="2.5" fill="#e8e"/>
<rect x="31.5" y="823.7" width="2.5" height="2.5" fill="#080"/>
<rect x="33.5" y="823.7" width="2.5" height="2.5" fill="#a0f"/>
<rect x="35.5" y="823.7" width="2.5" height="2.5" fill="#000"/>
<rect x="37.5" y="823.7" width="2.5" height="2.5" fill="#0a4"/>
<rect x="39.4" y="823.7" width="2.5" height="2.5" fill="#b4e"/>
<rect x="41.4" y="823.7" width="2.5" height="2.5" fill="#000"/>
<rect x="43.4" y="823.7" width="2.5" height="2.5" fill="#0ff"/>
<rect x="45.4" y="823.7" width="2.5" height="2.5" fill="#ff0"/>
<rect x="47.4" y="823.7" width="2.5" height="2.5" fill="#fa0"/>
<rect x="49.4" y="823.7" width="2.5" height="2.5" fill="#135"/>
<rect x="51.3" y="823.7" width="2.5" height="2.5" fill="#e6c"/>
<rect x="53.3" y="823.7" width="2.5" height="2.5" fill="#d04"/>
<rect x="55.3" y="823.7" width="2.5" height="2.5" fill="#c82"/>
<rect x="57.3" y="823.7" width="2.5" height="2.5" fill="#c82"/>
<rect x="59.3" y="823.7" width="2.5" height="2.5" fill="#b4e"/>
<rect x="61.3" y="823.7" width="2.5" height="2.5" fill="#080"/>
<rect x="63.2" y="823.7" width="2.5" height="2.5" fill="#c0c"/>
<rect x="65.2" y="823.7" width="2.5" height="2.5" fill="#a0f"/>
<rect x="67.2" y="823.7" width="2.0" height="2.5" fill="#c0c"/>
<rect x="19.6" y="825.6" width="2.5" height="2.5" fill="#f00"/>
<rect x="21.6" y="825.6" width="2.5" height="2.5" fill="#080"/>
<rect x="23.6" y="825.6" width="2.5" height="2.5" fill="#135"/>
<rect x="25.6" y="825.6" width="2.5" height="2.5" fill="#06c"/>
<rect x="27.5" y="825.6" width="2.5" height="2.5" fill="#7d7"/>
<rect x="29.5" y="825.6" width="2.5" height="2.5" fill="#fc8"/>
<rect x="31.5" y="825.6" width="2.5" height="2.5" fill="#0ff"/>
<rect x="33.5" y="825.6" width="2.5" height="2.5" fill="#e8e"/>
<rect x="35.5" y="825.6" width="2.5" height="2.5" fill="#511"/>
<rect x="37.5" y="825.6" width="2.5" height="2.5" fill="#24a"/>
<rect x="39.4" y="825.6" width="2.5" height="2.5" fill="#48f"/>
<rect x="41.4" y="825.6" width="2.5" height="2.5" fill="#06c"/>
<rect x="43.4" y="825.6" width="2.5" height="2.5" fill="#8f4"/>
<rect x="45.4" y="825.6" width="2.5" height="2.5" fill="#135"/>
<rect x="47.4" y="825.6" width="2.5" height="2.5" fill="#24a"/>
<rect x="49.4" y="825.6" width="2.5" height="2.5" fill="#00f"/>
<rect x="51.3" y="825.6" width="2.5" height="2.5" fill="#0ff"/>
<rect x="53.3" y="825.6" width="2.5" height="2.5" fill="#d04"/>
<rect x="55.3" y="825.6" width="2.5" height="2.5" fill="#06c"/>
<rect x="57.3" y="825.6" width="2.5" height="2.5" fill="#6c2"/>
<rect x="59.3" y="825.6" width="2.5" height="2.5" fill="#135"/>
<rect x="61.3" y="825.6" width="2.5" height="2.5" fill="#c82"/>
<rect x="63.2" y="825.6" width="2.5" height="2.5" fill="#0ff"/>
<rect x="65.2" y="825.6" width="2.5" height="2.5" fill="#f00"/>
<rect x="67.2" y="825.6" width="2.0" height="2.5" fill="#408"/>
<rect x="19.6" y="827.6" width="2.5" height="2.5" fill="#fff"/>
<rect x="21.6" y="827.6" width="2.5" height="2.5" fill="#0ff"/>
<rect x="23.6" y="827.6" width="2.5" height="2.5" fill="#ff0"/>
<rect x="25.6" y="827.6" width="2.5" height="2.5" fill="#080"/>
<rect x="27.5" y="827.6" width="2.5" height="2.5" fill="#7d7"/>
<rect x="29.5" y="827.6" width="2.5" height="2.5" fill="#fc8"/>
<rect x="31.5" y="827.6" width="2.5" height="2.5" fill="#2a8"/>
<rect x="33.5" y="827.6" width="2.5" height="2.5" fill="#6c2"/>
<rect x="35.5" y="827.6" width="2.5" height="2.5" fill="#0f0"/>
<rect x="37.5" y="827.6" width="2.5" height="2.5" fill="#c82"/>
<rect x="39.4" y="827.6" width="2.5" height="2.5" fill="#6c2"/>
<rect x="41.4" y="827.6" width="2.5" height="2.5" fill="#48f"/>
<rect x="43.4" y="827.6" width="2.5" height="2.5" fill="#e8e"/>
<rect x="45.4" y="827.6" width="2.5" height="2.5" fill="#135"/>
<rect x="47.4" y="827.6" width="2.5" height="2.5" fill="#ff0"/>
<rect x="49.4" y="827.6" width="2.5" height="2.5" fill="#fa0"/>
<rect x="51.3" y="827.6" width="2.5" height="2.5" fill="#fc8"/>
<rect x="53.3" y="827.6" width="2.5" height="2.5" fill="#f8a"/>
<rect x="55.3" y="827.6" width="2.5" height="2.5" fill="#c0c"/>
<rect x="57.3" y="827.6" width="2.5" height="2.5" fill="#a62"/>
<rect x="59.3" y="827.6" width="2.5" height="2.5" fill="#a62"/>
<rect x="61.3" y="827.6" width="2.5" height="2.5" fill="#135"/>
<rect x="63.2" y="827.6" width="2.5" height="2.5" fill="#f00"/>
<rect x="65.2" y="827.6" width="2.5" height="2.5" fill="#48f"/>
<rect x="67.2" y="827.6" width="2.0" height="2.5" fill="#7d7"/>
<rect x="19.6" y="829.6" width="2.5" height="2.5" fill="#a62"/>
<rect x="21.6" y="829.6" width="2.5" height="2.5" fill="#408"/>
<rect x="23.6" y="829.6" width="2.5" height="2.5" fill="#f8a"/>
<rect x="25.6" y="829.6" width="2.5" height="2.5" fill="#e6c"/>
<rect x="27.5" y="829.6" width="2.5" height="2.5" fill="#408"/>
<rect x="29.5" y="829.6" width="2.5" height="2.5" fill="#24a"/>
<rect x="31.5" y="829.6" width="2.5" height="2.5" fill="#6c2"/>
<rect x="33.5" y="829.6" width="2.5" height="2.5" fill="#2a8"/>
<rect x="35.5" y="829.6" width="2.5" height="2.5" fill="#084"/>
<rect x="37.5" y="829.6" width="2.5" height="2.5" fill="#8f4"/>
<rect x="39.4" y="829.6" width="2.5" height="2.5" fill="#f00"/>
<rect x="41.4" y="829.6" width="2.5" height="2.5" fill="#a0f"/>
<rect x="43.4" y="829.6" width="2.5" height="2.5" fill="#8f4"/>
<rect x="45.4" y="829.6" width="2.5" height="2.5" fill="#084"/>
<rect x="47.4" y="829.6" width="2.5" height="2.5" fill="#084"/>
<rect x="49.4" y="829.6" width="2.5" height="2.5" fill="#f0f"/>
<rect x="51.3" y="829.6" width="2.5" height="2.5" fill="#135"/>
<rect x="53.3" y="829.6" width="2.5" height="2.5" fill="#a0f"/>
<rect x="55.3" y="829.6" width="2.5" height="2.5" fill="#4fc"/>
<rect x="57.3" y="829.6" width="2.5" height="2.5" fill="#fc8"/>
<rect x="59.3" y="829.6" width="2.5" height="2.5" fill="#f0f"/>
<rect x="61.3" y="829.6" width="2.5" height="2.5" fill="#8f4"/>
<rect x="63.2" y="829.6" width="2.5" height="2.5" fill="#24a"/>
<rect x="65.2" y="829.6" width="2.5" height="2.5" fill="#b4e"/>
<rect x="67.2" y="829.6" width="2.0" height="2.5" fill="#d04"/>
<rect x="19.6" y="831.6" width="2.5" height="2.5" fill="#f8a"/>
<rect x="21.6" y="831.6" width="2.5" height="2.5" fill="#511"/>
<rect x="23.6" y="831.6" width="2.5" height="2.5" fill="#ff0"/>
<rect x="25.6" y="831.6" width="2.5" height="2.5" fill="#c82"/>
<rect x="27.5" y="831.6" width="2.5" height="2.5" fill="#a62"/>
<rect x="29.5" y="831.6" width="2.5" height="2.5" fill="#a62"/>
<rect x="31.5" y="831.6" width="2.5" height="2.5" fill="#a62"/>
<rect x="33.5" y="831.6" width="2.5" height="2.5" fill="#a62"/>
<rect x="35.5" y="831.6" width="2.5" height="2.5" fill="#000"/>
<rect x="37.5" y="831.6" width="2.5" height="2.5" fill="#fff"/>
<rect x="39.4" y="831.6" width="2.5" height="2.5" fill="#a62"/>
<rect x="41.4" y="831.6" width="2.5" height="2.5" fill="#ff0"/>
<rect x="43.4" y="831.6" width="2.5" height="2.5" fill="#0a4"/>
<rect x="45.4" y="831.6" width="2.5" height="2.5" fill="#0ff"/>
<rect x="47.4" y="831.6" width="2.5" height="2.5" fill="#fa0"/>
<rect x="49.4" y="831.6" width="2.5" height="2.5" fill="#7d7"/>
<rect x="51.3" y="831.6" width="2.5" height="2.5" fill="#48f"/>
<rect x="53.3" y="831.6" width="2.5" height="2.5" fill="#e8e"/>
<rect x="55.3" y="831.6" width="2.5" height="2.5" fill="#06c"/>
<rect x="57.3" y="831.6" width="2.5" height="2.5" fill="#ff0"/>
<rect x="59.3" y="831.6" width="2.5" height="2.5" fill="#000"/>
<rect x="61.3" y="831.6" width="2.5" height="2.5" fill="#f0f"/>
<rect x="63.2" y="831.6" width="2.5" height="2.5" fill="#8f4"/>
<rect x="65.2" y="831.6" width="2.5" height="2.5" fill="#000"/>
<rect x="67.2" y="831.6" width="2.0" height="2.5" fill="#b4e"/>
<rect x="19.6" y="833.5" width="2.5" height="2.5" fill="#0f0"/>
<rect x="21.6" y="833.5" width="2.5" height="2.5" fill="#0ff"/>
<rect x="23.6" y="833.5" width="2.5" height="2.5" fill="#fa0"/>
<rect x="25.6" y="833.5" width="2.5" height="2.5" fill="#2a8"/>
<rect x="27.5" y="833.5" width="2.5" height="2.5" fill="#8f4"/>
<rect x="29.5" y="833.5" width="2.5" height="2.5" fill="#4fc"/>
<rect x="31.5" y="833.5" width="2.5" height="2.5" fill="#6c2"/>
<rect x="33.5" y="833.5" width="2.5" height="2.5" fill="#b4e"/>
<rect x="35.5" y="833.5" width="2.5" height="2.5" fill="#fff"/>
<rect x="37.5" y="833.5" width="2.5" height="2.5" fill="#e8e"/>
<rect x="39.4" y="833.5" width="2.5" height="2.5" fill="#e8e"/>
<rect x="41.4" y="833.5" width="2.5" height="2.5" fill="#135"/>
<rect x="43.4" y="833.5" width="2.5" height="2.5" fill="#c82"/>
<rect x="45.4" y="833.5" width="2.5" height="2.5" fill="#fff"/>
<rect x="47.4" y="833.5" width="2.5" height="2.5" fill="#fff"/>
<rect x="49.4" y="833.5" width="2.5" height="2.5" fill="#080"/>
<rect x="51.3" y="833.5" width="2.5" height="2.5" fill="#f00"/>
<rect x="53.3" y="833.5" width="2.5" height="2.5" fill="#8f4"/>
<rect x="55.3" y="833.5" width="2.5" height="2.5" fill="#000"/>
<rect x="57.3" y="833.5" width="2.5" height="2.5" fill="#06c"/>
<rect x="59.3" y="833.5" width="2.5" height="2.5" fill="#4fc"/>
<rect x="61.3" y="833.5" width="2.5" height="2.5" fill="#fff"/>
<rect x="63.2" y="833.5" width="2.5" height="2.5" fill="#48f"/>
<rect x="65.2" y="833.5" width="2.5" height="2.5" fill="#0f0"/>
<rect x="67.2" y="833.5" width="2.0" height="2.5" fill="#fa0"/>
<rect x="19.6" y="835.5" width="2.5" height="2.5" fill="#b4e"/>
<rect x="21.6" y="835.5" width="2.5" height="2.5" fill="#8f4"/>
<rect x="23.6" y="835.5" width="2.5" height="2.5" fill="#0f0"/>
<rect x="25.6" y="835.5" width="2.5" height="2.5" fill="#080"/>
<rect x="27.5" y="835.5" width="2.5" height="2.5" fill="#f00"/>
<rect x="29.5" y="835.5" width="2.5" height="2.5" fill="#4fc"/>
<rect x="31.5" y="835.5" width="2.5" height="2.5" fill="#b4e"/>
<rect x="33.5" y="835.5" width="2.5" height="2.5" fill="#48f"/>
<rect x="35.5" y="835.5" width="2.5" height="2.5" fill="#6c2"/>
<rect x="37.5" y="835.5" width="2.5" height="2.5" fill="#084"/>
<rect x="39.4" y="835.5" width="2.5" height="2.5" fill="#511"/>
<rect x="41.4" y="835.5" width="2.5" height="2.5" fill="#06c"/>
<rect x="43.4" y="835.5" width="2.5" height="2.5" fill="#084"/>
<rect x="45.4" y="835.5" width="2.5" height="2.5" fill="#0a4"/>
<rect x="47.4" y="835.5" width="2.5" height="2.5" fill="#c0c"/>
<rect x="49.4" y="835.5" width="2.5" height="2.5" fill="#a62"/>
<rect x="51.3" y="835.5" width="2.5" height="2.5" fill="#084"/>
<rect x="53.3" y="835.5" width="2.5" height="2.5" fill="#0a4"/>
<rect x="55.3" y="835.5" width="2.5" height="2.5" fill="#135"/>
<rect x="57.3" y="835.5" width="2.5" height="2.5" fill="#6c2"/>
<rect x="59.3" y="835.5" width="2.5" height="2.5" fill="#0f0"/>
<rect x="61.3" y="835.5" width="2.5" height="2.5" fill="#0f0"/>
<rect x="63.2" y="835.5" width="2.5" height="2.5" fill="#408"/>
<rect x="65.2" y="835.5" width="2.5" height="2.5" fill="#fff"/>
<rect x="67.2" y="835.5" width="2.0" height="2.5" fill="#4fc"/>
<rect x="19.6" y="837.5" width="2.5" height="2.5" fill="#0a4"/>
<rect x="21.6" y="837.5" width="2.5" height="2.5" fill="#6c2"/>
<rect x="23.6" y="837.5" width="2.5" height="2.5" fill="#7d7"/>
<rect x="25.6" y="837.5" width="2.5" height="2.5" fill="#6c2"/>
<rect x="27.5" y="837.5" width="2.5" height="2.5" fill="#b4e"/>
<rect x="29.5" y="837.5" width="2.5" height="2.5" fill="#f00"/>
<rect x="31.5" y="837.5" width="2.5" height="2.5" fill="#084"/>
<rect x="33.5" y="837.5" width="2.5" height="2.5" fill="#000"/>
<rect x="35.5" y="837.5" width="2.5" height="2.5" fill="#084"/>
<rect x="37.5" y="837.5" width="2.5" height="2.5" fill="#fff"/>
<rect x="39.4" y="837.5" width="2.5" height="2.5" fill="#0a4"/>
<rect x="41.4" y="837.5" width="2.5" height="2.5" fill="#06c"/>
<rect x="43.4" y="837.5" width="2.5" height="2.5" fill="#fa0"/>
<rect x="45.4" y="837.5" width="2.5" height="2.5" fill="#fff"/>
<rect x="47.4" y="837.5" width="2.5" height="2.5" fill="#f0f"/>
<rect x="49.4" y="837.5" width="2.5" height="2.5" fill="#fff"/>
<rect x="51.3" y="837.5" width="2.5" height="2.5" fill="#6c2"/>
<rect x="53.3" y="837.5" width="2.5" height="2.5" fill="#f00"/>
<rect x="55.3" y="837.5" width="2.5" height="2.5" fill="#e8e"/>
<rect x="57.3" y="837.5" width="2.5" height="2.5" fill="#2a8"/>
<rect x="59.3" y="837.5" width="2.5" height="2.5" fill="#0a4"/>
<rect x="61.3" y="837.5" width="2.5" height="2.5" fill="#fff"/>
<rect x="63.2" y="837.5" width="2.5" height="2.5" fill="#a0f"/>
<rect x="65.2" y="837.5" width="2.5" height="2.5" fill="#e6c"/>
<rect x="67.2" y="837.5" width="2.0" height="2.5" fill="#06c"/>
<rect x="19.6" y="839.4" width="2.5" height="2.5" fill="#f00"/>
<rect x="21.6" y="839.4" width="2.5" height="2.5" fill="#a62"/>
<rect x="23.6" y="839.4" width="2.5" height="2.5" fill="#c82"/>
<rect x="25.6" y="839.4" width="2.5" height="2.5" fill="#a62"/>
<rect x="27.5" y="839.4" width="2.5" height="2.5" fill="#f00"/>
<rect x="29.5" y="839.4" width="2.5" height="2.5" fill="#48f"/>
<rect x="31.5" y="839.4" width="2.5" height="2.5" fill="#48f"/>
<rect x="33.5" y="839.4" width="2.5" height="2.5" fill="#f8a"/>
<rect x="35.5" y="839.4" width="2.5" height="2.5" fill="#0f0"/>
<rect x="37.5" y="839.4" width="2.5" height="2.5" fill="#8f4"/>
<rect x="39.4" y="839.4" width="2.5" height="2.5" fill="#c82"/>
<rect x="41.4" y="839.4" width="2.5" height="2.5" fill="#8f4"/>
<rect x="43.4" y="839.4" width="2.5" height="2.5" fill="#fff"/>
<rect x="45.4" y="839.4" width="2.5" height="2.5" fill="#6c2"/>
<rect x="47.4" y="839.4" width="2.5" height="2.5" fill="#8f4"/>
<rect x="49.4" y="839.4" width="2.5" height="2.5" fill="#f8a"/>
<rect x="51.3" y="839.4" width="2.5" height="2.5" fill="#0f0"/>
<rect x="53.3" y="839.4" width="2.5" height="2.5" fill="#f0f"/>
<rect x="55.3" y="839.4" width="2.5" height="2.5" fill="#000"/>
<rect x="57.3" y="839.4" width="2.5" height="2.5" fill="#f8a"/>
<rect x="59.3" y="839.4" width="2.5" height="2.5" fill="#e6c"/>
<rect x="61.3" y="839.4" width="2.5" height="2.5" fill="#0a4"/>
<rect x="63.2" y="839.4" width="2.5" height="2.5" fill="#fa0"/>
<rect x="65.2" y="839.4" width="2.5" height="2.5" fill="#0f0"/>
<rect x="67.2" y="839.4" width="2.0" height="2.5" fill="#4fc"/>
<rect x="19.6" y="841.4" width="2.5" height="2.5" fill="#fa0"/>
<rect x="21.6" y="841.4" width="2.5" height="2.5" fill="#fc8"/>
<rect x="23.6" y="841.4" width="2.5" height="2.5" fill="#511"/>
<rect x="25.6" y="841.4" width="2.5" height="2.5" fill="#c0c"/>
<rect x="27.5" y="841.4" width="2.5" height="2.5" fill="#d04"/>
<rect x="29.5" y="841.4" width="2.5" height="2.5" fill="#4fc"/>
<rect x="31.5" y="841.4" width="2.5" height="2.5" fill="#24a"/>
<rect x="33.5" y="841.4" width="2.5" height="2.5" fill="#f8a"/>
<rect x="35.5" y="841.4" width="2.5" height="2.5" fill="#ff0"/>
<rect x="37.5" y="841.4" width="2.5" height="2.5" fill="#6c2"/>
<rect x="39.4" y="841.4" width="2.5" height="2.5" fill="#c82"/>
<rect x="41.4" y="841.4" width="2.5" height="2.5" fill="#24a"/>
<rect x="43.4" y="841.4" width="2.5" height="2.5" fill="#511"/>
<rect x="45.4" y="841.4" width="2.5" height="2.5" fill="#f8a"/>
<rect x="47.4" y="841.4" width="2.5" height="2.5" fill="#8f4"/>
<rect x="49.4" y="841.4" width="2.5" height="2.5" fill="#511"/>
<rect x="51.3" y="841.4" width="2.5" height="2.5" fill="#0f0"/>
<rect x="53.3" y="841.4" width="2.5" height="2.5" fill="#7d7"/>
<rect x="55.3" y="841.4" width="2.5" height="2.5" fill="#a0f"/>
<rect x="57.3" y="841.4" width="2.5" height="2.5" fill="#f0f"/>
<rect x="59.3" y="841.4" width="2.5" height="2.5" fill="#8f4"/>
<rect x="61.3" y="841.4" width="2.5" height="2.5" fill="#a0f"/>
<rect x="63.2" y="841.4" width="2.5" height="2.5" fill="#8f4"/>
<rect x="65.2" y="841.4" width="2.5" height="2.5" fill="#fff"/>
<rect x="67.2" y="841.4" width="2.0" height="2.5" fill="#e8e"/>
<rect x="19.6" y="843.4" width="2.5" height="2.5" fill="#ff0"/>
<rect x="21.6" y="843.4" width="2.5" height="2.5" fill="#d04"/>
<rect x="23.6" y="843.4" width="2.5" height="2.5" fill="#fff"/>
<rect x="25.6" y="843.4" width="2.5" height="2.5" fill="#000"/>
<rect x="27.5" y="843.4" width="2.5" height="2.5" fill="#ff0"/>
<rect x="29.5" y="843.4" width="2.5" height="2.5" fill="#c0c"/>
<rect x="31.5" y="843.4" width="2.5" height="2.5" fill="#0a4"/>
<rect x="33.5" y="843.4" width="2.5" height="2.5" fill="#408"/>
<rect x="35.5" y="843.4" width="2.5" height="2.5" fill="#00f"/>
<rect x="37.5" y="843.4" width="2.5" height="2.5" fill="#000"/>
<rect x="39.4" y="843.4" width="2.5" height="2.5" fill="#511"/>
<rect x="41.4" y="843.4" width="2.5" height="2.5" fill="#7d7"/>
<rect x="43.4" y="843.4" width="2.5" height="2.5" fill="#0f0"/>
<rect x="45.4" y="843.4" width="2.5" height="2.5" fill="#0ff"/>
<rect x="47.4" y="843.4" width="2.5" height="2.5" fill="#7d7"/>
<rect x="49.4" y="843.4" width="2.5" height="2.5" fill="#d04"/>
<rect x="51.3" y="843.4" width="2.5" height="2.5" fill="#511"/>
<rect x="53.3" y="843.4" width="2.5" height="2.5" fill="#511"/>
<rect x="55.3" y="843.4" width="2.5" height="2.5" fill="#0a4"/>
<rect x="57.3" y="843.4" width="2.5" height="2.5" fill="#408"/>
<rect x="59.3" y="843.4" width="2.5" height="2.5" fill="#7d7"/>
<rect x="61.3" y="843.4" width="2.5" height="2.5" fill="#511"/>
<rect x="63.2" y="843.4" width="2.5" height="2.5" fill="#fff"/>
<rect x="65.2" y="843.4" width="2.5" height="2.5" fill="#511"/>
<rect x="67.2" y="843.4" width="2.0" height="2.5" fill="#c0c"/>
<rect x="19.6" y="845.3" width="2.5" height="2.5" fill="#4fc"/>
<rect x="21.6" y="845.3" width="2.5" height="2.5" fill="#0a4"/>
<rect x="23.6" y="845.3" width="2.5" height="2.5" fill="#7d7"/>
<rect x="25.6" y="845.3" width="2.5" height="2.5" fill="#f8a"/>
<rect x="27.5" y="845.3" width="2.5" height="2.5" fill="#24a"/>
<rect x="29.5" y="845.3" width="2.5" height="2.5" fill="#e8e"/>
<rect x="31.5" y="845.3" width="2.5" height="2.5" fill="#a62"/>
<rect x="33.5" y="845.3" width="2.5" height="2.5" fill="#7d7"/>
<rect x="35.5" y="845.3" width="2.5" height="2.5" fill="#d04"/>
<rect x="37.5" y="845.3" width="2.5" height="2.5" fill="#0ff"/>
<rect x="39.4" y="845.3" width="2.5" height="2.5" fill="#c0c"/>
<rect x="41.4" y="845.3" width="2.5" height="2.5" fill="#e6c"/>
<rect x="43.4" y="845.3" width="2.5" height="2.5" fill="#0ff"/>
<rect x="45.4" y="845.3" width="2.5" height="2.5" fill="#fa0"/>
<rect x="47.4" y="845.3" width="2.5" height="2.5" fill="#080"/>
<rect x="49.4" y="845.3" width="2.5" height="2.5" fill="#e8e"/>
<rect x="51.3" y="845.3" width="2.5" height="2.5" fill="#8f4"/>
<rect x="53.3" y="845.3" width="2.5" height="2.5" fill="#b4e"/>
<rect x="55.3" y="845.3" width="2.5" height="2.5" fill="#8f4"/>
<rect x="57.3" y="845.3" width="2.5" height="2.5" fill="#4fc"/>
<rect x="59.3" y="845.3" width="2.5" height="2.5" fill="#f8a"/>
<rect x="61.3" y="845.3" width="2.5" height="2.5" fill="#c82"/>
<rect x="63.2" y="845.3" width="2.5" height="2.5" fill="#084"/>
<rect x="65.2" y="845.3" width="2.5" height="2.5" fill="#000"/>
<rect x="67.2" y="845.3" width="2.0" height="2.5" fill="#a62"/>
<rect x="19.6" y="847.3" width="2.5" height="2.5" fill="#135"/>
<rect x="21.6" y="847.3" width="2.5" height="2.5" fill="#48f"/>
<rect x="23.6" y="847.3" width="2.5" height="2.5" fill="#084"/>
<rect x="25.6" y="847.3" width="2.5" height="2.5" fill="#48f"/>
<rect x="27.5" y="847.3" width="2.5" height="2.5" fill="#e6c"/>
<rect x="29.5" y="847.3" width="2.5" height="2.5" fill="#511"/>
<rect x="31.5" y="847.3" width="2.5" height="2.5" fill="#a62"/>
<rect x="33.5" y="847.3" width="2.5" height="2.5" fill="#06c"/>
<rect x="35.5" y="847.3" width="2.5" height="2.5" fill="#24a"/>
<rect x="37.5" y="847.3" width="2.5" height="2.5" fill="#0a4"/>
<rect x="39.4" y="847.3" width="2.5" height="2.5" fill="#6c2"/>
<rect x="41.4" y="847.3" width="2.5" height="2.5" fill="#d04"/>
<rect x="43.4" y="847.3" width="2.5" height="2.5" fill="#f00"/>
<rect x="45.4" y="847.3" width="2.5" height="2.5" fill="#b4e"/>
<rect x="47.4" y="847.3" width="2.5" height="2.5" fill="#0f0"/>
<rect x="49.4" y="847.3" width="2.5" height="2.5" fill="#06c"/>
<rect x="51.3" y="847.3" width="2.5" height="2.5" fill="#c82"/>
<rect x="53.3" y="847.3" width="2.5" height="2.5" fill="#7d7"/>
<rect x="55.3" y="847.3" width="2.5" height="2.5" fill="#0f0"/>
<rect x="57.3" y="847.3" width="2.5" height="2.5" fill="#2a8"/>
<rect x="59.3" y="847.3" width="2.5" height="2.5" fill="#06c"/>
<rect x="61.3" y="847.3" width="2.5" height="2.5" fill="#fc8"/>
<rect x="63.2" y="847.3" width="2.5" height="2.5" fill="#511"/>
<rect x="65.2" y="847.3" width="2.5" height="2.5" fill="#0ff"/>
<rect x="67.2" y="847.3" width="2.0" height="2.5" fill="#e8e"/>
<rect x="19.6" y="849.3" width="2.5" height="2.5" fill="#084"/>
<rect x="21.6" y="849.3" width="2.5" height="2.5" fill="#000"/>
<rect x="23.6" y="849.3" width="2.5" height="2.5" fill="#f00"/>
<rect x="25.6" y="849.3" width="2.5" height="2.5" fill="#4fc"/>
<rect x="27.5" y="849.3" width="2.5" height="2.5" fill="#408"/>
<rect x="29.5" y="849.3" width="2.5" height="2.5" fill="#00f"/>
<rect x="31.5" y="849.3" width="2.5" height="2.5" fill="#a0f"/>
<rect x="33.5" y="849.3" width="2.5" height="2.5" fill="#408"/>
<rect x="35.5" y="849.3" width="2.5" height="2.5" fill="#f8a"/>
<rect x="37.5" y="849.3" width="2.5" height="2.5" fill="#e6c"/>
<rect x="39.4" y="849.3" width="2.5" height="2.5" fill="#4fc"/>
<rect x="41.4" y="849.3" width="2.5" height="2.5" fill="#a62"/>
<rect x="43.4" y="849.3" width="2.5" height="2.5" fill="#8f4"/>
<rect x="45.4" y="849.3" width="2.5" height="2.5" fill="#511"/>
<rect x="47.4" y="849.3" width="2.5" height="2.5" fill="#135"/>
<rect x="49.4" y="849.3" width="2.5" height="2.5" fill="#d04"/>
<rect x="51.3" y="849.3" width="2.5" height="2.5" fill="#f00"/>
<rect x="53.3" y="849.3" width="2.5" height="2.5" fill="#408"/>
<rect x="55.3" y="849.3" width="2.5" height="2.5" fill="#ff0"/>
<rect x="57.3" y="849.3" width="2.5" height="2.5" fill="#a0f"/>
<rect x="59.3" y="849.3" width="2.5" height="2.5" fill="#e6c"/>
<rect x="61.3" y="849.3" width="2.5" height="2.5" fill="#0ff"/>
<rect x="63.2" y="849.3" width="2.5" height="2.5" fill="#408"/>
<rect x="65.2" y="849.3" width="2.5" height="2.5" fill="#0f0"/>
<rect x="67.2" y="849.3" width="2.0" height="2.5" fill="#f00"/>
<rect x="19.6" y="851.3" width="2.5" height="2.5" fill="#4fc"/>
<rect x="21.6" y="851.3" width="2.5" height="2.5" fill="#f00"/>
<rect x="23.6" y="851.3" width="2.5" height="2.5" fill="#084"/>
<rect x="25.6" y="851.3" width="2.5" height="2.5" fill="#0ff"/>
<rect x="27.5" y="851.3" width="2.5" height="2.5" fill="#4fc"/>
<rect x="29.5" y="851.3" width="2.5" height="2.5" fill="#e8e"/>
<rect x="31.5" y="851.3" width="2.5" height="2.5" fill="#c82"/>
<rect x="33.5" y="851.3" width="2.5" height="2.5" fill="#f0f"/>
<rect x="35.5" y="851.3" width="2.5" height="2.5" fill="#06c"/>
<rect x="37.5" y="851.3" width="2.5" height="2.5" fill="#24a"/>
<rect x="39.4" y="851.3" width="2.5" height="2.5" fill="#408"/>
<rect x="41.4" y="851.3" width="2.5" height="2.5" fill="#f8a"/>
<rect x="43.4" y="851.3" width="2.5" height="2.5" fill="#00f"/>
<rect x="45.4" y="851.3" width="2.5" height="2.5" fill="#c0c"/>
<rect x="47.4" y="851.3" width="2.5" height="2.5" fill="#e8e"/>
<rect x="49.4" y="851.3" width="2.5" height="2.5" fill="#48f"/>
<rect x="51.3" y="851.3" width="2.5" height="2.5" fill="#4fc"/>
<rect x="53.3" y="851.3" width="2.5" height="2.5" fill="#ff0"/>
<rect x="55.3" y="851.3" width="2.5" height="2.5" fill="#a0f"/>
<rect x="57.3" y="851.3" width="2.5" height="2.5" fill="#0a4"/>
<rect x="59.3" y="851.3" width="2.5" height="2.5" fill="#080"/>
<rect x="61.3" y="851.3" width="2.5" height="2.5" fill="#080"/>
<rect x="63.2" y="851.3" width="2.5" height="2.5" fill="#fa0"/>
<rect x="65.2" y="851.3" width="2.5" height="2.5" fill="#fc8"/>
<rect x="67.2" y="851.3" width="2.0" height="2.5" fill="#7d7"/>
<rect x="19.6" y="853.2" width="2.5" height="2.5" fill="#511"/>
<rect x="21.6" y="853.2" width="2.5" height="2.5" fill="#a0f"/>
<rect x="23.6" y="853.2" width="2.5" height="2.5" fill="#408"/>
<rect x="25.6" y="853.2" width="2.5" height="2.5" fill="#6c2"/>
<rect x="27.5" y="853.2" width="2.5" height="2.5" fill="#0f0"/>
<rect x="29.5" y="853.2" width="2.5" height="2.5" fill="#4fc"/>
<rect x="31.5" y="853.2" width="2.5" height="2.5" fill="#00f"/>
<rect x="33.5" y="853.2" width="2.5" height="2.5" fill="#f0f"/>
<rect x="35.5" y="853.2" width="2.5" height="2.5" fill="#0f0"/>
<rect x="37.5" y="853.2" width="2.5" height="2.5" fill="#511"/>
<rect x="39.4" y="853.2" width="2.5" height="2.5" fill="#0a4"/>
<rect x="41.4" y="853.2" width="2.5" height="2.5" fill="#511"/>
<rect x="43.4" y="853.2" width="2.5" height="2.5" fill="#fff"/>
<rect x="45.4" y="853.2" width="2.5" height="2.5" fill="#c0c"/>
<rect x="47.4" y="853.2" width="2.5" height="2.5" fill="#7d7"/>
<rect x="49.4" y="853.2" width="2.5" height="2.5" fill="#000"/>
<rect x="51.3" y="853.2" width="2.5" height="2.5" fill="#e6c"/>
<rect x="53.3" y="853.2" width="2.5" height="2.5" fill="#135"/>
<rect x="55.3" y="853.2" width="2.5" height="2.5" fill="#a62"/>
<rect x="57.3" y="853.2" width="2.5" height="2.5" fill="#511"/>
<rect x="59.3" y="853.2" width="2.5" height="2.5" fill="#080"/>
<rect x="61.3" y="853.2" width="2.5" height="2.5" fill="#fa0"/>
<rect x="63.2" y="853.2" width="2.5" height="2.5" fill="#084"/>
<rect x="65.2" y="853.2" width="2.5" height="2.5" fill="#06c"/>
<rect x="67.2" y="853.2" width="2.0" height="2.5" fill="#0a4"/>
<rect x="19.6" y="855.2" width="2.5" height="2.5" fill="#f8a"/>
<rect x="21.6" y="855.2" width="2.5" height="2.5" fill="#a62"/>
<rect x="23.6" y="855.2" width="2.5" height="2.5" fill="#6c2"/>
<rect x="25.6" y="855.2" width="2.5" height="2.5" fill="#ff0"/>
<rect x="27.5" y="855.2" width="2.5" height="2.5" fill="#f8a"/>
<rect x="29.5" y="855.2" width="2.5" height="2.5" fill="#f0f"/>
<rect x="31.5" y="855.2" width="2.5" height="2.5" fill="#0ff"/>
<rect x="33.5" y="855.2" width="2.5" height="2.5" fill="#4fc"/>
<rect x="35.5" y="855.2" width="2.5" height="2.5" fill="#e6c"/>
<rect x="37.5" y="855.2" width="2.5" height="2.5" fill="#48f"/>
<rect x="39.4" y="855.2" width="2.5" height="2.5" fill="#ff0"/>
<rect x="41.4" y="855.2" width="2.5" height="2.5" fill="#f00"/>
<rect x="43.4" y="855.2" width="2.5" height="2.5" fill="#2a8"/>
<rect x="45.4" y="855.2" width="2.5" height="2.5" fill="#511"/>
<rect x="47.4" y="855.2" width="2.5" height="2.5" fill="#fc8"/>
<rect x="49.4" y="855.2" width="2.5" height="2.5" fill="#c0c"/>
<rect x="51.3" y="855.2" width="2.5" height="2.5" fill="#fc8"/>
<rect x="53.3" y="855.2" width="2.5" height="2.5" fill="#00f"/>
<rect x="55.3" y="855.2" width="2.5" height="2.5" fill="#c82"/>
<rect x="57.3" y="855.2" width="2.5" height="2.5" fill="#a0f"/>
<rect x="59.3" y="855.2" width="2.5" height="2.5" fill="#48f"/>
<rect x="61.3" y="855.2" width="2.5" height="2.5" fill="#408"/>
<rect x="63.2" y="855.2" width="2.5" height="2.5" fill="#7d7"/>
<rect x="65.2" y="855.2" width="2.5" height="2.5" fill="#f0f"/>
<rect x="67.2" y="855.2" width="2.0" height="2.5" fill="#4fc"/>
<rect x="19.6" y="857.2" width="2.5" height="2.5" fill="#b4e"/>
<rect x="21.6" y="857.2" width="2.5" height="2.5" fill="#06c"/>
<rect x="23.6" y="857.2" width="2.5" height="2.5" fill="#d04"/>
<rect x="25.6" y="857.2" width="2.5" height="2.5" fill="#c0c"/>
<rect x="27.5" y="857.2" width="2.5" height="2.5" fill="#00f"/>
<rect x="29.5" y="857.2" width="2.5" height="2.5" fill="#080"/>
<rect x="31.5" y="857.2" width="2.5" height="2.5" fill="#fa0"/>
<rect x="33.5" y="857.2" width="2.5" height="2.5" fill="#6c2"/>
<rect x="35.5" y="857.2" width="2.5" height="2.5" fill="#a0f"/>
<rect x="37.5" y="857.2" width="2.5" height="2.5" fill="#f0f"/>
<rect x="39.4" y="857.2" width="2.5" height="2.5" fill="#06c"/>
<rect x="41.4" y="857.2" width="2.5" height="2.5" fill="#2a8"/>
<rect x="43.4" y="857.2" width="2.5" height="2.5" fill="#f00"/>
<rect x="45.4" y="857.2" width="2.5" height="2.5" fill="#fff"/>
<rect x="47.4" y="857.2" width="2.5" height="2.5" fill="#408"/>
<rect x="49.4" y="857.2" width="2.5" height="2.5" fill="#511"/>
<rect x="51.3" y="857.2" width="2.5" height="2.5" fill="#0a4"/>
<rect x="53.3" y="857.2" width="2.5" height="2.5" fill="#c0c"/>
<rect x="55.3" y="857.2" width="2.5" height="2.5" fill="#511"/>
<rect x="57.3" y="857.2" width="2.5" height="2.5" fill="#f0f"/>
<rect x="59.3" y="857.2" width="2.5" height="2.5" fill="#f00"/>
<rect x="61.3" y="857.2" width="2.5" height="2.5" fill="#4fc"/>
<rect x="63.2" y="857.2" width="2.5" height="2.5" fill="#f00"/>
<rect x="65.2" y="857.2" width="2.5" height="2.5" fill="#8f4"/>
<rect x="67.2" y="857.2" width="2.0" height="2.5" fill="#a62"/>
<rect x="19.6" y="859.1" width="2.5" height="2.5" fill="#00f"/>
<rect x="21.6" y="859.1" width="2.5" height="2.5" fill="#a62"/>
<rect x="23.6" y="859.1" width="2.5" height="2.5" fill="#0f0"/>
<rect x="25.6" y="859.1" width="2.5" height="2.5" fill="#080"/>
<rect x="27.5" y="859.1" width="2.5" height="2.5" fill="#080"/>
<rect x="29.5" y="859.1" width="2.5" height="2.5" fill="#084"/>
<rect x="31.5" y="859.1" width="2.5" height="2.5" fill="#f00"/>
<rect x="33.5" y="859.1" width="2.5" height="2.5" fill="#8f4"/>
<rect x="35.5" y="859.1" width="2.5" height="2.5" fill="#2a8"/>
<rect x="37.5" y="859.1" width="2.5" height="2.5" fill="#d04"/>
<rect x="39.4" y="859.1" width="2.5" height="2.5" fill="#135"/>
<rect x="41.4" y="859.1" width="2.5" height="2.5" fill="#8f4"/>
<rect x="43.4" y="859.1" width="2.5" height="2.5" fill="#fc8"/>
<rect x="45.4" y="859.1" width="2.5" height="2.5" fill="#8f4"/>
<rect x="47.4" y="859.1" width="2.5" height="2.5" fill="#00f"/>
<rect x="49.4" y="859.1" width="2.5" height="2.5" fill="#511"/>
<rect x="51.3" y="859.1" width="2.5" height="2.5" fill="#e6c"/>
<rect x="53.3" y="859.1" width="2.5" height="2.5" fill="#511"/>
<rect x="55.3" y="859.1" width="2.5" height="2.5" fill="#f8a"/>
<rect x="57.3" y="859.1" width="2.5" height="2.5" fill="#511"/>
<rect x="59.3" y="859.1" width="2.5" height="2.5" fill="#0f0"/>
<rect x="61.3" y="859.1" width="2.5" height="2.5" fill="#084"/>
<rect x="63.2" y="859.1" width="2.5" height="2.5" fill="#f00"/>
<rect x="65.2" y="859.1" width="2.5" height="2.5" fill="#0f0"/>
<rect x="67.2" y="859.1" width="2.0" height="2.5" fill="#00f"/>
<rect x="19.6" y="861.1" width="2.5" height="2.5" fill="#f8a"/>
<rect x="21.6" y="861.1" width="2.5" height="2.5" fill="#b4e"/>
<rect x="23.6" y="861.1" width="2.5" height="2.5" fill="#000"/>
<rect x="25.6" y="861.1" width="2.5" height="2.5" fill="#2a8"/>
<rect x="27.5" y="861.1" width="2.5" height="2.5" fill="#7d7"/>
<rect x="29.5" y="861.1" width="2.5" height="2.5" fill="#ff0"/>
<rect x="31.5" y="861.1" width="2.5" height="2.5" fill="#0f0"/>
<rect x="33.5" y="861.1" width="2.5" height="2.5" fill="#c0c"/>
<rect x="35.5" y="861.1" width="2.5" height="2.5" fill="#135"/>
<rect x="37.5" y="861.1" width="2.5" height="2.5" fill="#4fc"/>
<rect x="39.4" y="861.1" width="2.5" height="2.5" fill="#f0f"/>
<rect x="41.4" y="861.1" width="2.5" height="2.5" fill="#c82"/>
<rect x="43.4" y="861.1" width="2.5" height="2.5" fill="#0ff"/>
<rect x="45.4" y="861.1" width="2.5" height="2.5" fill="#511"/>
<rect x="47.4" y="861.1" width="2.5" height="2.5" fill="#f00"/>
<rect x="49.4" y="861.1" width="2.5" height="2.5" fill="#0ff"/>
<rect x="51.3" y="861.1" width="2.5" height="2.5" fill="#fff"/>
<rect x="53.3" y="861.1" width="2.5" height="2.5" fill="#4fc"/>
<rect x="55.3" y="861.1" width="2.5" height="2.5" fill="#0ff"/>
<rect x="57.3" y="861.1" width="2.5" height="2.5" fill="#4fc"/>
<rect x="59.3" y="861.1" width="2.5" height="2.5" fill="#c0c"/>
<rect x="61.3" y="861.1" width="2.5" height="2.5" fill="#fa0"/>
<rect x="63.2" y="861.1" width="2.5" height="2.5" fill="#084"/>
<rect x="65.2" y="861.1" width="2.5" height="2.5" fill="#c82"/>
<rect x="67.2" y="861.1" width="2.0" height="2.5" fill="#135"/>
<rect x="19.6" y="863.1" width="2.5" height="2.5" fill="#2a8"/>
<rect x="21.6" y="863.1" width="2.5" height="2.5" fill="#0ff"/>
<rect x="23.6" y="863.1" width="2.5" height="2.5" fill="#fff"/>
<rect x="25.6" y="863.1" width="2.5" height="2.5" fill="#fc8"/>
<rect x="27.5" y="863.1" width="2.5" height="2.5" fill="#00f"/>
<rect x="29.5" y="863.1" width="2.5" height="2.5" fill="#0a4"/>
<rect x="31.5" y="863.1" width="2.5" height="2.5" fill="#0ff"/>
<rect x="33.5" y="863.1" width="2.5" height="2.5" fill="#8f4"/>
<rect x="35.5" y="863.1" width="2.5" height="2.5" fill="#06c"/>
<rect x="37.5" y="863.1" width="2.5" height="2.5" fill="#4fc"/>
<rect x="39.4" y="863.1" width="2.5" height="2.5" fill="#080"/>
<rect x="41.4" y="863.1" width="2.5" height="2.5" fill="#f8a"/>
<rect x="43.4" y="863.1" width="2.5" height="2.5" fill="#f0f"/>
<rect x="45.4" y="863.1" width="2.5" height="2.5" fill="#fff"/>
<rect x="47.4" y="863.1" width="2.5" height="2.5" fill="#ff0"/>
<rect x="49.4" y="863.1" width="2.5" height="2.5" fill="#135"/>
<rect x="51.3" y="863.1" width="2.5" height="2.5" fill="#408"/>
<rect x="53.3" y="863.1" width="2.5" height="2.5" fill="#000"/>
<rect x="55.3" y="863.1" width="2.5" height="2.5" fill="#fa0"/>
<rect x="57.3" y="863.1" width="2.5" height="2.5" fill="#135"/>
<rect x="59.3" y="863.1" width="2.5" height="2.5" fill="#fc8"/>
<rect x="61.3" y="863.1" width="2.5" height="2.5" fill="#fc8"/>
<rect x="63.2" y="863.1" width="2.5" height="2.5" fill="#c82"/>
<rect x="65.2" y="863.1" width="2.5" height="2.5" fill="#c82"/>
<rect x="67.2" y="863.1" width="2.0" height="2.5" fill="#c82"/>
<rect x="19.6" y="865.0" width="2.5" height="2.5" fill="#e8e"/>
<rect x="21.6" y="865.0" width="2.5" height="2.5" fill="#0a4"/>
<rect x="23.6" y="865.0" width="2.5" height="2.5" fill="#080"/>
<rect x="25.6" y="865.0" width="2.5" height="2.5" fill="#f00"/>
<rect x="27.5" y="865.0" width="2.5" height="2.5" fill="#fff"/>
<rect x="29.5" y="865.0" width="2.5" height="2.5" fill="#0f0"/>
<rect x="31.5" y="865.0" width="2.5" height="2.5" fill="#fc8"/>
<rect x="33.5" y="865.0" width="2.5" height="2.5" fill="#c82"/>
<rect x="35.5" y="865.0" width="2.5" height="2.5" fill="#0ff"/>
<rect x="37.5" y="865.0" width="2.5" height="2.5" fill="#511"/>
<rect x="39.4" y="865.0" width="2.5" height="2.5" fill="#7d7"/>
<rect x="41.4" y="865.0" width="2.5" height="2.5" fill="#408"/>
<rect x="43.4" y="865.0" width="2.5" height="2.5" fill="#2a8"/>
<rect x="45.4" y="865.0" width="2.5" height="2.5" fill="#fa0"/>
<rect x="47.4" y="865.0" width="2.5" height="2.5" fill="#fa0"/>
<rect x="49.4" y="865.0" width="2.5" height="2.5" fill="#0ff"/>
<rect x="51.3" y="865.0" width="2.5" height="2.5" fill="#f00"/>
<rect x="53.3" y="865.0" width="2.5" height="2.5" fill="#8f4"/>
<rect x="55.3" y="865.0" width="2.5" height="2.5" fill="#4fc"/>
<rect x="57.3" y="865.0" width="2.5" height="2.5" fill="#b4e"/>
<rect x="59.3" y="865.0" width="2.5" height="2.5" fill="#f8a"/>
<rect x="61.3" y="865.0" width="2.5" height="2.5" fill="#511"/>
<rect x="63.2" y="865.0" width="2.5" height="2.5" fill="#408"/>
<rect x="65.2" y="865.0" width="2.5" height="2.5" fill="#e8e"/>
<rect x="67.2" y="865.0" width="2.0" height="2.5" fill="#b4e"/>
<rect x="19.6" y="867.0" width="2.5" height="2.5" fill="#084"/>
<rect x="21.6" y="867.0" width="2.5" height="2.5" fill="#135"/>
<rect x="23.6" y="867.0" width="2.5" height="2.5" fill="#135"/>
<rect x="25.6" y="867.0" width="2.5" height="2.5" fill="#a62"/>
<rect x="27.5" y="867.0" width="2.5" height="2.5" fill="#0f0"/>
<rect x="29.5" y="867.0" width="2.5" height="2.5" fill="#48f"/>
<rect x="31.5" y="867.0" width="2.5" height="2.5" fill="#f0f"/>
<rect x="33.5" y="867.0" width="2.5" height="2.5" fill="#135"/>
<rect x="35.5" y="867.0" width="2.5" height="2.5" fill="#7d7"/>
<rect x="37.5" y="867.0" width="2.5" height="2.5" fill="#a62"/>
<rect x="39.4" y="867.0" width="2.5" height="2.5" fill="#080"/>
<rect x="41.4" y="867.0" width="2.5" height="2.5" fill="#8f4"/>
<rect x="43.4" y="867.0" width="2.5" height="2.5" fill="#24a"/>
<rect x="45.4" y="867.0" width="2.5" height="2.5" fill="#6c2"/>
<rect x="47.4" y="867.0" width="2.5" height="2.5" fill="#2a8"/>
<rect x="49.4" y="867.0" width="2.5" height="2.5" fill="#d04"/>
<rect x="51.3" y="867.0" width="2.5" height="2.5" fill="#e8e"/>
<rect x="53.3" y="867.0" width="2.5" height="2.5" fill="#06c"/>
<rect x="55.3" y="867.0" width="2.5" height="2.5" fill="#f0f"/>
<rect x="57.3" y="867.0" width="2.5" height="2.5" fill="#d04"/>
<rect x="59.3" y="867.0" width="2.5" height="2.5" fill="#06c"/>
<rect x="61.3" y="867.0" width="2.5" height="2.5" fill="#a62"/>
<rect x="63.2" y="867.0" width="2.5" height="2.5" fill="#e8e"/>
<rect x="65.2" y="867.0" width="2.5" height="2.5" fill="#0a4"/>
<rect x="67.2" y="867.0" width="2.0" height="2.5" fill="#f0f"/>
<rect x="19.6" y="869.0" width="2.5" height="2.5" fill="#fc8"/>
<rect x="21.6" y="869.0" width="2.5" height="2.5" fill="#4fc"/>
<rect x="23.6" y="869.0" width="2.5" height="2.5" fill="#b4e"/>
<rect x="25.6" y="869.0" width="2.5" height="2.5" fill="#0ff"/>
<rect x="27.5" y="869.0" width="2.5" height="2.5" fill="#a62"/>
<rect x="29.5" y="869.0" width="2.5" height="2.5" fill="#2a8"/>
<rect x="31.5" y="869.0" width="2.5" height="2.5" fill="#0ff"/>
<rect x="33.5" y="869.0" width="2.5" height="2.5" fill="#b4e"/>
<rect x="35.5" y="869.0" width="2.5" height="2.5" fill="#e6c"/>
<rect x="37.5" y="869.0" width="2.5" height="2.5" fill="#408"/>
<rect x="39.4" y="869.0" width="2.5" height="2.5" fill="#ff0"/>
<rect x="41.4" y="869.0" width="2.5" height="2.5" fill="#408"/>
<rect x="43.4" y="869.0" width="2.5" height="2.5" fill="#000"/>
<rect x="45.4" y="869.0" width="2.5" height="2.5" fill="#ff0"/>
<rect x="47.4" y="869.0" width="2.5" height="2.5" fill="#fc8"/>
<rect x="49.4" y="869.0" width="2.5" height="2.5" fill="#8f4"/>
<rect x="51.3" y="869.0" width="2.5" height="2.5" fill="#c0c"/>
<rect x="53.3" y="869.0" width="2.5" height="2.5" fill="#408"/>
<rect x="55.3" y="869.0" width="2.5" height="2.5" fill="#e6c"/>
<rect x="57.3" y="869.0" width="2.5" height="2.5" fill="#511"/>
<rect x="59.3" y="869.0" width="2.5" height="2.5" fill="#d04"/>
<rect x="61.3" y="869.0" width="2.5" height="2.5" fill="#0a4"/>
<rect x="63.2" y="869.0" width="2.5" height="2.5" fill="#b4e"/>
<rect x="65.2" y="869.0" width="2.5" height="2.5" fill="#e6c"/>
<rect x="67.2" y="869.0" width="2.0" height="2.5" fill="#0f0"/>
<rect x="19.6" y="871.0" width="2.5" height="2.5" fill="#a62"/>
<rect x="21.6" y="871.0" width="2.5" height="2.5" fill="#fa0"/>
<rect x="23.6" y="871.0" width="2.5" height="2.5" fill="#f00"/>
<rect x="25.6" y="871.0" width="2.5" height="2.5" fill="#ff0"/>
<rect x="27.5" y="871.0" width="2.5" height="2.5" fill="#24a"/>
<rect x="29.5" y="871.0" width="2.5" height="2.5" fill="#7d7"/>
<rect x="31.5" y="871.0" width="2.5" height="2.5" fill="#f8a"/>
<rect x="33.5" y="871.0" width="2.5" height="2.5" fill="#fc8"/>
<rect x="35.5" y="871.0" width="2.5" height="2.5" fill="#135"/>
<rect x="37.5" y="871.0" width="2.5" height="2.5" fill="#ff0"/>
<rect x="39.4" y="871.0" width="2.5" height="2.5" fill="#f8a"/>
<rect x="41.4" y="871.0" width="2.5" height="2.5" fill="#48f"/>
<rect x="43.4" y="871.0" width="2.5" height="2.5" fill="#fff"/>
<rect x="45.4" y="871.0" width="2.5" height="2.5" fill="#24a"/>
<rect x="47.4" y="871.0" width="2.5" height="2.5" fill="#06c"/>
<rect x="49.4" y="871.0" width="2.5" height="2.5" fill="#fc8"/>
<rect x="51.3" y="871.0" width="2.5" height="2.5" fill="#080"/>
<rect x="53.3" y="871.0" width="2.5" height="2.5" fill="#4fc"/>
<rect x="55.3" y="871.0" width="2.5" height="2.5" fill="#4fc"/>
<rect x="57.3" y="871.0" width="2.5" height="2.5" fill="#a62"/>
<rect x="59.3" y="871.0" width="2.5" height="2.5" fill="#c0c"/>
<rect x="61.3" y="871.0" width="2.5" height="2.5" fill="#080"/>
<rect x="63.2" y="871.0" width="2.5" height="2.5" fill="#fff"/>
<rect x="65.2" y="871.0" width="2.5" height="2.5" fill="#a62"/>
<rect x="67.2" y="871.0" width="2.0" height="2.5" fill="#e8e"/>
<rect x="19.6" y="872.9" width="2.5" height="2.0" fill="#48f"/>
<rect x="21.6" y="872.9" width="2.5" height="2.0" fill="#48f"/>
<rect x="23.6" y="872.9" width="2.5" height="2.0" fill="#0ff"/>
<rect x="25.6" y="872.9" width="2.5" height="2.0" fill="#fa0"/>
<rect x="27.5" y="872.9" width="2.5" height="2.0" fill="#511"/>
<rect x="29.5" y="872.9" width="2.5" height="2.0" fill="#135"/>
<rect x="31.5" y="872.9" width="2.5" height="2.0" fill="#084"/>
<rect x="33.5" y="872.9" width="2.5" height="2.0" fill="#7d7"/>
<rect x="35.5" y="872.9" width="2.5" height="2.0" fill="#06c"/>
<rect x="37.5" y="872.9" width="2.5" height="2.0" fill="#7d7"/>
<rect x="39.4" y="872.9" width="2.5" height="2.0" fill="#e6c"/>
<rect x="41.4" y="872.9" width="2.5" height="2.0" fill="#f8a"/>
<rect x="43.4" y="872.9" width="2.5" height="2.0" fill="#0a4"/>
<rect x="45.4" y="872.9" width="2.5" height="2.0" fill="#c0c"/>
<rect x="47.4" y="872.9" width="2.5" height="2.0" fill="#f00"/>
<rect x="49.4" y="872.9" width="2.5" height="2.0" fill="#a0f"/>
<rect x="51.3" y="872.9" width="2.5" height="2.0" fill="#06c"/>
<rect x="53.3" y="872.9" width="2.5" height="2.0" fill="#f00"/>
<rect x="55.3" y="872.9" width="2.5" height="2.0" fill="#d04"/>
<rect x="57.3" y="872.9" width="2.5" height="2.0" fill="#c0c"/>
<rect x="59.3" y="872.9" width="2.5" height="2.0" fill="#b4e"/>
<rect x="61.3" y="872.9" width="2.5" height="2.0" fill="#4fc"/>
<rect x="63.2" y="872.9" width="2.5" height="2.0" fill="#0a4"/>
<rect x="65.2" y="872.9" width="2.5" height="2.0" fill="#0f0"/>
<rect x="67.2" y="872.9" width="2.0" height="2.0" fill="#24a"/>
<rect x="69.0" y="821.7" width="21" height="53.2" fill="url(#ng)"/>
<rect x="90.1" y="821.7" width="0.5" height="53.2" fill="#555"/>
<rect x="42.8" y="818.4" width="18" height="0.6" fill="#999"/>
<rect x="130.8" y="816.8" width="80.3" height="63.1" fill="#fff"/>
<rect x="135.0" y="821.7" width="0.5" height="53.2" fill="#444"/>
<rect x="137.7" y="821.7" width="2.5" height="2.5" fill="#084"/>
<rect x="139.7" y="821.7" width="2.5" height="2.5" fill="#b4e"/>
<rect x="141.7" y="821.7" width="2.5" height="2.5" fill="#2a8"/>
<rect x="143.7" y="821.7" width="2.5" height="2.5" fill="#f8a"/>
<rect x="145.6" y="821.7" width="2.5" height="2.5" fill="#0a4"/>
<rect x="147.6" y="821.7" width="2.5" height="2.5" fill="#00f"/>
<rect x="149.6" y="821.7" width="2.5" height="2.5" fill="#f00"/>
<rect x="151.6" y="821.7" width="2.5" height="2.5" fill="#f8a"/>
<rect x="153.6" y="821.7" width="2.5" height="2.5" fill="#c0c"/>
<rect x="155.6" y="821.7" width="2.5" height="2.5" fill="#511"/>
<rect x="157.5" y="821.7" width="2.5" height="2.5" fill="#fa0"/>
<rect x="159.5" y="821.7" width="2.5" height="2.5" fill="#a62"/>
<rect x="161.5" y="821.7" width="2.5" height="2.5" fill="#0f0"/>
<rect x="163.5" y="821.7" width="2.5" height="2.5" fill="#c82"/>
<rect x="165.5" y="821.7" width="2.5" height="2.5" fill="#135"/>
<rect x="167.5" y="821.7" width="2.5" height="2.5" fill="#c82"/>
<rect x="169.4" y="821.7" width="2.5" height="2.5" fill="#2a8"/>
<rect x="171.4" y="821.7" width="2.5" height="2.5" fill="#135"/>
<rect x="173.4" y="821.7" width="2.5" height="2.5" fill="#0a4"/>
<rect x="175.4" y="821.7" width="2.5" height="2.5" fill="#a62"/>
<rect x="177.4" y="821.7" width="2.5" height="2.5" fill="#f00"/>
<rect x="179.4" y="821.7" width="2.5" height="2.5" fill="#135"/>
<rect x="181.3" y="821.7" width="2.5" height="2.5" fill="#084"/>
<rect x="183.3" y="821.7" width="2.5" height="2.5" fill="#0f0"/>
<rect x="185.3" y="821.7" width="2.0" height="2.5" fill="#408"/>
<rect x="137.7" y="823.7" width="2.5" height="2.5" fill="#24a"/>
<rect x="139.7" y="823.7" width="2.5" height="2.5" fill="#fff"/>
<rect x="141.7" y="823.7" width="2.5" height="2.5" fill="#2a8"/>
<rect x="143.7" y="823.7" width="2.5" height="2.5" fill="#e8e"/>
<rect x="145.6" y="823.7" width="2.5" height="2.5" fill="#4fc"/>
<rect x="147.6" y="823.7" width="2.5" height="2.5" fill="#000"/>
<rect x="149.6" y="823.7" width="2.5" height="2.5" fill="#0ff"/>
<rect x="151.6" y="823.7" width="2.5" height="2.5" fill="#2a8"/>
<rect x="153.6" y="823.7" width="2.5" height="2.5" fill="#2a8"/>
<rect x="155.6" y="823.7" width="2.5" height="2.5" fill="#000"/>
<rect x="157.5" y="823.7" width="2.5" height="2.5" fill="#ff0"/>
<rect x="159.5" y="823.7" width="2.5" height="2.5" fill="#06c"/>
<rect x="161.5" y="823.7" width="2.5" height="2.5" fill="#c0c"/>
<rect x="163.5" y="823.7" width="2.5" height="2.5" fill="#f00"/>
<rect x="165.5" y="823.7" width="2.5" height="2.5" fill="#135"/>
<rect x="167.5" y="823.7" width="2.5" height="2.5" fill="#fa0"/>
<rect x="169.4" y="823.7" width="2.5" height="2.5" fill="#8f4"/>
<rect x="171.4" y="823.7" width="2.5" height="2.5" fill="#0ff"/>
<rect x="173.4" y="823.7" width="2.5" height="2.5" fill="#00f"/>
<rect x="175.4" y="823.7" width="2.5" height="2.5" fill="#135"/>
<rect x="177.4" y="823.7" width="2.5" height="2.5" fill="#0a4"/>
<rect x="179.4" y="823.7" width="2.5" height="2.5" fill="#8f4"/>
<rect x="181.3" y="823.7" width="2.5" height="2.5" fill="#c82"/>
<rect x="183.3" y="823.7" width="2.5" height="2.5" fill="#7d7"/>
<rect x="185.3" y="823.7" width="2.0" height="2.5" fill="#fc8"/>
<rect x="137.7" y="825.6" width="2.5" height="2.5" fill="#6c2"/>
<rect x="139.7" y="825.6" width="2.5" height="2.5" fill="#e6c"/>
<rect x="141.7" y="825.6" width="2.5" height="2.5" fill="#f8a"/>
<rect x="143.7" y="825.6" width="2.5" height="2.5" fill="#48f"/>
<rect x="145.6" y="825.6" width="2.5" height="2.5" fill="#000"/>
<rect x="147.6" y="825.6" width="2.5" height="2.5" fill="#d04"/>
<rect x="149.6" y="825.6" width="2.5" height="2.5" fill="#6c2"/>
<rect x="151.6" y="825.6" width="2.5" height="2.5" fill="#135"/>
<rect x="153.6" y="825.6" width="2.5" height="2.5" fill="#511"/>
<rect x="155.6" y="825.6" width="2.5" height="2.5" fill="#0a4"/>
<rect x="157.5" y="825.6" width="2.5" height="2.5" fill="#080"/>
<rect x="159.5" y="825.6" width="2.5" height="2.5" fill="#8f4"/>
<rect x="161.5" y="825.6" width="2.5" height="2.5" fill="#6c2"/>
<rect x="163.5" y="825.6" width="2.5" height="2.5" fill="#fc8"/>
<rect x="165.5" y="825.6" width="2.5" height="2.5" fill="#511"/>
<rect x="167.5" y="825.6" width="2.5" height="2.5" fill="#0ff"/>
<rect x="169.4" y="825.6" width="2.5" height="2.5" fill="#511"/>
<rect x="171.4" y="825.6" width="2.5" height="2.5" fill="#084"/>
<rect x="173.4" y="825.6" width="2.5" height="2.5" fill="#6c2"/>
<rect x="175.4" y="825.6" width="2.5" height="2.5" fill="#c0c"/>
<rect x="177.4" y="825.6" width="2.5" height="2.5" fill="#f0f"/>
<rect x="179.4" y="825.6" width="2.5" height="2.5" fill="#fc8"/>
<rect x="181.3" y="825.6" width="2.5" height="2.5" fill="#06c"/>
<rect x="183.3" y="825.6" width="2.5" height="2.5" fill="#084"/>
<rect x="185.3" y="825.6" width="2.0" height="2.5" fill="#408"/>
<rect x="137.7" y="827.6" width="2.5" height="2.5" fill="#00f"/>
<rect x="139.7" y="827.6" width="2.5" height="2.5" fill="#e6c"/>
<rect x="141.7" y="827.6" width="2.5" height="2.5" fill="#4fc"/>
<rect x="143.7" y="827.6" width="2.5" height="2.5" fill="#2a8"/>
<rect x="145.6" y="827.6" width="2.5" height="2.5" fill="#080"/>
<rect x="147.6" y="827.6" width="2.5" height="2.5" fill="#24a"/>
<rect x="149.6" y="827.6" width="2.5" height="2.5" fill="#a0f"/>
<rect x="151.6" y="827.6" width="2.5" height="2.5" fill="#a62"/>
<rect x="153.6" y="827.6" width="2.5" height="2.5" fill="#e8e"/>
<rect x="155.6" y="827.6" width="2.5" height="2.5" fill="#48f"/>
<rect x="157.5" y="827.6" width="2.5" height="2.5" fill="#0f0"/>
<rect x="159.5" y="827.6" width="2.5" height="2.5" fill="#0a4"/>
<rect x="161.5" y="827.6" width="2.5" height="2.5" fill="#48f"/>
<rect x="163.5" y="827.6" width="2.5" height="2.5" fill="#080"/>
<rect x="165.5" y="827.6" width="2.5" height="2.5" fill="#e8e"/>
<rect x="167.5" y="827.6" width="2.5" height="2.5" fill="#f0f"/>
<rect x="169.4" y="827.6" width="2.5" height="2.5" fill="#2a8"/>
<rect x="171.4" y="827.6" width="2.5" height="2.5" fill="#06c"/>
<rect x="173.4" y="827.6" width="2.5" height="2.5" fill="#48f"/>
<rect x="175.4" y="827.6" width="2.5" height="2.5" fill="#e6c"/>
<rect x="177.4" y="827.6" width="2.5" height="2.5" fill="#084"/>
<rect x="179.4" y="827.6" width="2.5" height="2.5" fill="#f8a"/>
<rect x="181.3" y="827.6" width="2.5" height="2.5" fill="#24a"/>
<rect x="183.3" y="827.6" width="2.5" height="2.5" fill="#7d7"/>
<rect x="185.3" y="827.6" width="2.0" height="2.5" fill="#24a"/>
<rect x="137.7" y="829.6" width="2.5" height="2.5" fill="#24a"/>
<rect x="139.7" y="829.6" width="2.5" height="2.5" fill="#f00"/>
<rect x="141.7" y="829.6" width="2.5" height="2.5" fill="#0ff"/>
<rect x="143.7" y="829.6" width="2.5" height="2.5" fill="#fc8"/>
<rect x="145.6" y="829.6" width="2.5" height="2.5" fill="#000"/>
<rect x="147.6" y="829.6" width="2.5" height="2.5" fill="#00f"/>
<rect x="149.6" y="829.6" width="2.5" height="2.5" fill="#f00"/>
<rect x="151.6" y="829.6" width="2.5" height="2.5" fill="#000"/>
<rect x="153.6" y="829.6" width="2.5" height="2.5" fill="#b4e"/>
<rect x="155.6" y="829.6" width="2.5" height="2.5" fill="#8f4"/>
<rect x="157.5" y="829.6" width="2.5" height="2.5" fill="#511"/>
<rect x="159.5" y="829.6" width="2.5" height="2.5" fill="#135"/>
<rect x="161.5" y="829.6" width="2.5" height="2.5" fill="#8f4"/>
<rect x="163.5" y="829.6" width="2.5" height="2.5" fill="#0ff"/>
<rect x="165.5" y="829.6" width="2.5" height="2.5" fill="#0a4"/>
<rect x="167.5" y="829.6" width="2.5" height="2.5" fill="#0f0"/>
<rect x="169.4" y="829.6" width="2.5" height="2.5" fill="#f8a"/>
<rect x="171.4" y="829.6" width="2.5" height="2.5" fill="#06c"/>
<rect x="173.4" y="829.6" width="2.5" height="2.5" fill="#2a8"/>
<rect x="175.4" y="829.6" width="2.5" height="2.5" fill="#e8e"/>
<rect x="177.4" y="829.6" width="2.5" height="2.5" fill="#080"/>
<rect x="179.4" y="829.6" width="2.5" height="2.5" fill="#6c2"/>
<rect x="181.3" y="829.6" width="2.5" height="2.5" fill="#d04"/>
<rect x="183.3" y="829.6" width="2.5" height="2.5" fill="#b4e"/>
<rect x="185.3" y="829.6" width="2.0" height="2.5" fill="#f0f"/>
<rect x="137.7" y="831.6" width="2.5" height="2.5" fill="#135"/>
<rect x="139.7" y="831.6" width="2.5" height="2.5" fill="#fa0"/>
<rect x="141.7" y="831.6" width="2.5" height="2.5" fill="#ff0"/>
<rect x="143.7" y="831.6" width="2.5" height="2.5" fill="#00f"/>
<rect x="145.6" y="831.6" width="2.5" height="2.5" fill="#a0f"/>
<rect x="147.6" y="831.6" width="2.5" height="2.5" fill="#a0f"/>
<rect x="149.6" y="831.6" width="2.5" height="2.5" fill="#06c"/>
<rect x="151.6" y="831.6" width="2.5" height="2.5" fill="#e6c"/>
<rect x="153.6" y="831.6" width="2.5" height="2.5" fill="#7d7"/>
<rect x="155.6" y="831.6" width="2.5" height="2.5" fill="#e8e"/>
<rect x="157.5" y="831.6" width="2.5" height="2.5" fill="#f00"/>
<rect x="159.5" y="831.6" width="2.5" height="2.5" fill="#0a4"/>
<rect x="161.5" y="831.6" width="2.5" height="2.5" fill="#084"/>
<rect x="163.5" y="831.6" width="2.5" height="2.5" fill="#135"/>
<rect x="165.5" y="831.6" width="2.5" height="2.5" fill="#fff"/>
<rect x="167.5" y="831.6" width="2.5" height="2.5" fill="#8f4"/>
<rect x="169.4" y="831.6" width="2.5" height="2.5" fill="#2a8"/>
<rect x="171.4" y="831.6" width="2.5" height="2.5" fill="#e8e"/>
<rect x="173.4" y="831.6" width="2.5" height="2.5" fill="#000"/>
<rect x="175.4" y="831.6" width="2.5" height="2.5" fill="#7d7"/>
<rect x="177.4" y="831.6" width="2.5" height="2.5" fill="#f8a"/>
<rect x="179.4" y="831.6" width="2.5" height="2.5" fill="#7d7"/>
<rect x="181.3" y="831.6" width="2.5" height="2.5" fill="#511"/>
<rect x="183.3" y="831.6" width="2.5" height="2.5" fill="#f00"/>
<rect x="185.3" y="831.6" width="2.0" height="2.5" fill="#fff"/>
<rect x="137.7" y="833.5" width="2.5" height="2.5" fill="#a62"/>
<rect x="139.7" y="833.5" width="2.5" height="2.5" fill="#b4e"/>
<rect x="141.7" y="833.5" width="2.5" height="2.5" fill="#c82"/>
<rect x="143.7" y="833.5" width="2.5" height="2.5" fill="#084"/>
<rect x="145.6" y="833.5" width="2.5" height="2.5" fill="#ff0"/>
<rect x="147.6" y="833.5" width="2.5" height="2.5" fill="#0a4"/>
<rect x="149.6" y="833.5" width="2.5" height="2.5" fill="#ff0"/>
<rect x="151.6" y="833.5" width="2.5" height="2.5" fill="#7d7"/>
<rect x="153.6" y="833.5" width="2.5" height="2.5" fill="#e8e"/>
<rect x="155.6" y="833.5" width="2.5" height="2.5" fill="#000"/>
<rect x="157.5" y="833.5" width="2.5" height="2.5" fill="#fa0"/>
<rect x="159.5" y="833.5" width="2.5" height="2.5" fill="#f0f"/>
<rect x="161.5" y="833.5" width="2.5" height="2.5" fill="#0f0"/>
<rect x="163.5" y="833.5" width="2.5" height="2.5" fill="#b4e"/>
<rect x="165.5" y="833.5" width="2.5" height="2.5" fill="#e6c"/>
<rect x="167.5" y="833.5" width="2.5" height="2.5" fill="#f00"/>
<rect x="169.4" y="833.5" width="2.5" height="2.5" fill="#511"/>
<rect x="171.4" y="833.5" width="2.5" height="2.5" fill="#0a4"/>
<rect x="173.4" y="833.5" width="2.5" height="2.5" fill="#511"/>
<rect x="175.4" y="833.5" width="2.5" height="2.5" fill="#084"/>
<rect x="177.4" y="833.5" width="2.5" height="2.5" fill="#d04"/>
<rect x="179.4" y="833.5" width="2.5" height="2.5" fill="#2a8"/>
<rect x="181.3" y="833.5" width="2.5" height="2.5" fill="#0a4"/>
<rect x="183.3" y="833.5" width="2.5" height="2.5" fill="#f0f"/>
<rect x="185.3" y="833.5" width="2.0" height="2.5" fill="#fc8"/>
<rect x="137.7" y="835.5" width="2.5" height="2.5" fill="#fc8"/>
<rect x="139.7" y="835.5" width="2.5" height="2.5" fill="#f00"/>
<rect x="141.7" y="835.5" width="2.5" height="2.5" fill="#d04"/>
<rect x="143.7" y="835.5" width="2.5" height="2.5" fill="#a62"/>
<rect x="145.6" y="835.5" width="2.5" height="2.5" fill="#084"/>
<rect x="147.6" y="835.5" width="2.5" height="2.5" fill="#fc8"/>
<rect x="149.6" y="835.5" width="2.5" height="2.5" fill="#f00"/>
<rect x="151.6" y="835.5" width="2.5" height="2.5" fill="#24a"/>
<rect x="153.6" y="835.5" width="2.5" height="2.5" fill="#b4e"/>
<rect x="155.6" y="835.5" width="2.5" height="2.5" fill="#d04"/>
<rect x="157.5" y="835.5" width="2.5" height="2.5" fill="#080"/>
<rect x="159.5" y="835.5" width="2.5" height="2.5" fill="#6c2"/>
<rect x="161.5" y="835.5" width="2.5" height="2.5" fill="#fc8"/>
<rect x="163.5" y="835.5" width="2.5" height="2.5" fill="#000"/>
<rect x="165.5" y="835.5" width="2.5" height="2.5" fill="#0a4"/>
<rect x="167.5" y="835.5" width="2.5" height="2.5" fill="#135"/>
<rect x="169.4" y="835.5" width="2.5" height="2.5" fill="#b4e"/>
<rect x="171.4" y="835.5" width="2.5" height="2.5" fill="#2a8"/>
<rect x="173.4" y="835.5" width="2.5" height="2.5" fill="#080"/>
<rect x="175.4" y="835.5" width="2.5" height="2.5" fill="#fa0"/>
<rect x="177.4" y="835.5" width="2.5" height="2.5" fill="#fc8"/>
<rect x="179.4" y="835.5" width="2.5" height="2.5" fill="#a62"/>
<rect x="181.3" y="835.5" width="2.5" height="2.5" fill="#2a8"/>
<rect x="183.3" y="835.5" width="2.5" height="2.5" fill="#6c2"/>
<rect x="185.3" y="835.5" width="2.0" height="2.5" fill="#b4e"/>
<rect x="137.7" y="837.5" width="2.5" height="2.5" fill="#e6c"/>
<rect x="139.7" y="837.5" width="2.5" height="2.5" fill="#0a4"/>
<rect x="141.7" y="837.5" width="2.5" height="2.5" fill="#135"/>
<rect x="143.7" y="837.5" width="2.5" height="2.5" fill="#511"/>
<rect x="145.6" y="837.5" width="2.5" height="2.5" fill="#f00"/>
<rect x="147.6" y="837.5" width="2.5" height="2.5" fill="#408"/>
<rect x="149.6" y="837.5" width="2.5" height="2.5" fill="#48f"/>
<rect x="151.6" y="837.5" width="2.5" height="2.5" fill="#0ff"/>
<rect x="153.6" y="837.5" width="2.5" height="2.5" fill="#135"/>
<rect x="155.6" y="837.5" width="2.5" height="2.5" fill="#408"/>
<rect x="157.5" y="837.5" width="2.5" height="2.5" fill="#24a"/>
<rect x="159.5" y="837.5" width="2.5" height="2.5" fill="#e8e"/>
<rect x="161.5" y="837.5" width="2.5" height="2.5" fill="#408"/>
<rect x="163.5" y="837.5" width="2.5" height="2.5" fill="#fc8"/>
<rect x="165.5" y="837.5" width="2.5" height="2.5" fill="#408"/>
<rect x="167.5" y="837.5" width="2.5" height="2.5" fill="#511"/>
<rect x="169.4" y="837.5" width="2.5" height="2.5" fill="#408"/>
<rect x="171.4" y="837.5" width="2.5" height="2.5" fill="#408"/>
<rect x="173.4" y="837.5" width="2.5" height="2.5" fill="#24a"/>
<rect x="175.4" y="837.5" width="2.5" height="2.5" fill="#c0c"/>
<rect x="177.4" y="837.5" width="2.5" height="2.5" fill="#b4e"/>
<rect x="179.4" y="837.5" width="2.5" height="2.5" fill="#c0c"/>
<rect x="181.3" y="837.5" width="2.5" height="2.5" fill="#c0c"/>
<rect x="183.3" y="837.5" width="2.5" height="2.5" fill="#511"/>
<rect x="185.3" y="837.5" width="2.0" height="2.5" fill="#c82"/>
<rect x="137.7" y="839.4" width="2.5" height="2.5" fill="#c0c"/>
<rect x="139.7" y="839.4" width="2.5" height="2.5" fill="#084"/>
<rect x="141.7" y="839.4" width="2.5" height="2.5" fill="#0a4"/>
<rect x="143.7" y="839.4" width="2.5" height="2.5" fill="#b4e"/>
<rect x="145.6" y="839.4" width="2.5" height="2.5" fill="#135"/>
<rect x="147.6" y="839.4" width="2.5" height="2.5" fill="#000"/>
<rect x="149.6" y="839.4" width="2.5" height="2.5" fill="#e8e"/>
<rect x="151.6" y="839.4" width="2.5" height="2.5" fill="#2a8"/>
<rect x="153.6" y="839.4" width="2.5" height="2.5" fill="#f00"/>
<rect x="155.6" y="839.4" width="2.5" height="2.5" fill="#48f"/>
<rect x="157.5" y="839.4" width="2.5" height="2.5" fill="#e6c"/>
<rect x="159.5" y="839.4" width="2.5" height="2.5" fill="#00f"/>
<rect x="161.5" y="839.4" width="2.5" height="2.5" fill="#f8a"/>
<rect x="163.5" y="839.4" width="2.5" height="2.5" fill="#0f0"/>
<rect x="165.5" y="839.4" width="2.5" height="2.5" fill="#0a4"/>
<rect x="167.5" y="839.4" width="2.5" height="2.5" fill="#4fc"/>
<rect x="169.4" y="839.4" width="2.5" height="2.5" fill="#f00"/>
<rect x="171.4" y="839.4" width="2.5" height="2.5" fill="#000"/>
<rect x="173.4" y="839.4" width="2.5" height="2.5" fill="#c82"/>
<rect x="175.4" y="839.4" width="2.5" height="2.5" fill="#c82"/>
<rect x="177.4" y="839.4" width="2.5" height="2.5" fill="#fc8"/>
<rect x="179.4" y="839.4" width="2.5" height="2.5" fill="#f00"/>
<rect x="181.3" y="839.4" width="2.5" height="2.5" fill="#f8a"/>
<rect x="183.3" y="839.4" width="2.5" height="2.5" fill="#6c2"/>
<rect x="185.3" y="839.4" width="2.0" height="2.5" fill="#0ff"/>
<rect x="137.7" y="841.4" width="2.5" height="2.5" fill="#d04"/>
<rect x="139.7" y="841.4" width="2.5" height="2.5" fill="#00f"/>
<rect x="141.7" y="841.4" width="2.5" height="2.5" fill="#f00"/>
<rect x="143.7" y="841.4" width="2.5" height="2.5" fill="#f8a"/>
<rect x="145.6" y="841.4" width="2.5" height="2.5" fill="#b4e"/>
<rect x="147.6" y="841.4" width="2.5" height="2.5" fill="#0ff"/>
<rect x="149.6" y="841.4" width="2.5" height="2.5" fill="#084"/>
<rect x="151.6" y="841.4" width="2.5" height="2.5" fill="#00f"/>
<rect x="153.6" y="841.4" width="2.5" height="2.5" fill="#d04"/>
<rect x="155.6" y="841.4" width="2.5" height="2.5" fill="#084"/>
<rect x="157.5" y="841.4" width="2.5" height="2.5" fill="#fc8"/>
<rect x="159.5" y="841.4" width="2.5" height="2.5" fill="#6c2"/>
<rect x="161.5" y="841.4" width="2.5" height="2.5" fill="#d04"/>
<rect x="163.5" y="841.4" width="2.5" height="2.5" fill="#0ff"/>
<rect x="165.5" y="841.4" width="2.5" height="2.5" fill="#e8e"/>
<rect x="167.5" y="841.4" width="2.5" height="2.5" fill="#6c2"/>
<rect x="169.4" y="841.4" width="2.5" height="2.5" fill="#e6c"/>
<rect x="171.4" y="841.4" width="2.5" height="2.5" fill="#48f"/>
<rect x="173.4" y="841.4" width="2.5" height="2.5" fill="#48f"/>
<rect x="175.4" y="841.4" width="2.5" height="2.5" fill="#4fc"/>
<rect x="177.4" y="841.4" width="2.5" height="2.5" fill="#2a8"/>
<rect x="179.4" y="841.4" width="2.5" height="2.5" fill="#8f4"/>
<rect x="181.3" y="841.4" width="2.5" height="2.5" fill="#e6c"/>
<rect x="183.3" y="841.4" width="2.5" height="2.5" fill="#0ff"/>
<rect x="185.3" y="841.4" width="2.0" height="2.5" fill="#000"/>
<rect x="137.7" y="843.4" width="2.5" height="2.5" fill="#084"/>
<rect x="139.7" y="843.4" width="2.5" height="2.5" fill="#f00"/>
<rect x="141.7" y="843.4" width="2.5" height="2.5" fill="#fc8"/>
<rect x="143.7" y="843.4" width="2.5" height="2.5" fill="#a0f"/>
<rect x="145.6" y="843.4" width="2.5" height="2.5" fill="#06c"/>
<rect x="147.6" y="843.4" width="2.5" height="2.5" fill="#0a4"/>
<rect x="149.6" y="843.4" width="2.5" height="2.5" fill="#000"/>
<rect x="151.6" y="843.4" width="2.5" height="2.5" fill="#ff0"/>
<rect x="153.6" y="843.4" width="2.5" height="2.5" fill="#ff0"/>
<rect x="155.6" y="843.4" width="2.5" height="2.5" fill="#a0f"/>
<rect x="157.5" y="843.4" width="2.5" height="2.5" fill="#48f"/>
<rect x="159.5" y="843.4" width="2.5" height="2.5" fill="#d04"/>
<rect x="161.5" y="843.4" width="2.5" height="2.5" fill="#fc8"/>
<rect x="163.5" y="843.4" width="2.5" height="2.5" fill="#c0c"/>
<rect x="165.5" y="843.4" width="2.5" height="2.5" fill="#511"/>
<rect x="167.5" y="843.4" width="2.5" height="2.5" fill="#fff"/>
<rect x="169.4" y="843.4" width="2.5" height="2.5" fill="#e8e"/>
<rect x="171.4" y="843.4" width="2.5" height="2.5" fill="#f00"/>
<rect x="173.4" y="843.4" width="2.5" height="2.5" fill="#f8a"/>
<rect x="175.4" y="843.4" width="2.5" height="2.5" fill="#f8a"/>
<rect x="177.4" y="843.4" width="2.5" height="2.5" fill="#084"/>
<rect x="179.4" y="843.4" width="2.5" height="2.5" fill="#d04"/>
<rect x="181.3" y="843.4" width="2.5" height="2.5" fill="#fa0"/>
<rect x="183.3" y="843.4" width="2.5" height="2.5" fill="#24a"/>
<rect x="185.3" y="843.4" width="2.0" height="2.5" fill="#a0f"/>
<rect x="137.7" y="845.3" width="2.5" height="2.5" fill="#48f"/>
<rect x="139.7" y="845.3" width="2.5" height="2.5" fill="#f8a"/>
<rect x="141.7" y="845.3" width="2.5" height="2.5" fill="#7d7"/>
<rect x="143.7" y="845.3" width="2.5" height="2.5" fill="#ff0"/>
<rect x="145.6" y="845.3" width="2.5" height="2.5" fill="#7d7"/>
<rect x="147.6" y="845.3" width="2.5" height="2.5" fill="#fc8"/>
<rect x="149.6" y="845.3" width="2.5" height="2.5" fill="#24a"/>
<rect x="151.6" y="845.3" width="2.5" height="2.5" fill="#e6c"/>
<rect x="153.6" y="845.3" width="2.5" height="2.5" fill="#b4e"/>
<rect x="155.6" y="845.3" width="2.5" height="2.5" fill="#135"/>
<rect x="157.5" y="845.3" width="2.5" height="2.5" fill="#b4e"/>
<rect x="159.5" y="845.3" width="2.5" height="2.5" fill="#a0f"/>
<rect x="161.5" y="845.3" width="2.5" height="2.5" fill="#080"/>
<rect x="163.5" y="845.3" width="2.5" height="2.5" fill="#408"/>
<rect x="165.5" y="845.3" width="2.5" height="2.5" fill="#fff"/>
<rect x="167.5" y="845.3" width="2.5" height="2.5" fill="#f8a"/>
<rect x="169.4" y="845.3" width="2.5" height="2.5" fill="#408"/>
<rect x="171.4" y="845.3" width="2.5" height="2.5" fill="#135"/>
<rect x="173.4" y="845.3" width="2.5" height="2.5" fill="#511"/>
<rect x="175.4" y="845.3" width="2.5" height="2.5" fill="#511"/>
<rect x="177.4" y="845.3" width="2.5" height="2.5" fill="#fc8"/>
<rect x="179.4" y="845.3" width="2.5" height="2.5" fill="#fa0"/>
<rect x="181.3" y="845.3" width="2.5" height="2.5" fill="#a62"/>
<rect x="183.3" y="845.3" width="2.5" height="2.5" fill="#f8a"/>
<rect x="185.3" y="845.3" width="2.0" height="2.5" fill="#135"/>
<rect x="137.7" y="847.3" width="2.5" height="2.5" fill="#fff"/>
<rect x="139.7" y="847.3" width="2.5" height="2.5" fill="#e8e"/>
<rect x="141.7" y="847.3" width="2.5" height="2.5" fill="#fc8"/>
<rect x="143.7" y="847.3" width="2.5" height="2.5" fill="#a62"/>
<rect x="145.6" y="847.3" width="2.5" height="2.5" fill="#00f"/>
<rect x="147.6" y="847.3" width="2.5" height="2.5" fill="#00f"/>
<rect x="149.6" y="847.3" width="2.5" height="2.5" fill="#b4e"/>
<rect x="151.6" y="847.3" width="2.5" height="2.5" fill="#511"/>
<rect x="153.6" y="847.3" width="2.5" height="2.5" fill="#fc8"/>
<rect x="155.6" y="847.3" width="2.5" height="2.5" fill="#6c2"/>
<rect x="157.5" y="847.3" width="2.5" height="2.5" fill="#2a8"/>
<rect x="159.5" y="847.3" width="2.5" height="2.5" fill="#0f0"/>
<rect x="161.5" y="847.3" width="2.5" height="2.5" fill="#8f4"/>
<rect x="163.5" y="847.3" width="2.5" height="2.5" fill="#f0f"/>
<rect x="165.5" y="847.3" width="2.5" height="2.5" fill="#f00"/>
<rect x="167.5" y="847.3" width="2.5" height="2.5" fill="#a0f"/>
<rect x="169.4" y="847.3" width="2.5" height="2.5" fill="#7d7"/>
<rect x="171.4" y="847.3" width="2.5" height="2.5" fill="#f8a"/>
<rect x="173.4" y="847.3" width="2.5" height="2.5" fill="#e6c"/>
<rect x="175.4" y="847.3" width="2.5" height="2.5" fill="#000"/>
<rect x="177.4" y="847.3" width="2.5" height="2.5" fill="#b4e"/>
<rect x="179.4" y="847.3" width="2.5" height="2.5" fill="#511"/>
<rect x="181.3" y="847.3" width="2.5" height="2.5" fill="#00f"/>
<rect x="183.3" y="847.3" width="2.5" height="2.5" fill="#b4e"/>
<rect x="185.3" y="847.3" width="2.0" height="2.5" fill="#6c2"/>
<rect x="137.7" y="849.3" width="2.5" height="2.5" fill="#000"/>
<rect x="139.7" y="849.3" width="2.5" height="2.5" fill="#d04"/>
<rect x="141.7" y="849.3" width="2.5" height="2.5" fill="#000"/>
<rect x="143.7" y="849.3" width="2.5" height="2.5" fill="#fff"/>
<rect x="145.6" y="849.3" width="2.5" height="2.5" fill="#48f"/>
<rect x="147.6" y="849.3" width="2.5" height="2.5" fill="#c0c"/>
<rect x="149.6" y="849.3" width="2.5" height="2.5" fill="#fff"/>
<rect x="151.6" y="849.3" width="2.5" height="2.5" fill="#b4e"/>
<rect x="153.6" y="849.3" width="2.5" height="2.5" fill="#6c2"/>
<rect x="155.6" y="849.3" width="2.5" height="2.5" fill="#b4e"/>
<rect x="157.5" y="849.3" width="2.5" height="2.5" fill="#e6c"/>
<rect x="159.5" y="849.3" width="2.5" height="2.5" fill="#b4e"/>
<rect x="161.5" y="849.3" width="2.5" height="2.5" fill="#00f"/>
<rect x="163.5" y="849.3" width="2.5" height="2.5" fill="#8f4"/>
<rect x="165.5" y="849.3" width="2.5" height="2.5" fill="#d04"/>
<rect x="167.5" y="849.3" width="2.5" height="2.5" fill="#ff0"/>
<rect x="169.4" y="849.3" width="2.5" height="2.5" fill="#00f"/>
<rect x="171.4" y="849.3" width="2.5" height="2.5" fill="#084"/>
<rect x="173.4" y="849.3" width="2.5" height="2.5" fill="#511"/>
<rect x="175.4" y="849.3" width="2.5" height="2.5" fill="#b4e"/>
<rect x="177.4" y="849.3" width="2.5" height="2.5" fill="#fff"/>
<rect x="179.4" y="849.3" width="2.5" height="2.5" fill="#b4e"/>
<rect x="181.3" y="849.3" width="2.5" height="2.5" fill="#fff"/>
<rect x="183.3" y="849.3" width="2.5" height="2.5" fill="#a0f"/>
<rect x="185.3" y="849.3" width="2.0" height="2.5" fill="#080"/>
<rect x="137.7" y="851.3" width="2.5" height="2.5" fill="#f8a"/>
<rect x="139.7" y="851.3" width="2.5" height="2.5" fill="#408"/>
<rect x="141.7" y="851.3" width="2.5" height="2.5" fill="#0f0"/>
<rect x="143.7" y="851.3" width="2.5" height="2.5" fill="#7d7"/>
<rect x="145.6" y="851.3" width="2.5" height="2.5" fill="#fc8"/>
<rect x="147.6" y="851.3" width="2.5" height="2.5" fill="#4fc"/>
<rect x="149.6" y="851.3" width="2.5" height="2.5" fill="#c82"/>
<rect x="151.6" y="851.3" width="2.5" height="2.5" fill="#fc8"/>
<rect x="153.6" y="851.3" width="2.5" height="2.5" fill="#fc8"/>
<rect x="155.6" y="851.3" width="2.5" height="2.5" fill="#a62"/>
<rect x="157.5" y="851.3" width="2.5" height="2.5" fill="#135"/>
<rect x="159.5" y="851.3" width="2.5" height="2.5" fill="#7d7"/>
<rect x="161.5" y="851.3" width="2.5" height="2.5" fill="#f00"/>
<rect x="163.5" y="851.3" width="2.5" height="2.5" fill="#135"/>
<rect x="165.5" y="851.3" width="2.5" height="2.5" fill="#7d7"/>
<rect x="167.5" y="851.3" width="2.5" height="2.5" fill="#06c"/>
<rect x="169.4" y="851.3" width="2.5" height="2.5" fill="#f8a"/>
<rect x="171.4" y="851.3" width="2.5" height="2.5" fill="#000"/>
<rect x="173.4" y="851.3" width="2.5" height="2.5" fill="#b4e"/>
<rect x="175.4" y="851.3" width="2.5" height="2.5" fill="#c82"/>
<rect x="177.4" y="851.3" width="2.5" height="2.5" fill="#b4e"/>
<rect x="179.4" y="851.3" width="2.5" height="2.5" fill="#fff"/>
<rect x="181.3" y="851.3" width="2.5" height="2.5" fill="#2a8"/>
<rect x="183.3" y="851.3" width="2.5" height="2.5" fill="#fa0"/>
<rect x="185.3" y="851.3" width="2.0" height="2.5" fill="#a0f"/>
<rect x="137.7" y="853.2" width="2.5" height="2.5" fill="#8f4"/>
<rect x="139.7" y="853.2" width="2.5" height="2.5" fill="#511"/>
<rect x="141.7" y="853.2" width="2.5" height="2.5" fill="#00f"/>
<rect x="143.7" y="853.2" width="2.5" height="2.5" fill="#f00"/>
<rect x="145.6" y="853.2" width="2.5" height="2.5" fill="#080"/>
<rect x="147.6" y="853.2" width="2.5" height="2.5" fill="#fa0"/>
<rect x="149.6" y="853.2" width="2.5" height="2.5" fill="#8f4"/>
<rect x="151.6" y="853.2" width="2.5" height="2.5" fill="#a62"/>
<rect x="153.6" y="853.2" width="2.5" height="2.5" fill="#4fc"/>
<rect x="155.6" y="853.2" width="2.5" height="2.5" fill="#0a4"/>
<rect x="157.5" y="853.2" width="2.5" height="2.5" fill="#e8e"/>
<rect x="159.5" y="853.2" width="2.5" height="2.5" fill="#f0f"/>
<rect x="161.5" y="853.2" width="2.5" height="2.5" fill="#00f"/>
<rect x="163.5" y="853.2" width="2.5" height="2.5" fill="#7d7"/>
<rect x="165.5" y="853.2" width="2.5" height="2.5" fill="#fa0"/>
<rect x="167.5" y="853.2" width="2.5" height="2.5" fill="#d04"/>
<rect x="169.4" y="853.2" width="2.5" height="2.5" fill="#d04"/>
<rect x="171.4" y="853.2" width="2.5" height="2.5" fill="#0f0"/>
<rect x="173.4" y="853.2" width="2.5" height="2.5" fill="#f0f"/>
<rect x="175.4" y="853.2" width="2.5" height="2.5" fill="#0f0"/>
<rect x="177.4" y="853.2" width="2.5" height="2.5" fill="#f8a"/>
<rect x="179.4" y="853.2" width="2.5" height="2.5" fill="#080"/>
<rect x="181.3" y="853.2" width="2.5" height="2.5" fill="#080"/>
<rect x="183.3" y="853.2" width="2.5" height="2.5" fill="#f0f"/>
<rect x="185.3" y="853.2" width="2.0" height="2.5" fill="#00f"/>
<rect x="137.7" y="855.2" width="2.5" height="2.5" fill="#fa0"/>
<rect x="139.7" y="855.2" width="2.5" height="2.5" fill="#06c"/>
<rect x="141.7" y="855.2" width="2.5" height="2.5" fill="#d04"/>
<rect x="143.7" y="855.2" width="2.5" height="2.5" fill="#f00"/>
<rect x="145.6" y="855.2" width="2.5" height="2.5" fill="#24a"/>
<rect x="147.6" y="855.2" width="2.5" height="2.5" fill="#c0c"/>
<rect x="149.6" y="855.2" width="2.5" height="2.5" fill="#f0f"/>
<rect x="151.6" y="855.2" width="2.5" height="2.5" fill="#000"/>
<rect x="153.6" y="855.2" width="2.5" height="2.5" fill="#511"/>
<rect x="155.6" y="855.2" width="2.5" height="2.5" fill="#0a4"/>
<rect x="157.5" y="855.2" width="2.5" height="2.5" fill="#fff"/>
<rect x="159.5" y="855.2" width="2.5" height="2.5" fill="#24a"/>
<rect x="161.5" y="855.2" width="2.5" height="2.5" fill="#e8e"/>
<rect x="163.5" y="855.2" width="2.5" height="2.5" fill="#e6c"/>
<rect x="165.5" y="855.2" width="2.5" height="2.5" fill="#511"/>
<rect x="167.5" y="855.2" width="2.5" height="2.5" fill="#8f4"/>
<rect x="169.4" y="855.2" width="2.5" height="2.5" fill="#0ff"/>
<rect x="171.4" y="855.2" width="2.5" height="2.5" fill="#8f4"/>
<rect x="173.4" y="855.2" width="2.5" height="2.5" fill="#6c2"/>
<rect x="175.4" y="855.2" width="2.5" height="2.5" fill="#e6c"/>
<rect x="177.4" y="855.2" width="2.5" height="2.5" fill="#ff0"/>
<rect x="179.4" y="855.2" width="2.5" height="2.5" fill="#4fc"/>
<rect x="181.3" y="855.2" width="2.5" height="2.5" fill="#24a"/>
<rect x="183.3" y="855.2" width="2.5" height="2.5" fill="#0a4"/>
<rect x="185.3" y="855.2" width="2.0" height="2.5" fill="#0f0"/>
<rect x="137.7" y="857.2" width="2.5" height="2.5" fill="#fc8"/>
<rect x="139.7" y="857.2" width="2.5" height="2.5" fill="#0ff"/>
<rect x="141.7" y="857.2" width="2.5" height="2.5" fill="#135"/>
<rect x="143.7" y="857.2" width="2.5" height="2.5" fill="#d04"/>
<rect x="145.6" y="857.2" width="2.5" height="2.5" fill="#48f"/>
<rect x="147.6" y="857.2" width="2.5" height="2.5" fill="#084"/>
<rect x="149.6" y="857.2" width="2.5" height="2.5" fill="#ff0"/>
<rect x="151.6" y="857.2" width="2.5" height="2.5" fill="#a62"/>
<rect x="153.6" y="857.2" width="2.5" height="2.5" fill="#080"/>
<rect x="155.6" y="857.2" width="2.5" height="2.5" fill="#4fc"/>
<rect x="157.5" y="857.2" width="2.5" height="2.5" fill="#080"/>
<rect x="159.5" y="857.2" width="2.5" height="2.5" fill="#408"/>
<rect x="161.5" y="857.2" width="2.5" height="2.5" fill="#0f0"/>
<rect x="163.5" y="857.2" width="2.5" height="2.5" fill="#a62"/>
<rect x="165.5" y="857.2" width="2.5" height="2.5" fill="#fa0"/>
<rect x="167.5" y="857.2" width="2.5" height="2.5" fill="#fa0"/>
<rect x="169.4" y="857.2" width="2.5" height="2.5" fill="#0a4"/>
<rect x="171.4" y="857.2" width="2.5" height="2.5" fill="#e8e"/>
<rect x="173.4" y="857.2" width="2.5" height="2.5" fill="#135"/>
<rect x="175.4" y="857.2" width="2.5" height="2.5" fill="#8f4"/>
<rect x="177.4" y="857.2" width="2.5" height="2.5" fill="#d04"/>
<rect x="179.4" y="857.2" width="2.5" height="2.5" fill="#c0c"/>
<rect x="181.3" y="857.2" width="2.5" height="2.5" fill="#f00"/>
<rect x="183.3" y="857.2" width="2.5" height="2.5" fill="#e6c"/>
<rect x="185.3" y="857.2" width="2.0" height="2.5" fill="#6c2"/>
<rect x="137.7" y="859.1" width="2.5" height="2.5" fill="#511"/>
<rect x="139.7" y="859.1" width="2.5" height="2.5" fill="#135"/>
<rect x="141.7" y="859.1" width="2.5" height="2.5" fill="#c82"/>
<rect x="143.7" y="859.1" width="2.5" height="2.5" fill="#b4e"/>
<rect x="145.6" y="859.1" width="2.5" height="2.5" fill="#f8a"/>
<rect x="147.6" y="859.1" width="2.5" height="2.5" fill="#48f"/>
<rect x="149.6" y="859.1" width="2.5" height="2.5" fill="#fff"/>
<rect x="151.6" y="859.1" width="2.5" height="2.5" fill="#000"/>
<rect x="153.6" y="859.1" width="2.5" height="2.5" fill="#084"/>
<rect x="155.6" y="859.1" width="2.5" height="2.5" fill="#06c"/>
<rect x="157.5" y="859.1" width="2.5" height="2.5" fill="#48f"/>
<rect x="159.5" y="859.1" width="2.5" height="2.5" fill="#c0c"/>
<rect x="161.5" y="859.1" width="2.5" height="2.5" fill="#084"/>
<rect x="163.5" y="859.1" width="2.5" height="2.5" fill="#e6c"/>
<rect x="165.5" y="859.1" width="2.5" height="2.5" fill="#0a4"/>
<rect x="167.5" y="859.1" width="2.5" height="2.5" fill="#06c"/>
<rect x="169.4" y="859.1" width="2.5" height="2.5" fill="#f8a"/>
<rect x="171.4" y="859.1" width="2.5" height="2.5" fill="#408"/>
<rect x="173.4" y="859.1" width="2.5" height="2.5" fill="#0ff"/>
<rect x="175.4" y="859.1" width="2.5" height="2.5" fill="#7d7"/>
<rect x="177.4" y="859.1" width="2.5" height="2.5" fill="#d04"/>
<rect x="179.4" y="859.1" width="2.5" height="2.5" fill="#8f4"/>
<rect x="181.3" y="859.1" width="2.5" height="2.5" fill="#c0c"/>
<rect x="183.3" y="859.1" width="2.5" height="2.5" fill="#a62"/>
<rect x="185.3" y="859.1" width="2.0" height="2.5" fill="#0f0"/>
<rect x="137.7" y="861.1" width="2.5" height="2.5" fill="#d04"/>
<rect x="139.7" y="861.1" width="2.5" height="2.5" fill="#a62"/>
<rect x="141.7" y="861.1" width="2.5" height="2.5" fill="#6c2"/>
<rect x="143.7" y="861.1" width="2.5" height="2.5" fill="#080"/>
<rect x="145.6" y="861.1" width="2.5" height="2.5" fill="#e8e"/>
<rect x="147.6" y="861.1" width="2.5" height="2.5" fill="#e8e"/>
<rect x="149.6" y="861.1" width="2.5" height="2.5" fill="#2a8"/>
<rect x="151.6" y="861.1" width="2.5" height="2.5" fill="#7d7"/>
<rect x="153.6" y="861.1" width="2.5" height="2.5" fill="#24a"/>
<rect x="155.6" y="861.1" width="2.5" height="2.5" fill="#f0f"/>
<rect x="157.5" y="861.1" width="2.5" height="2.5" fill="#135"/>
<rect x="159.5" y="861.1" width="2.5" height="2.5" fill="#06c"/>
<rect x="161.5" y="861.1" width="2.5" height="2.5" fill="#0a4"/>
<rect x="163.5" y="861.1" width="2.5" height="2.5" fill="#0f0"/>
<rect x="165.5" y="861.1" width="2.5" height="2.5" fill="#f0f"/>
<rect x="167.5" y="861.1" width="2.5" height="2.5" fill="#511"/>
<rect x="169.4" y="861.1" width="2.5" height="2.5" fill="#d04"/>
<rect x="171.4" y="861.1" width="2.5" height="2.5" fill="#b4e"/>
<rect x="173.4" y="861.1" width="2.5" height="2.5" fill="#fff"/>
<rect x="175.4" y="861.1" width="2.5" height="2.5" fill="#000"/>
<rect x="177.4" y="861.1" width="2.5" height="2.5" fill="#a0f"/>
<rect x="179.4" y="861.1" width="2.5" height="2.5" fill="#e8e"/>
<rect x="181.3" y="861.1" width="2.5" height="2.5" fill="#ff0"/>
<rect x="183.3" y="861.1" width="2.5" height="2.5" fill="#7d7"/>
<rect x="185.3" y="861.1" width="2.0" height="2.5" fill="#408"/>
<rect x="137.7" y="863.1" width="2.5" height="2.5" fill="#f00"/>
<rect x="139.7" y="863.1" width="2.5" height="2.5" fill="#0f0"/>
<rect x="141.7" y="863.1" width="2.5" height="2.5" fill="#0a4"/>
<rect x="143.7" y="863.1" width="2.5" height="2.5" fill="#c0c"/>
<rect x="145.6" y="863.1" width="2.5" height="2.5" fill="#0ff"/>
<rect x="147.6" y="863.1" width="2.5" height="2.5" fill="#ff0"/>
<rect x="149.6" y="863.1" width="2.5" height="2.5" fill="#06c"/>
<rect x="151.6" y="863.1" width="2.5" height="2.5" fill="#6c2"/>
<rect x="153.6" y="863.1" width="2.5" height="2.5" fill="#2a8"/>
<rect x="155.6" y="863.1" width="2.5" height="2.5" fill="#d04"/>
<rect x="157.5" y="863.1" width="2.5" height="2.5" fill="#135"/>
<rect x="159.5" y="863.1" width="2.5" height="2.5" fill="#48f"/>
<rect x="161.5" y="863.1" width="2.5" height="2.5" fill="#135"/>
<rect x="163.5" y="863.1" width="2.5" height="2.5" fill="#408"/>
<rect x="165.5" y="863.1" width="2.5" height="2.5" fill="#ff0"/>
<rect x="167.5" y="863.1" width="2.5" height="2.5" fill="#fff"/>
<rect x="169.4" y="863.1" width="2.5" height="2.5" fill="#c82"/>
<rect x="171.4" y="863.1" width="2.5" height="2.5" fill="#c0c"/>
<rect x="173.4" y="863.1" width="2.5" height="2.5" fill="#ff0"/>
<rect x="175.4" y="863.1" width="2.5" height="2.5" fill="#511"/>
<rect x="177.4" y="863.1" width="2.5" height="2.5" fill="#511"/>
<rect x="179.4" y="863.1" width="2.5" height="2.5" fill="#a62"/>
<rect x="181.3" y="863.1" width="2.5" height="2.5" fill="#7d7"/>
<rect x="183.3" y="863.1" width="2.5" height="2.5" fill="#fff"/>
<rect x="185.3" y="863.1" width="2.0" height="2.5" fill="#48f"/>
<rect x="137.7" y="865.0" width="2.5" height="2.5" fill="#e8e"/>
<rect x="139.7" y="865.0" width="2.5" height="2.5" fill="#511"/>
<rect x="141.7" y="865.0" width="2.5" height="2.5" fill="#48f"/>
<rect x="143.7" y="865.0" width="2.5" height="2.5" fill="#06c"/>
<rect x="145.6" y="865.0" width="2.5" height="2.5" fill="#fc8"/>
<rect x="147.6" y="865.0" width="2.5" height="2.5" fill="#a62"/>
<rect x="149.6" y="865.0" width="2.5" height="2.5" fill="#e8e"/>
<rect x="151.6" y="865.0" width="2.5" height="2.5" fill="#7d7"/>
<rect x="153.6" y="865.0" width="2.5" height="2.5" fill="#a0f"/>
<rect x="155.6" y="865.0" width="2.5" height="2.5" fill="#080"/>
<rect x="157.5" y="865.0" width="2.5" height="2.5" fill="#48f"/>
<rect x="159.5" y="865.0" width="2.5" height="2.5" fill="#6c2"/>
<rect x="161.5" y="865.0" width="2.5" height="2.5" fill="#6c2"/>
<rect x="163.5" y="865.0" width="2.5" height="2.5" fill="#ff0"/>
<rect x="165.5" y="865.0" width="2.5" height="2.5" fill="#a62"/>
<rect x="167.5" y="865.0" width="2.5" height="2.5" fill="#408"/>
<rect x="169.4" y="865.0" width="2.5" height="2.5" fill="#0ff"/>
<rect x="171.4" y="865.0" width="2.5" height="2.5" fill="#c0c"/>
<rect x="173.4" y="865.0" width="2.5" height="2.5" fill="#fff"/>
<rect x="175.4" y="865.0" width="2.5" height="2.5" fill="#7d7"/>
<rect x="177.4" y="865.0" width="2.5" height="2.5" fill="#fc8"/>
<rect x="179.4" y="865.0" width="2.5" height="2.5" fill="#0a4"/>
<rect x="181.3" y="865.0" width="2.5" height="2.5" fill="#fff"/>
<rect x="183.3" y="865.0" width="2.5" height="2.5" fill="#0ff"/>
<rect x="185.3" y="865.0" width="2.0" height="2.5" fill="#0ff"/>
<rect x="137.7" y="867.0" width="2.5" height="2.5" fill="#fc8"/>
<rect x="139.7" y="867.0" width="2.5" height="2.5" fill="#0ff"/>
<rect x="141.7" y="867.0" width="2.5" height="2.5" fill="#a0f"/>
<rect x="143.7" y="867.0" width="2.5" height="2.5" fill="#a62"/>
<rect x="145.6" y="867.0" width="2.5" height="2.5" fill="#000"/>
<rect x="147.6" y="867.0" width="2.5" height="2.5" fill="#e8e"/>
<rect x="149.6" y="867.0" width="2.5" height="2.5" fill="#a0f"/>
<rect x="151.6" y="867.0" width="2.5" height="2.5" fill="#a0f"/>
<rect x="153.6" y="867.0" width="2.5" height="2.5" fill="#135"/>
<rect x="155.6" y="867.0" width="2.5" height="2.5" fill="#d04"/>
<rect x="157.5" y="867.0" width="2.5" height="2.5" fill="#c0c"/>
<rect x="159.5" y="867.0" width="2.5" height="2.5" fill="#0a4"/>
<rect x="161.5" y="867.0" width="2.5" height="2.5" fill="#7d7"/>
<rect x="163.5" y="867.0" width="2.5" height="2.5" fill="#c0c"/>
<rect x="165.5" y="867.0" width="2.5" height="2.5" fill="#2a8"/>
<rect x="167.5" y="867.0" width="2.5" height="2.5" fill="#0f0"/>
<rect x="169.4" y="867.0" width="2.5" height="2.5" fill="#6c2"/>
<rect x="171.4" y="867.0" width="2.5" height="2.5" fill="#080"/>
<rect x="173.4" y="867.0" width="2.5" height="2.5" fill="#e8e"/>
<rect x="175.4" y="867.0" width="2.5" height="2.5" fill="#135"/>
<rect x="177.4" y="867.0" width="2.5" height="2.5" fill="#00f"/>
<rect x="179.4" y="867.0" width="2.5" height="2.5" fill="#000"/>
<rect x="181.3" y="867.0" width="2.5" height="2.5" fill="#7d7"/>
<rect x="183.3" y="867.0" width="2.5" height="2.5" fill="#b4e"/>
<rect x="185.3" y="867.0" width="2.0" height="2.5" fill="#4fc"/>
<rect x="137.7" y="869.0" width="2.5" height="2.5" fill="#06c"/>
<rect x="139.7" y="869.0" width="2.5" height="2.5" fill="#000"/>
<rect x="141.7" y="869.0" width="2.5" height="2.5" fill="#000"/>
<rect x="143.7" y="869.0" width="2.5" height="2.5" fill="#0a4"/>
<rect x="145.6" y="869.0" width="2.5" height="2.5" fill="#135"/>
<rect x="147.6" y="869.0" width="2.5" height="2.5" fill="#e6c"/>
<rect x="149.6" y="869.0" width="2.5" height="2.5" fill="#7d7"/>
<rect x="151.6" y="869.0" width="2.5" height="2.5" fill="#000"/>
<rect x="153.6" y="869.0" width="2.5" height="2.5" fill="#f8a"/>
<rect x="155.6" y="869.0" width="2.5" height="2.5" fill="#0f0"/>
<rect x="157.5" y="869.0" width="2.5" height="2.5" fill="#6c2"/>
<rect x="159.5" y="869.0" width="2.5" height="2.5" fill="#f8a"/>
<rect x="161.5" y="869.0" width="2.5" height="2.5" fill="#2a8"/>
<rect x="163.5" y="869.0" width="2.5" height="2.5" fill="#7d7"/>
<rect x="165.5" y="869.0" width="2.5" height="2.5" fill="#06c"/>
<rect x="167.5" y="869.0" width="2.5" height="2.5" fill="#e6c"/>
<rect x="169.4" y="869.0" width="2.5" height="2.5" fill="#e8e"/>
<rect x="171.4" y="869.0" width="2.5" height="2.5" fill="#2a8"/>
<rect x="173.4" y="869.0" width="2.5" height="2.5" fill="#fff"/>
<rect x="175.4" y="869.0" width="2.5" height="2.5" fill="#24a"/>
<rect x="177.4" y="869.0" width="2.5" height="2.5" fill="#f8a"/>
<rect x="179.4" y="869.0" width="2.5" height="2.5" fill="#0ff"/>
<rect x="181.3" y="869.0" width="2.5" height="2.5" fill="#a0f"/>
<rect x="183.3" y="869.0" width="2.5" height="2.5" fill="#c0c"/>
<rect x="185.3" y="869.0" width="2.0" height="2.5" fill="#7d7"/>
<rect x="137.7" y="871.0" width="2.5" height="2.5" fill="#0a4"/>
<rect x="139.7" y="871.0" width="2.5" height="2.5" fill="#408"/>
<rect x="141.7" y="871.0" width="2.5" height="2.5" fill="#8f4"/>
<rect x="143.7" y="871.0" width="2.5" height="2.5" fill="#fa0"/>
<rect x="145.6" y="871.0" width="2.5" height="2.5" fill="#f0f"/>
<rect x="147.6" y="871.0" width="2.5" height="2.5" fill="#06c"/>
<rect x="149.6" y="871.0" width="2.5" height="2.5" fill="#b4e"/>
<rect x="151.6" y="871.0" width="2.5" height="2.5" fill="#f00"/>
<rect x="153.6" y="871.0" width="2.5" height="2.5" fill="#48f"/>
<rect x="155.6" y="871.0" width="2.5" height="2.5" fill="#511"/>
<rect x="157.5" y="871.0" width="2.5" height="2.5" fill="#d04"/>
<rect x="159.5" y="871.0" width="2.5" height="2.5" fill="#24a"/>
<rect x="161.5" y="871.0" width="2.5" height="2.5" fill="#080"/>
<rect x="163.5" y="871.0" width="2.5" height="2.5" fill="#f8a"/>
<rect x="165.5" y="871.0" width="2.5" height="2.5" fill="#084"/>
<rect x="167.5" y="871.0" width="2.5" height="2.5" fill="#2a8"/>
<rect x="169.4" y="871.0" width="2.5" height="2.5" fill="#f0f"/>
<rect x="171.4" y="871.0" width="2.5" height="2.5" fill="#000"/>
<rect x="173.4" y="871.0" width="2.5" height="2.5" fill="#8f4"/>
<rect x="175.4" y="871.0" width="2.5" height="2.5" fill="#084"/>
<rect x="177.4" y="871.0" width="2.5" height="2.5" fill="#0ff"/>
<rect x="179.4" y="871.0" width="2.5" height="2.5" fill="#48f"/>
<rect x="181.3" y="871.0" width="2.5" height="2.5" fill="#8f4"/>
<rect x="183.3" y="871.0" width="2.5" height="2.5" fill="#135"/>
<rect x="185.3" y="871.0" width="2.0" height="2.5" fill="#fc8"/>
<rect x="137.7" y="872.9" width="2.5" height="2.0" fill="#2a8"/>
<rect x="139.7" y="872.9" width="2.5" height="2.0" fill="#f00"/>
<rect x="141.7" y="872.9" width="2.5" height="2.0" fill="#7d7"/>
<rect x="143.7" y="872.9" width="2.5" height="2.0" fill="#fc8"/>
<rect x="145.6" y="872.9" width="2.5" height="2.0" fill="#0ff"/>
<rect x="147.6" y="872.9" width="2.5" height="2.0" fill="#2a8"/>
<rect x="149.6" y="872.9" width="2.5" height="2.0" fill="#7d7"/>
<rect x="151.6" y="872.9" width="2.5" height="2.0" fill="#135"/>
<rect x="153.6" y="872.9" width="2.5" height="2.0" fill="#e6c"/>
<rect x="155.6" y="872.9" width="2.5" height="2.0" fill="#06c"/>
<rect x="157.5" y="872.9" width="2.5" height="2.0" fill="#fff"/>
<rect x="159.5" y="872.9" width="2.5" height="2.0" fill="#084"/>
<rect x="161.5" y="872.9" width="2.5" height="2.0" fill="#080"/>
<rect x="163.5" y="872.9" width="2.5" height="2.0" fill="#00f"/>
<rect x="165.5" y="872.9" width="2.5" height="2.0" fill="#000"/>
<rect x="167.5" y="872.9" width="2.5" height="2.0" fill="#0f0"/>
<rect x="169.4" y="872.9" width="2.5" height="2.0" fill="#b4e"/>
<rect x="171.4" y="872.9" width="2.5" height="2.0" fill="#e6c"/>
<rect x="173.4" y="872.9" width="2.5" height="2.0" fill="#f0f"/>
<rect x="175.4" y="872.9" width="2.5" height="2.0" fill="#4fc"/>
<rect x="177.4" y="872.9" width="2.5" height="2.0" fill="#b4e"/>
<rect x="179.4" y="872.9" width="2.5" height="2.0" fill="#00f"/>
<rect x="181.3" y="872.9" width="2.5" height="2.0" fill="#a0f"/>
<rect x="183.3" y="872.9" width="2.5" height="2.0" fill="#0ff"/>
<rect x="185.3" y="872.9" width="2.0" height="2.0" fill="#135"/>
<rect x="135.4" y="821.7" width="2.4" height="53.2" fill="#b8b8b8"/>
<rect x="185.2" y="821.7" width="19" height="53.2" fill="url(#ng)"/>
<rect x="206.1" y="821.7" width="0.5" height="53.2" fill="#555"/>
<rect x="158.8" y="818.4" width="18" height="0.6" fill="#999"/>
<rect x="246.8" y="816.8" width="80.3" height="63.1" fill="#fff"/>
<rect x="251.0" y="821.7" width="0.5" height="53.2" fill="#444"/>
<rect x="253.7" y="821.7" width="2.5" height="2.5" fill="#c82"/>
<rect x="255.7" y="821.7" width="2.5" height="2.5" fill="#b4e"/>
<rect x="257.7" y="821.7" width="2.5" height="2.5" fill="#408"/>
<rect x="259.7" y="821.7" width="2.5" height="2.5" fill="#f8a"/>
<rect x="261.6" y="821.7" width="2.5" height="2.5" fill="#a0f"/>
<rect x="263.6" y="821.7" width="2.5" height="2.5" fill="#f0f"/>
<rect x="265.6" y="821.7" width="2.5" height="2.5" fill="#06c"/>
<rect x="267.6" y="821.7" width="2.5" height="2.5" fill="#511"/>
<rect x="269.6" y="821.7" width="2.5" height="2.5" fill="#c82"/>
<rect x="271.6" y="821.7" width="2.5" height="2.5" fill="#f00"/>
<rect x="273.5" y="821.7" width="2.5" height="2.5" fill="#06c"/>
<rect x="275.5" y="821.7" width="2.5" height="2.5" fill="#00f"/>
<rect x="277.5" y="821.7" width="2.5" height="2.5" fill="#2a8"/>
<rect x="279.5" y="821.7" width="2.5" height="2.5" fill="#48f"/>
<rect x="281.5" y="821.7" width="2.5" height="2.5" fill="#7d7"/>
<rect x="283.5" y="821.7" width="2.5" height="2.5" fill="#e6c"/>
<rect x="285.4" y="821.7" width="2.5" height="2.5" fill="#48f"/>
<rect x="287.4" y="821.7" width="2.5" height="2.5" fill="#48f"/>
<rect x="289.4" y="821.7" width="2.5" height="2.5" fill="#c0c"/>
<rect x="291.4" y="821.7" width="2.5" height="2.5" fill="#ff0"/>
<rect x="293.4" y="821.7" width="2.5" height="2.5" fill="#e8e"/>
<rect x="295.4" y="821.7" width="2.5" height="2.5" fill="#f8a"/>
<rect x="297.3" y="821.7" width="2.5" height="2.5" fill="#511"/>
<rect x="299.3" y="821.7" width="2.5" height="2.5" fill="#0ff"/>
<rect x="301.3" y="821.7" width="2.0" height="2.5" fill="#2a8"/>
<rect x="253.7" y="823.7" width="2.5" height="2.5" fill="#000"/>
<rect x="255.7" y="823.7" width="2.5" height="2.5" fill="#fc8"/>
<rect x="257.7" y="823.7" width="2.5" height="2.5" fill="#fa0"/>
<rect x="259.7" y="823.7" width="2.5" height="2.5" fill="#084"/>
<rect x="261.6" y="823.7" width="2.5" height="2.5" fill="#24a"/>
<rect x="263.6" y="823.7" width="2.5" height="2.5" fill="#f00"/>
<rect x="265.6" y="823.7" width="2.5" height="2.5" fill="#408"/>
<rect x="267.6" y="823.7" width="2.5" height="2.5" fill="#fa0"/>
<rect x="269.6" y="823.7" width="2.5" height="2.5" fill="#a62"/>
<rect x="271.6" y="823.7" width="2.5" height="2.5" fill="#408"/>
<rect x="273.5" y="823.7" width="2.5" height="2.5" fill="#06c"/>
<rect x="275.5" y="823.7" width="2.5" height="2.5" fill="#00f"/>
<rect x="277.5" y="823.7" width="2.5" height="2.5" fill="#0a4"/>
<rect x="279.5" y="823.7" width="2.5" height="2.5" fill="#f0f"/>
<rect x="281.5" y="823.7" width="2.5" height="2.5" fill="#24a"/>
<rect x="283.5" y="823.7" width="2.5" height="2.5" fill="#ff0"/>
<rect x="285.4" y="823.7" width="2.5" height="2.5" fill="#2a8"/>
<rect x="287.4" y="823.7" width="2.5" height="2.5" fill="#135"/>
<rect x="289.4" y="823.7" width="2.5" height="2.5" fill="#f8a"/>
<rect x="291.4" y="823.7" width="2.5" height="2.5" fill="#0f0"/>
<rect x="293.4" y="823.7" width="2.5" height="2.5" fill="#c0c"/>
<rect x="295.4" y="823.7" width="2.5" height="2.5" fill="#e6c"/>
<rect x="297.3" y="823.7" width="2.5" height="2.5" fill="#e8e"/>
<rect x="299.3" y="823.7" width="2.5" height="2.5" fill="#f0f"/>
<rect x="301.3" y="823.7" width="2.0" height="2.5" fill="#e8e"/>
<rect x="253.7" y="825.6" width="2.5" height="2.5" fill="#0a4"/>
<rect x="255.7" y="825.6" width="2.5" height="2.5" fill="#0a4"/>
<rect x="257.7" y="825.6" width="2.5" height="2.5" fill="#06c"/>
<rect x="259.7" y="825.6" width="2.5" height="2.5" fill="#f0f"/>
<rect x="261.6" y="825.6" width="2.5" height="2.5" fill="#f00"/>
<rect x="263.6" y="825.6" width="2.5" height="2.5" fill="#f8a"/>
<rect x="265.6" y="825.6" width="2.5" height="2.5" fill="#0f0"/>
<rect x="267.6" y="825.6" width="2.5" height="2.5" fill="#511"/>
<rect x="269.6" y="825.6" width="2.5" height="2.5" fill="#f00"/>
<rect x="271.6" y="825.6" width="2.5" height="2.5" fill="#135"/>
<rect x="273.5" y="825.6" width="2.5" height="2.5" fill="#0a4"/>
<rect x="275.5" y="825.6" width="2.5" height="2.5" fill="#24a"/>
<rect x="277.5" y="825.6" width="2.5" height="2.5" fill="#0ff"/>
<rect x="279.5" y="825.6" width="2.5" height="2.5" fill="#a62"/>
<rect x="281.5" y="825.6" width="2.5" height="2.5" fill="#0a4"/>
<rect x="283.5" y="825.6" width="2.5" height="2.5" fill="#f00"/>
<rect x="285.4" y="825.6" width="2.5" height="2.5" fill="#8f4"/>
<rect x="287.4" y="825.6" width="2.5" height="2.5" fill="#a0f"/>
<rect x="289.4" y="825.6" width="2.5" height="2.5" fill="#00f"/>
<rect x="291.4" y="825.6" width="2.5" height="2.5" fill="#ff0"/>
<rect x="293.4" y="825.6" width="2.5" height="2.5" fill="#408"/>
<rect x="295.4" y="825.6" width="2.5" height="2.5" fill="#8f4"/>
<rect x="297.3" y="825.6" width="2.5" height="2.5" fill="#408"/>
<rect x="299.3" y="825.6" width="2.5" height="2.5" fill="#00f"/>
<rect x="301.3" y="825.6" width="2.0" height="2.5" fill="#e8e"/>
<rect x="253.7" y="827.6" width="2.5" height="2.5" fill="#a62"/>
<rect x="255.7" y="827.6" width="2.5" height="2.5" fill="#c0c"/>
<rect x="257.7" y="827.6" width="2.5" height="2.5" fill="#48f"/>
<rect x="259.7" y="827.6" width="2.5" height="2.5" fill="#511"/>
<rect x="261.6" y="827.6" width="2.5" height="2.5" fill="#00f"/>
<rect x="263.6" y="827.6" width="2.5" height="2.5" fill="#b4e"/>
<rect x="265.6" y="827.6" width="2.5" height="2.5" fill="#f00"/>
<rect x="267.6" y="827.6" width="2.5" height="2.5" fill="#6c2"/>
<rect x="269.6" y="827.6" width="2.5" height="2.5" fill="#e8e"/>
<rect x="271.6" y="827.6" width="2.5" height="2.5" fill="#b4e"/>
<rect x="273.5" y="827.6" width="2.5" height="2.5" fill="#7d7"/>
<rect x="275.5" y="827.6" width="2.5" height="2.5" fill="#fa0"/>
<rect x="277.5" y="827.6" width="2.5" height="2.5" fill="#a62"/>
<rect x="279.5" y="827.6" width="2.5" height="2.5" fill="#0a4"/>
<rect x="281.5" y="827.6" width="2.5" height="2.5" fill="#0f0"/>
<rect x="283.5" y="827.6" width="2.5" height="2.5" fill="#2a8"/>
<rect x="285.4" y="827.6" width="2.5" height="2.5" fill="#06c"/>
<rect x="287.4" y="827.6" width="2.5" height="2.5" fill="#f0f"/>
<rect x="289.4" y="827.6" width="2.5" height="2.5" fill="#e6c"/>
<rect x="291.4" y="827.6" width="2.5" height="2.5" fill="#e8e"/>
<rect x="293.4" y="827.6" width="2.5" height="2.5" fill="#fa0"/>
<rect x="295.4" y="827.6" width="2.5" height="2.5" fill="#084"/>
<rect x="297.3" y="827.6" width="2.5" height="2.5" fill="#7d7"/>
<rect x="299.3" y="827.6" width="2.5" height="2.5" fill="#408"/>
<rect x="301.3" y="827.6" width="2.0" height="2.5" fill="#d04"/>
<rect x="253.7" y="829.6" width="2.5" height="2.5" fill="#f00"/>
<rect x="255.7" y="829.6" width="2.5" height="2.5" fill="#080"/>
<rect x="257.7" y="829.6" width="2.5" height="2.5" fill="#fc8"/>
<rect x="259.7" y="829.6" width="2.5" height="2.5" fill="#000"/>
<rect x="261.6" y="829.6" width="2.5" height="2.5" fill="#ff0"/>
<rect x="263.6" y="829.6" width="2.5" height="2.5" fill="#0f0"/>
<rect x="265.6" y="829.6" width="2.5" height="2.5" fill="#2a8"/>
<rect x="267.6" y="829.6" width="2.5" height="2.5" fill="#e6c"/>
<rect x="269.6" y="829.6" width="2.5" height="2.5" fill="#135"/>
<rect x="271.6" y="829.6" width="2.5" height="2.5" fill="#6c2"/>
<rect x="273.5" y="829.6" width="2.5" height="2.5" fill="#c0c"/>
<rect x="275.5" y="829.6" width="2.5" height="2.5" fill="#0ff"/>
<rect x="277.5" y="829.6" width="2.5" height="2.5" fill="#e6c"/>
<rect x="279.5" y="829.6" width="2.5" height="2.5" fill="#084"/>
<rect x="281.5" y="829.6" width="2.5" height="2.5" fill="#000"/>
<rect x="283.5" y="829.6" width="2.5" height="2.5" fill="#a62"/>
<rect x="285.4" y="829.6" width="2.5" height="2.5" fill="#511"/>
<rect x="287.4" y="829.6" width="2.5" height="2.5" fill="#b4e"/>
<rect x="289.4" y="829.6" width="2.5" height="2.5" fill="#b4e"/>
<rect x="291.4" y="829.6" width="2.5" height="2.5" fill="#f8a"/>
<rect x="293.4" y="829.6" width="2.5" height="2.5" fill="#fc8"/>
<rect x="295.4" y="829.6" width="2.5" height="2.5" fill="#48f"/>
<rect x="297.3" y="829.6" width="2.5" height="2.5" fill="#4fc"/>
<rect x="299.3" y="829.6" width="2.5" height="2.5" fill="#0f0"/>
<rect x="301.3" y="829.6" width="2.0" height="2.5" fill="#ff0"/>
<rect x="253.7" y="831.6" width="2.5" height="2.5" fill="#a0f"/>
<rect x="255.7" y="831.6" width="2.5" height="2.5" fill="#4fc"/>
<rect x="257.7" y="831.6" width="2.5" height="2.5" fill="#48f"/>
<rect x="259.7" y="831.6" width="2.5" height="2.5" fill="#e8e"/>
<rect x="261.6" y="831.6" width="2.5" height="2.5" fill="#8f4"/>
<rect x="263.6" y="831.6" width="2.5" height="2.5" fill="#f0f"/>
<rect x="265.6" y="831.6" width="2.5" height="2.5" fill="#ff0"/>
<rect x="267.6" y="831.6" width="2.5" height="2.5" fill="#ff0"/>
<rect x="269.6" y="831.6" width="2.5" height="2.5" fill="#7d7"/>
<rect x="271.6" y="831.6" width="2.5" height="2.5" fill="#fa0"/>
<rect x="273.5" y="831.6" width="2.5" height="2.5" fill="#2a8"/>
<rect x="275.5" y="831.6" width="2.5" height="2.5" fill="#fc8"/>
<rect x="277.5" y="831.6" width="2.5" height="2.5" fill="#f0f"/>
<rect x="279.5" y="831.6" width="2.5" height="2.5" fill="#6c2"/>
<rect x="281.5" y="831.6" width="2.5" height="2.5" fill="#fc8"/>
<rect x="283.5" y="831.6" width="2.5" height="2.5" fill="#8f4"/>
<rect x="285.4" y="831.6" width="2.5" height="2.5" fill="#fff"/>
<rect x="287.4" y="831.6" width="2.5" height="2.5" fill="#408"/>
<rect x="289.4" y="831.6" width="2.5" height="2.5" fill="#f8a"/>
<rect x="291.4" y="831.6" width="2.5" height="2.5" fill="#f00"/>
<rect x="293.4" y="831.6" width="2.5" height="2.5" fill="#fc8"/>
<rect x="295.4" y="831.6" width="2.5" height="2.5" fill="#e8e"/>
<rect x="297.3" y="831.6" width="2.5" height="2.5" fill="#0ff"/>
<rect x="299.3" y="831.6" width="2.5" height="2.5" fill="#24a"/>
<rect x="301.3" y="831.6" width="2.0" height="2.5" fill="#7d7"/>
<rect x="253.7" y="833.5" width="2.5" height="2.5" fill="#8f4"/>
<rect x="255.7" y="833.5" width="2.5" height="2.5" fill="#2a8"/>
<rect x="257.7" y="833.5" width="2.5" height="2.5" fill="#48f"/>
<rect x="259.7" y="833.5" width="2.5" height="2.5" fill="#408"/>
<rect x="261.6" y="833.5" width="2.5" height="2.5" fill="#135"/>
<rect x="263.6" y="833.5" width="2.5" height="2.5" fill="#6c2"/>
<rect x="265.6" y="833.5" width="2.5" height="2.5" fill="#000"/>
<rect x="267.6" y="833.5" width="2.5" height="2.5" fill="#ff0"/>
<rect x="269.6" y="833.5" width="2.5" height="2.5" fill="#408"/>
<rect x="271.6" y="833.5" width="2.5" height="2.5" fill="#f8a"/>
<rect x="273.5" y="833.5" width="2.5" height="2.5" fill="#a0f"/>
<rect x="275.5" y="833.5" width="2.5" height="2.5" fill="#f00"/>
<rect x="277.5" y="833.5" width="2.5" height="2.5" fill="#48f"/>
<rect x="279.5" y="833.5" width="2.5" height="2.5" fill="#084"/>
<rect x="281.5" y="833.5" width="2.5" height="2.5" fill="#f0f"/>
<rect x="283.5" y="833.5" width="2.5" height="2.5" fill="#0a4"/>
<rect x="285.4" y="833.5" width="2.5" height="2.5" fill="#a0f"/>
<rect x="287.4" y="833.5" width="2.5" height="2.5" fill="#fff"/>
<rect x="289.4" y="833.5" width="2.5" height="2.5" fill="#c82"/>
<rect x="291.4" y="833.5" width="2.5" height="2.5" fill="#2a8"/>
<rect x="293.4" y="833.5" width="2.5" height="2.5" fill="#f00"/>
<rect x="295.4" y="833.5" width="2.5" height="2.5" fill="#a0f"/>
<rect x="297.3" y="833.5" width="2.5" height="2.5" fill="#fff"/>
<rect x="299.3" y="833.5" width="2.5" height="2.5" fill="#4fc"/>
<rect x="301.3" y="833.5" width="2.0" height="2.5" fill="#0ff"/>
<rect x="253.7" y="835.5" width="2.5" height="2.5" fill="#0f0"/>
<rect x="255.7" y="835.5" width="2.5" height="2.5" fill="#e6c"/>
<rect x="257.7" y="835.5" width="2.5" height="2.5" fill="#080"/>
<rect x="259.7" y="835.5" width="2.5" height="2.5" fill="#0ff"/>
<rect x="261.6" y="835.5" width="2.5" height="2.5" fill="#080"/>
<rect x="263.6" y="835.5" width="2.5" height="2.5" fill="#0ff"/>
<rect x="265.6" y="835.5" width="2.5" height="2.5" fill="#084"/>
<rect x="267.6" y="835.5" width="2.5" height="2.5" fill="#f8a"/>
<rect x="269.6" y="835.5" width="2.5" height="2.5" fill="#000"/>
<rect x="271.6" y="835.5" width="2.5" height="2.5" fill="#000"/>
<rect x="273.5" y="835.5" width="2.5" height="2.5" fill="#135"/>
<rect x="275.5" y="835.5" width="2.5" height="2.5" fill="#c82"/>
<rect x="277.5" y="835.5" width="2.5" height="2.5" fill="#ff0"/>
<rect x="279.5" y="835.5" width="2.5" height="2.5" fill="#135"/>
<rect x="281.5" y="835.5" width="2.5" height="2.5" fill="#ff0"/>
<rect x="283.5" y="835.5" width="2.5" height="2.5" fill="#0f0"/>
<rect x="285.4" y="835.5" width="2.5" height="2.5" fill="#b4e"/>
<rect x="287.4" y="835.5" width="2.5" height="2.5" fill="#c0c"/>
<rect x="289.4" y="835.5" width="2.5" height="2.5" fill="#c82"/>
<rect x="291.4" y="835.5" width="2.5" height="2.5" fill="#084"/>
<rect x="293.4" y="835.5" width="2.5" height="2.5" fill="#b4e"/>
<rect x="295.4" y="835.5" width="2.5" height="2.5" fill="#135"/>
<rect x="297.3" y="835.5" width="2.5" height="2.5" fill="#c0c"/>
<rect x="299.3" y="835.5" width="2.5" height="2.5" fill="#00f"/>
<rect x="301.3" y="835.5" width="2.0" height="2.5" fill="#f00"/>
<rect x="253.7" y="837.5" width="2.5" height="2.5" fill="#ff0"/>
<rect x="255.7" y="837.5" width="2.5" height="2.5" fill="#24a"/>
<rect x="257.7" y="837.5" width="2.5" height="2.5" fill="#24a"/>
<rect x="259.7" y="837.5" width="2.5" height="2.5" fill="#0ff"/>
<rect x="261.6" y="837.5" width="2.5" height="2.5" fill="#f00"/>
<rect x="263.6" y="837.5" width="2.5" height="2.5" fill="#0a4"/>
<rect x="265.6" y="837.5" width="2.5" height="2.5" fill="#00f"/>
<rect x="267.6" y="837.5" width="2.5" height="2.5" fill="#a0f"/>
<rect x="269.6" y="837.5" width="2.5" height="2.5" fill="#f00"/>
<rect x="271.6" y="837.5" width="2.5" height="2.5" fill="#0ff"/>
<rect x="273.5" y="837.5" width="2.5" height="2.5" fill="#0f0"/>
<rect x="275.5" y="837.5" width="2.5" height="2.5" fill="#6c2"/>
<rect x="277.5" y="837.5" width="2.5" height="2.5" fill="#fff"/>
<rect x="279.5" y="837.5" width="2.5" height="2.5" fill="#fff"/>
<rect x="281.5" y="837.5" width="2.5" height="2.5" fill="#0f0"/>
<rect x="283.5" y="837.5" width="2.5" height="2.5" fill="#0ff"/>
<rect x="285.4" y="837.5" width="2.5" height="2.5" fill="#06c"/>
<rect x="287.4" y="837.5" width="2.5" height="2.5" fill="#f00"/>
<rect x="289.4" y="837.5" width="2.5" height="2.5" fill="#d04"/>
<rect x="291.4" y="837.5" width="2.5" height="2.5" fill="#f0f"/>
<rect x="293.4" y="837.5" width="2.5" height="2.5" fill="#c82"/>
<rect x="295.4" y="837.5" width="2.5" height="2.5" fill="#7d7"/>
<rect x="297.3" y="837.5" width="2.5" height="2.5" fill="#8f4"/>
<rect x="299.3" y="837.5" width="2.5" height="2.5" fill="#2a8"/>
<rect x="301.3" y="837.5" width="2.0" height="2.5" fill="#fff"/>
<rect x="253.7" y="839.4" width="2.5" height="2.5" fill="#f8a"/>
<rect x="255.7" y="839.4" width="2.5" height="2.5" fill="#000"/>
<rect x="257.7" y="839.4" width="2.5" height="2.5" fill="#6c2"/>
<rect x="259.7" y="839.4" width="2.5" height="2.5" fill="#084"/>
<rect x="261.6" y="839.4" width="2.5" height="2.5" fill="#7d7"/>
<rect x="263.6" y="839.4" width="2.5" height="2.5" fill="#f8a"/>
<rect x="265.6" y="839.4" width="2.5" height="2.5" fill="#0a4"/>
<rect x="267.6" y="839.4" width="2.5" height="2.5" fill="#084"/>
<rect x="269.6" y="839.4" width="2.5" height="2.5" fill="#000"/>
<rect x="271.6" y="839.4" width="2.5" height="2.5" fill="#e8e"/>
<rect x="273.5" y="839.4" width="2.5" height="2.5" fill="#ff0"/>
<rect x="275.5" y="839.4" width="2.5" height="2.5" fill="#e8e"/>
<rect x="277.5" y="839.4" width="2.5" height="2.5" fill="#0ff"/>
<rect x="279.5" y="839.4" width="2.5" height="2.5" fill="#f00"/>
<rect x="281.5" y="839.4" width="2.5" height="2.5" fill="#b4e"/>
<rect x="283.5" y="839.4" width="2.5" height="2.5" fill="#000"/>
<rect x="285.4" y="839.4" width="2.5" height="2.5" fill="#0f0"/>
<rect x="287.4" y="839.4" width="2.5" height="2.5" fill="#c82"/>
<rect x="289.4" y="839.4" width="2.5" height="2.5" fill="#0a4"/>
<rect x="291.4" y="839.4" width="2.5" height="2.5" fill="#b4e"/>
<rect x="293.4" y="839.4" width="2.5" height="2.5" fill="#f00"/>
<rect x="295.4" y="839.4" width="2.5" height="2.5" fill="#c0c"/>
<rect x="297.3" y="839.4" width="2.5" height="2.5" fill="#f0f"/>
<rect x="299.3" y="839.4" width="2.5" height="2.5" fill="#4fc"/>
<rect x="301.3" y="839.4" width="2.0" height="2.5" fill="#0a4"/>
<rect x="253.7" y="841.4" width="2.5" height="2.5" fill="#f0f"/>
<rect x="255.7" y="841.4" width="2.5" height="2.5" fill="#7d7"/>
<rect x="257.7" y="841.4" width="2.5" height="2.5" fill="#4fc"/>
<rect x="259.7" y="841.4" width="2.5" height="2.5" fill="#0f0"/>
<rect x="261.6" y="841.4" width="2.5" height="2.5" fill="#000"/>
<rect x="263.6" y="841.4" width="2.5" height="2.5" fill="#24a"/>
<rect x="265.6" y="841.4" width="2.5" height="2.5" fill="#ff0"/>
<rect x="267.6" y="841.4" width="2.5" height="2.5" fill="#4fc"/>
<rect x="269.6" y="841.4" width="2.5" height="2.5" fill="#fff"/>
<rect x="271.6" y="841.4" width="2.5" height="2.5" fill="#d04"/>
<rect x="273.5" y="841.4" width="2.5" height="2.5" fill="#084"/>
<rect x="275.5" y="841.4" width="2.5" height="2.5" fill="#ff0"/>
<rect x="277.5" y="841.4" width="2.5" height="2.5" fill="#408"/>
<rect x="279.5" y="841.4" width="2.5" height="2.5" fill="#f8a"/>
<rect x="281.5" y="841.4" width="2.5" height="2.5" fill="#080"/>
<rect x="283.5" y="841.4" width="2.5" height="2.5" fill="#00f"/>
<rect x="285.4" y="841.4" width="2.5" height="2.5" fill="#a0f"/>
<rect x="287.4" y="841.4" width="2.5" height="2.5" fill="#6c2"/>
<rect x="289.4" y="841.4" width="2.5" height="2.5" fill="#a62"/>
<rect x="291.4" y="841.4" width="2.5" height="2.5" fill="#f0f"/>
<rect x="293.4" y="841.4" width="2.5" height="2.5" fill="#080"/>
<rect x="295.4" y="841.4" width="2.5" height="2.5" fill="#000"/>
<rect x="297.3" y="841.4" width="2.5" height="2.5" fill="#0f0"/>
<rect x="299.3" y="841.4" width="2.5" height="2.5" fill="#d04"/>
<rect x="301.3" y="841.4" width="2.0" height="2.5" fill="#7d7"/>
<rect x="253.7" y="843.4" width="2.5" height="2.5" fill="#c0c"/>
<rect x="255.7" y="843.4" width="2.5" height="2.5" fill="#24a"/>
<rect x="257.7" y="843.4" width="2.5" height="2.5" fill="#d04"/>
<rect x="259.7" y="843.4" width="2.5" height="2.5" fill="#135"/>
<rect x="261.6" y="843.4" width="2.5" height="2.5" fill="#6c2"/>
<rect x="263.6" y="843.4" width="2.5" height="2.5" fill="#a62"/>
<rect x="265.6" y="843.4" width="2.5" height="2.5" fill="#e6c"/>
<rect x="267.6" y="843.4" width="2.5" height="2.5" fill="#fa0"/>
<rect x="269.6" y="843.4" width="2.5" height="2.5" fill="#f00"/>
<rect x="271.6" y="843.4" width="2.5" height="2.5" fill="#408"/>
<rect x="273.5" y="843.4" width="2.5" height="2.5" fill="#080"/>
<rect x="275.5" y="843.4" width="2.5" height="2.5" fill="#c82"/>
<rect x="277.5" y="843.4" width="2.5" height="2.5" fill="#c82"/>
<rect x="279.5" y="843.4" width="2.5" height="2.5" fill="#c82"/>
<rect x="281.5" y="843.4" width="2.5" height="2.5" fill="#7d7"/>
<rect x="283.5" y="843.4" width="2.5" height="2.5" fill="#2a8"/>
<rect x="285.4" y="843.4" width="2.5" height="2.5" fill="#a0f"/>
<rect x="287.4" y="843.4" width="2.5" height="2.5" fill="#06c"/>
<rect x="289.4" y="843.4" width="2.5" height="2.5" fill="#a62"/>
<rect x="291.4" y="843.4" width="2.5" height="2.5" fill="#ff0"/>
<rect x="293.4" y="843.4" width="2.5" height="2.5" fill="#d04"/>
<rect x="295.4" y="843.4" width="2.5" height="2.5" fill="#f00"/>
<rect x="297.3" y="843.4" width="2.5" height="2.5" fill="#48f"/>
<rect x="299.3" y="843.4" width="2.5" height="2.5" fill="#d04"/>
<rect x="301.3" y="843.4" width="2.0" height="2.5" fill="#0f0"/>
<rect x="253.7" y="845.3" width="2.5" height="2.5" fill="#0a4"/>
<rect x="255.7" y="845.3" width="2.5" height="2.5" fill="#fa0"/>
<rect x="257.7" y="845.3" width="2.5" height="2.5" fill="#b4e"/>
<rect x="259.7" y="845.3" width="2.5" height="2.5" fill="#f8a"/>
<rect x="261.6" y="845.3" width="2.5" height="2.5" fill="#f00"/>
<rect x="263.6" y="845.3" width="2.5" height="2.5" fill="#06c"/>
<rect x="265.6" y="845.3" width="2.5" height="2.5" fill="#7d7"/>
<rect x="267.6" y="845.3" width="2.5" height="2.5" fill="#2a8"/>
<rect x="269.6" y="845.3" width="2.5" height="2.5" fill="#fa0"/>
<rect x="271.6" y="845.3" width="2.5" height="2.5" fill="#06c"/>
<rect x="273.5" y="845.3" width="2.5" height="2.5" fill="#0ff"/>
<rect x="275.5" y="845.3" width="2.5" height="2.5" fill="#0f0"/>
<rect x="277.5" y="845.3" width="2.5" height="2.5" fill="#24a"/>
<rect x="279.5" y="845.3" width="2.5" height="2.5" fill="#fff"/>
<rect x="281.5" y="845.3" width="2.5" height="2.5" fill="#084"/>
<rect x="283.5" y="845.3" width="2.5" height="2.5" fill="#d04"/>
<rect x="285.4" y="845.3" width="2.5" height="2.5" fill="#511"/>
<rect x="287.4" y="845.3" width="2.5" height="2.5" fill="#511"/>
<rect x="289.4" y="845.3" width="2.5" height="2.5" fill="#000"/>
<rect x="291.4" y="845.3" width="2.5" height="2.5" fill="#c82"/>
<rect x="293.4" y="845.3" width="2.5" height="2.5" fill="#f0f"/>
<rect x="295.4" y="845.3" width="2.5" height="2.5" fill="#fc8"/>
<rect x="297.3" y="845.3" width="2.5" height="2.5" fill="#fa0"/>
<rect x="299.3" y="845.3" width="2.5" height="2.5" fill="#0ff"/>
<rect x="301.3" y="845.3" width="2.0" height="2.5" fill="#084"/>
<rect x="253.7" y="847.3" width="2.5" height="2.5" fill="#f0f"/>
<rect x="255.7" y="847.3" width="2.5" height="2.5" fill="#d04"/>
<rect x="257.7" y="847.3" width="2.5" height="2.5" fill="#00f"/>
<rect x="259.7" y="847.3" width="2.5" height="2.5" fill="#f00"/>
<rect x="261.6" y="847.3" width="2.5" height="2.5" fill="#8f4"/>
<rect x="263.6" y="847.3" width="2.5" height="2.5" fill="#06c"/>
<rect x="265.6" y="847.3" width="2.5" height="2.5" fill="#48f"/>
<rect x="267.6" y="847.3" width="2.5" height="2.5" fill="#000"/>
<rect x="269.6" y="847.3" width="2.5" height="2.5" fill="#511"/>
<rect x="271.6" y="847.3" width="2.5" height="2.5" fill="#a62"/>
<rect x="273.5" y="847.3" width="2.5" height="2.5" fill="#a62"/>
<rect x="275.5" y="847.3" width="2.5" height="2.5" fill="#2a8"/>
<rect x="277.5" y="847.3" width="2.5" height="2.5" fill="#511"/>
<rect x="279.5" y="847.3" width="2.5" height="2.5" fill="#f8a"/>
<rect x="281.5" y="847.3" width="2.5" height="2.5" fill="#511"/>
<rect x="283.5" y="847.3" width="2.5" height="2.5" fill="#6c2"/>
<rect x="285.4" y="847.3" width="2.5" height="2.5" fill="#6c2"/>
<rect x="287.4" y="847.3" width="2.5" height="2.5" fill="#408"/>
<rect x="289.4" y="847.3" width="2.5" height="2.5" fill="#0a4"/>
<rect x="291.4" y="847.3" width="2.5" height="2.5" fill="#d04"/>
<rect x="293.4" y="847.3" width="2.5" height="2.5" fill="#2a8"/>
<rect x="295.4" y="847.3" width="2.5" height="2.5" fill="#a0f"/>
<rect x="297.3" y="847.3" width="2.5" height="2.5" fill="#a0f"/>
<rect x="299.3" y="847.3" width="2.5" height="2.5" fill="#48f"/>
<rect x="301.3" y="847.3" width="2.0" height="2.5" fill="#f0f"/>
<rect x="253.7" y="849.3" width="2.5" height="2.5" fill="#080"/>
<rect x="255.7" y="849.3" width="2.5" height="2.5" fill="#0f0"/>
<rect x="257.7" y="849.3" width="2.5" height="2.5" fill="#408"/>
<rect x="259.7" y="849.3" width="2.5" height="2.5" fill="#fff"/>
<rect x="261.6" y="849.3" width="2.5" height="2.5" fill="#e6c"/>
<rect x="263.6" y="849.3" width="2.5" height="2.5" fill="#f00"/>
<rect x="265.6" y="849.3" width="2.5" height="2.5" fill="#408"/>
<rect x="267.6" y="849.3" width="2.5" height="2.5" fill="#fc8"/>
<rect x="269.6" y="849.3" width="2.5" height="2.5" fill="#8f4"/>
<rect x="271.6" y="849.3" width="2.5" height="2.5" fill="#7d7"/>
<rect x="273.5" y="849.3" width="2.5" height="2.5" fill="#fff"/>
<rect x="275.5" y="849.3" width="2.5" height="2.5" fill="#084"/>
<rect x="277.5" y="849.3" width="2.5" height="2.5" fill="#a0f"/>
<rect x="279.5" y="849.3" width="2.5" height="2.5" fill="#06c"/>
<rect x="281.5" y="849.3" width="2.5" height="2.5" fill="#8f4"/>
<rect x="283.5" y="849.3" width="2.5" height="2.5" fill="#6c2"/>
<rect x="285.4" y="849.3" width="2.5" height="2.5" fill="#ff0"/>
<rect x="287.4" y="849.3" width="2.5" height="2.5" fill="#408"/>
<rect x="289.4" y="849.3" width="2.5" height="2.5" fill="#6c2"/>
<rect x="291.4" y="849.3" width="2.5" height="2.5" fill="#0f0"/>
<rect x="293.4" y="849.3" width="2.5" height="2.5" fill="#a0f"/>
<rect x="295.4" y="849.3" width="2.5" height="2.5" fill="#000"/>
<rect x="297.3" y="849.3" width="2.5" height="2.5" fill="#c82"/>
<rect x="299.3" y="849.3" width="2.5" height="2.5" fill="#f8a"/>
<rect x="301.3" y="849.3" width="2.0" height="2.5" fill="#06c"/>
<rect x="253.7" y="851.3" width="2.5" height="2.5" fill="#fa0"/>
<rect x="255.7" y="851.3" width="2.5" height="2.5" fill="#f8a"/>
<rect x="257.7" y="851.3" width="2.5" height="2.5" fill="#e6c"/>
<rect x="259.7" y="851.3" width="2.5" height="2.5" fill="#fa0"/>
<rect x="261.6" y="851.3" width="2.5" height="2.5" fill="#511"/>
<rect x="263.6" y="851.3" width="2.5" height="2.5" fill="#0a4"/>
<rect x="265.6" y="851.3" width="2.5" height="2.5" fill="#e6c"/>
<rect x="267.6" y="851.3" width="2.5" height="2.5" fill="#f0f"/>
<rect x="269.6" y="851.3" width="2.5" height="2.5" fill="#ff0"/>
<rect x="271.6" y="851.3" width="2.5" height="2.5" fill="#6c2"/>
<rect x="273.5" y="851.3" width="2.5" height="2.5" fill="#135"/>
<rect x="275.5" y="851.3" width="2.5" height="2.5" fill="#b4e"/>
<rect x="277.5" y="851.3" width="2.5" height="2.5" fill="#ff0"/>
<rect x="279.5" y="851.3" width="2.5" height="2.5" fill="#b4e"/>
<rect x="281.5" y="851.3" width="2.5" height="2.5" fill="#a62"/>
<rect x="283.5" y="851.3" width="2.5" height="2.5" fill="#c82"/>
<rect x="285.4" y="851.3" width="2.5" height="2.5" fill="#e6c"/>
<rect x="287.4" y="851.3" width="2.5" height="2.5" fill="#0a4"/>
<rect x="289.4" y="851.3" width="2.5" height="2.5" fill="#000"/>
<rect x="291.4" y="851.3" width="2.5" height="2.5" fill="#48f"/>
<rect x="293.4" y="851.3" width="2.5" height="2.5" fill="#f00"/>
<rect x="295.4" y="851.3" width="2.5" height="2.5" fill="#6c2"/>
<rect x="297.3" y="851.3" width="2.5" height="2.5" fill="#4fc"/>
<rect x="299.3" y="851.3" width="2.5" height="2.5" fill="#c0c"/>
<rect x="301.3" y="851.3" width="2.0" height="2.5" fill="#fff"/>
<rect x="253.7" y="853.2" width="2.5" height="2.5" fill="#a0f"/>
<rect x="255.7" y="853.2" width="2.5" height="2.5" fill="#f0f"/>
<rect x="257.7" y="853.2" width="2.5" height="2.5" fill="#06c"/>
<rect x="259.7" y="853.2" width="2.5" height="2.5" fill="#084"/>
<rect x="261.6" y="853.2" width="2.5" height="2.5" fill="#a0f"/>
<rect x="263.6" y="853.2" width="2.5" height="2.5" fill="#0f0"/>
<rect x="265.6" y="853.2" width="2.5" height="2.5" fill="#ff0"/>
<rect x="267.6" y="853.2" width="2.5" height="2.5" fill="#0a4"/>
<rect x="269.6" y="853.2" width="2.5" height="2.5" fill="#06c"/>
<rect x="271.6" y="853.2" width="2.5" height="2.5" fill="#fc8"/>
<rect x="273.5" y="853.2" width="2.5" height="2.5" fill="#f8a"/>
<rect x="275.5" y="853.2" width="2.5" height="2.5" fill="#06c"/>
<rect x="277.5" y="853.2" width="2.5" height="2.5" fill="#080"/>
<rect x="279.5" y="853.2" width="2.5" height="2.5" fill="#a62"/>
<rect x="281.5" y="853.2" width="2.5" height="2.5" fill="#00f"/>
<rect x="283.5" y="853.2" width="2.5" height="2.5" fill="#0ff"/>
<rect x="285.4" y="853.2" width="2.5" height="2.5" fill="#a62"/>
<rect x="287.4" y="853.2" width="2.5" height="2.5" fill="#c0c"/>
<rect x="289.4" y="853.2" width="2.5" height="2.5" fill="#c82"/>
<rect x="291.4" y="853.2" width="2.5" height="2.5" fill="#c82"/>
<rect x="293.4" y="853.2" width="2.5" height="2.5" fill="#00f"/>
<rect x="295.4" y="853.2" width="2.5" height="2.5" fill="#d04"/>
<rect x="297.3" y="853.2" width="2.5" height="2.5" fill="#a0f"/>
<rect x="299.3" y="853.2" width="2.5" height="2.5" fill="#8f4"/>
<rect x="301.3" y="853.2" width="2.0" height="2.5" fill="#0a4"/>
<rect x="253.7" y="855.2" width="2.5" height="2.5" fill="#2a8"/>
<rect x="255.7" y="855.2" width="2.5" height="2.5" fill="#511"/>
<rect x="257.7" y="855.2" width="2.5" height="2.5" fill="#8f4"/>
<rect x="259.7" y="855.2" width="2.5" height="2.5" fill="#2a8"/>
<rect x="261.6" y="855.2" width="2.5" height="2.5" fill="#00f"/>
<rect x="263.6" y="855.2" width="2.5" height="2.5" fill="#a62"/>
<rect x="265.6" y="855.2" width="2.5" height="2.5" fill="#f8a"/>
<rect x="267.6" y="855.2" width="2.5" height="2.5" fill="#fc8"/>
<rect x="269.6" y="855.2" width="2.5" height="2.5" fill="#24a"/>
<rect x="271.6" y="855.2" width="2.5" height="2.5" fill="#fff"/>
<rect x="273.5" y="855.2" width="2.5" height="2.5" fill="#a0f"/>
<rect x="275.5" y="855.2" width="2.5" height="2.5" fill="#000"/>
<rect x="277.5" y="855.2" width="2.5" height="2.5" fill="#511"/>
<rect x="279.5" y="855.2" width="2.5" height="2.5" fill="#135"/>
<rect x="281.5" y="855.2" width="2.5" height="2.5" fill="#4fc"/>
<rect x="283.5" y="855.2" width="2.5" height="2.5" fill="#4fc"/>
<rect x="285.4" y="855.2" width="2.5" height="2.5" fill="#b4e"/>
<rect x="287.4" y="855.2" width="2.5" height="2.5" fill="#6c2"/>
<rect x="289.4" y="855.2" width="2.5" height="2.5" fill="#f0f"/>
<rect x="291.4" y="855.2" width="2.5" height="2.5" fill="#0a4"/>
<rect x="293.4" y="855.2" width="2.5" height="2.5" fill="#ff0"/>
<rect x="295.4" y="855.2" width="2.5" height="2.5" fill="#c82"/>
<rect x="297.3" y="855.2" width="2.5" height="2.5" fill="#080"/>
<rect x="299.3" y="855.2" width="2.5" height="2.5" fill="#000"/>
<rect x="301.3" y="855.2" width="2.0" height="2.5" fill="#fa0"/>
<rect x="253.7" y="857.2" width="2.5" height="2.5" fill="#f0f"/>
<rect x="255.7" y="857.2" width="2.5" height="2.5" fill="#0a4"/>
<rect x="257.7" y="857.2" width="2.5" height="2.5" fill="#c82"/>
<rect x="259.7" y="857.2" width="2.5" height="2.5" fill="#e8e"/>
<rect x="261.6" y="857.2" width="2.5" height="2.5" fill="#4fc"/>
<rect x="263.6" y="857.2" width="2.5" height="2.5" fill="#080"/>
<rect x="265.6" y="857.2" width="2.5" height="2.5" fill="#fc8"/>
<rect x="267.6" y="857.2" width="2.5" height="2.5" fill="#084"/>
<rect x="269.6" y="857.2" width="2.5" height="2.5" fill="#f0f"/>
<rect x="271.6" y="857.2" width="2.5" height="2.5" fill="#a0f"/>
<rect x="273.5" y="857.2" width="2.5" height="2.5" fill="#24a"/>
<rect x="275.5" y="857.2" width="2.5" height="2.5" fill="#408"/>
<rect x="277.5" y="857.2" width="2.5" height="2.5" fill="#b4e"/>
<rect x="279.5" y="857.2" width="2.5" height="2.5" fill="#6c2"/>
<rect x="281.5" y="857.2" width="2.5" height="2.5" fill="#d04"/>
<rect x="283.5" y="857.2" width="2.5" height="2.5" fill="#48f"/>
<rect x="285.4" y="857.2" width="2.5" height="2.5" fill="#0f0"/>
<rect x="287.4" y="857.2" width="2.5" height="2.5" fill="#f8a"/>
<rect x="289.4" y="857.2" width="2.5" height="2.5" fill="#fa0"/>
<rect x="291.4" y="857.2" width="2.5" height="2.5" fill="#f00"/>
<rect x="293.4" y="857.2" width="2.5" height="2.5" fill="#ff0"/>
<rect x="295.4" y="857.2" width="2.5" height="2.5" fill="#fa0"/>
<rect x="297.3" y="857.2" width="2.5" height="2.5" fill="#0f0"/>
<rect x="299.3" y="857.2" width="2.5" height="2.5" fill="#4fc"/>
<rect x="301.3" y="857.2" width="2.0" height="2.5" fill="#7d7"/>
<rect x="253.7" y="859.1" width="2.5" height="2.5" fill="#6c2"/>
<rect x="255.7" y="859.1" width="2.5" height="2.5" fill="#6c2"/>
<rect x="257.7" y="859.1" width="2.5" height="2.5" fill="#0ff"/>
<rect x="259.7" y="859.1" width="2.5" height="2.5" fill="#000"/>
<rect x="261.6" y="859.1" width="2.5" height="2.5" fill="#24a"/>
<rect x="263.6" y="859.1" width="2.5" height="2.5" fill="#e6c"/>
<rect x="265.6" y="859.1" width="2.5" height="2.5" fill="#a0f"/>
<rect x="267.6" y="859.1" width="2.5" height="2.5" fill="#ff0"/>
<rect x="269.6" y="859.1" width="2.5" height="2.5" fill="#c0c"/>
<rect x="271.6" y="859.1" width="2.5" height="2.5" fill="#8f4"/>
<rect x="273.5" y="859.1" width="2.5" height="2.5" fill="#511"/>
<rect x="275.5" y="859.1" width="2.5" height="2.5" fill="#24a"/>
<rect x="277.5" y="859.1" width="2.5" height="2.5" fill="#b4e"/>
<rect x="279.5" y="859.1" width="2.5" height="2.5" fill="#0a4"/>
<rect x="281.5" y="859.1" width="2.5" height="2.5" fill="#6c2"/>
<rect x="283.5" y="859.1" width="2.5" height="2.5" fill="#511"/>
<rect x="285.4" y="859.1" width="2.5" height="2.5" fill="#24a"/>
<rect x="287.4" y="859.1" width="2.5" height="2.5" fill="#00f"/>
<rect x="289.4" y="859.1" width="2.5" height="2.5" fill="#48f"/>
<rect x="291.4" y="859.1" width="2.5" height="2.5" fill="#d04"/>
<rect x="293.4" y="859.1" width="2.5" height="2.5" fill="#408"/>
<rect x="295.4" y="859.1" width="2.5" height="2.5" fill="#c82"/>
<rect x="297.3" y="859.1" width="2.5" height="2.5" fill="#fc8"/>
<rect x="299.3" y="859.1" width="2.5" height="2.5" fill="#fc8"/>
<rect x="301.3" y="859.1" width="2.0" height="2.5" fill="#e6c"/>
<rect x="253.7" y="861.1" width="2.5" height="2.5" fill="#e6c"/>
<rect x="255.7" y="861.1" width="2.5" height="2.5" fill="#000"/>
<rect x="257.7" y="861.1" width="2.5" height="2.5" fill="#ff0"/>
<rect x="259.7" y="861.1" width="2.5" height="2.5" fill="#6c2"/>
<rect x="261.6" y="861.1" width="2.5" height="2.5" fill="#084"/>
<rect x="263.6" y="861.1" width="2.5" height="2.5" fill="#24a"/>
<rect x="265.6" y="861.1" width="2.5" height="2.5" fill="#4fc"/>
<rect x="267.6" y="861.1" width="2.5" height="2.5" fill="#b4e"/>
<rect x="269.6" y="861.1" width="2.5" height="2.5" fill="#7d7"/>
<rect x="271.6" y="861.1" width="2.5" height="2.5" fill="#b4e"/>
<rect x="273.5" y="861.1" width="2.5" height="2.5" fill="#0ff"/>
<rect x="275.5" y="861.1" width="2.5" height="2.5" fill="#24a"/>
<rect x="277.5" y="861.1" width="2.5" height="2.5" fill="#511"/>
<rect x="279.5" y="861.1" width="2.5" height="2.5" fill="#a0f"/>
<rect x="281.5" y="861.1" width="2.5" height="2.5" fill="#0ff"/>
<rect x="283.5" y="861.1" width="2.5" height="2.5" fill="#e8e"/>
<rect x="285.4" y="861.1" width="2.5" height="2.5" fill="#d04"/>
<rect x="287.4" y="861.1" width="2.5" height="2.5" fill="#e6c"/>
<rect x="289.4" y="861.1" width="2.5" height="2.5" fill="#135"/>
<rect x="291.4" y="861.1" width="2.5" height="2.5" fill="#0f0"/>
<rect x="293.4" y="861.1" width="2.5" height="2.5" fill="#080"/>
<rect x="295.4" y="861.1" width="2.5" height="2.5" fill="#e6c"/>
<rect x="297.3" y="861.1" width="2.5" height="2.5" fill="#f00"/>
<rect x="299.3" y="861.1" width="2.5" height="2.5" fill="#2a8"/>
<rect x="301.3" y="861.1" width="2.0" height="2.5" fill="#4fc"/>
<rect x="253.7" y="863.1" width="2.5" height="2.5" fill="#0a4"/>
<rect x="255.7" y="863.1" width="2.5" height="2.5" fill="#fff"/>
<rect x="257.7" y="863.1" width="2.5" height="2.5" fill="#48f"/>
<rect x="259.7" y="863.1" width="2.5" height="2.5" fill="#0f0"/>
<rect x="261.6" y="863.1" width="2.5" height="2.5" fill="#c0c"/>
<rect x="263.6" y="863.1" width="2.5" height="2.5" fill="#fc8"/>
<rect x="265.6" y="863.1" width="2.5" height="2.5" fill="#f0f"/>
<rect x="267.6" y="863.1" width="2.5" height="2.5" fill="#e8e"/>
<rect x="269.6" y="863.1" width="2.5" height="2.5" fill="#f0f"/>
<rect x="271.6" y="863.1" width="2.5" height="2.5" fill="#0a4"/>
<rect x="273.5" y="863.1" width="2.5" height="2.5" fill="#7d7"/>
<rect x="275.5" y="863.1" width="2.5" height="2.5" fill="#000"/>
<rect x="277.5" y="863.1" width="2.5" height="2.5" fill="#2a8"/>
<rect x="279.5" y="863.1" width="2.5" height="2.5" fill="#511"/>
<rect x="281.5" y="863.1" width="2.5" height="2.5" fill="#408"/>
<rect x="283.5" y="863.1" width="2.5" height="2.5" fill="#a0f"/>
<rect x="285.4" y="863.1" width="2.5" height="2.5" fill="#0ff"/>
<rect x="287.4" y="863.1" width="2.5" height="2.5" fill="#080"/>
<rect x="289.4" y="863.1" width="2.5" height="2.5" fill="#8f4"/>
<rect x="291.4" y="863.1" width="2.5" height="2.5" fill="#24a"/>
<rect x="293.4" y="863.1" width="2.5" height="2.5" fill="#a0f"/>
<rect x="295.4" y="863.1" width="2.5" height="2.5" fill="#0a4"/>
<rect x="297.3" y="863.1" width="2.5" height="2.5" fill="#080"/>
<rect x="299.3" y="863.1" width="2.5" height="2.5" fill="#fff"/>
<rect x="301.3" y="863.1" width="2.0" height="2.5" fill="#fc8"/>
<rect x="253.7" y="865.0" width="2.5" height="2.5" fill="#fff"/>
<rect x="255.7" y="865.0" width="2.5" height="2.5" fill="#511"/>
<rect x="257.7" y="865.0" width="2.5" height="2.5" fill="#d04"/>
<rect x="259.7" y="865.0" width="2.5" height="2.5" fill="#511"/>
<rect x="261.6" y="865.0" width="2.5" height="2.5" fill="#c82"/>
<rect x="263.6" y="865.0" width="2.5" height="2.5" fill="#ff0"/>
<rect x="265.6" y="865.0" width="2.5" height="2.5" fill="#fff"/>
<rect x="267.6" y="865.0" width="2.5" height="2.5" fill="#f00"/>
<rect x="269.6" y="865.0" width="2.5" height="2.5" fill="#f00"/>
<rect x="271.6" y="865.0" width="2.5" height="2.5" fill="#24a"/>
<rect x="273.5" y="865.0" width="2.5" height="2.5" fill="#06c"/>
<rect x="275.5" y="865.0" width="2.5" height="2.5" fill="#0ff"/>
<rect x="277.5" y="865.0" width="2.5" height="2.5" fill="#fff"/>
<rect x="279.5" y="865.0" width="2.5" height="2.5" fill="#48f"/>
<rect x="281.5" y="865.0" width="2.5" height="2.5" fill="#8f4"/>
<rect x="283.5" y="865.0" width="2.5" height="2.5" fill="#135"/>
<rect x="285.4" y="865.0" width="2.5" height="2.5" fill="#24a"/>
<rect x="287.4" y="865.0" width="2.5" height="2.5" fill="#135"/>
<rect x="289.4" y="865.0" width="2.5" height="2.5" fill="#e8e"/>
<rect x="291.4" y="865.0" width="2.5" height="2.5" fill="#511"/>
<rect x="293.4" y="865.0" width="2.5" height="2.5" fill="#f0f"/>
<rect x="295.4" y="865.0" width="2.5" height="2.5" fill="#fc8"/>
<rect x="297.3" y="865.0" width="2.5" height="2.5" fill="#7d7"/>
<rect x="299.3" y="865.0" width="2.5" height="2.5" fill="#f00"/>
<rect x="301.3" y="865.0" width="2.0" height="2.5" fill="#4fc"/>
<rect x="253.7" y="867.0" width="2.5" height="2.5" fill="#48f"/>
<rect x="255.7" y="867.0" width="2.5" height="2.5" fill="#408"/>
<rect x="257.7" y="867.0" width="2.5" height="2.5" fill="#f0f"/>
<rect x="259.7" y="867.0" width="2.5" height="2.5" fill="#06c"/>
<rect x="261.6" y="867.0" width="2.5" height="2.5" fill="#511"/>
<rect x="263.6" y="867.0" width="2.5" height="2.5" fill="#7d7"/>
<rect x="265.6" y="867.0" width="2.5" height="2.5" fill="#b4e"/>
<rect x="267.6" y="867.0" width="2.5" height="2.5" fill="#d04"/>
<rect x="269.6" y="867.0" width="2.5" height="2.5" fill="#a0f"/>
<rect x="271.6" y="867.0" width="2.5" height="2.5" fill="#48f"/>
<rect x="273.5" y="867.0" width="2.5" height="2.5" fill="#d04"/>
<rect x="275.5" y="867.0" width="2.5" height="2.5" fill="#d04"/>
<rect x="277.5" y="867.0" width="2.5" height="2.5" fill="#06c"/>
<rect x="279.5" y="867.0" width="2.5" height="2.5" fill="#fff"/>
<rect x="281.5" y="867.0" width="2.5" height="2.5" fill="#f00"/>
<rect x="283.5" y="867.0" width="2.5" height="2.5" fill="#d04"/>
<rect x="285.4" y="867.0" width="2.5" height="2.5" fill="#fc8"/>
<rect x="287.4" y="867.0" width="2.5" height="2.5" fill="#000"/>
<rect x="289.4" y="867.0" width="2.5" height="2.5" fill="#4fc"/>
<rect x="291.4" y="867.0" width="2.5" height="2.5" fill="#080"/>
<rect x="293.4" y="867.0" width="2.5" height="2.5" fill="#ff0"/>
<rect x="295.4" y="867.0" width="2.5" height="2.5" fill="#a62"/>
<rect x="297.3" y="867.0" width="2.5" height="2.5" fill="#fff"/>
<rect x="299.3" y="867.0" width="2.5" height="2.5" fill="#0ff"/>
<rect x="301.3" y="867.0" width="2.0" height="2.5" fill="#080"/>
<rect x="253.7" y="869.0" width="2.5" height="2.5" fill="#24a"/>
<rect x="255.7" y="869.0" width="2.5" height="2.5" fill="#084"/>
<rect x="257.7" y="869.0" width="2.5" height="2.5" fill="#7d7"/>
<rect x="259.7" y="869.0" width="2.5" height="2.5" fill="#fc8"/>
<rect x="261.6" y="869.0" width="2.5" height="2.5" fill="#2a8"/>
<rect x="263.6" y="869.0" width="2.5" height="2.5" fill="#7d7"/>
<rect x="265.6" y="869.0" width="2.5" height="2.5" fill="#511"/>
<rect x="267.6" y="869.0" width="2.5" height="2.5" fill="#00f"/>
<rect x="269.6" y="869.0" width="2.5" height="2.5" fill="#fa0"/>
<rect x="271.6" y="869.0" width="2.5" height="2.5" fill="#48f"/>
<rect x="273.5" y="869.0" width="2.5" height="2.5" fill="#e8e"/>
<rect x="275.5" y="869.0" width="2.5" height="2.5" fill="#0ff"/>
<rect x="277.5" y="869.0" width="2.5" height="2.5" fill="#f00"/>
<rect x="279.5" y="869.0" width="2.5" height="2.5" fill="#f00"/>
<rect x="281.5" y="869.0" width="2.5" height="2.5" fill="#fc8"/>
<rect x="283.5" y="869.0" width="2.5" height="2.5" fill="#f0f"/>
<rect x="285.4" y="869.0" width="2.5" height="2.5" fill="#fff"/>
<rect x="287.4" y="869.0" width="2.5" height="2.5" fill="#fc8"/>
<rect x="289.4" y="869.0" width="2.5" height="2.5" fill="#ff0"/>
<rect x="291.4" y="869.0" width="2.5" height="2.5" fill="#7d7"/>
<rect x="293.4" y="869.0" width="2.5" height="2.5" fill="#48f"/>
<rect x="295.4" y="869.0" width="2.5" height="2.5" fill="#48f"/>
<rect x="297.3" y="869.0" width="2.5" height="2.5" fill="#f00"/>
<rect x="299.3" y="869.0" width="2.5" height="2.5" fill="#408"/>
<rect x="301.3" y="869.0" width="2.0" height="2.5" fill="#000"/>
<rect x="253.7" y="871.0" width="2.5" height="2.5" fill="#e8e"/>
<rect x="255.7" y="871.0" width="2.5" height="2.5" fill="#48f"/>
<rect x="257.7" y="871.0" width="2.5" height="2.5" fill="#4fc"/>
<rect x="259.7" y="871.0" width="2.5" height="2.5" fill="#b4e"/>
<rect x="261.6" y="871.0" width="2.5" height="2.5" fill="#4fc"/>
<rect x="263.6" y="871.0" width="2.5" height="2.5" fill="#084"/>
<rect x="265.6" y="871.0" width="2.5" height="2.5" fill="#0a4"/>
<rect x="267.6" y="871.0" width="2.5" height="2.5" fill="#0a4"/>
<rect x="269.6" y="871.0" width="2.5" height="2.5" fill="#135"/>
<rect x="271.6" y="871.0" width="2.5" height="2.5" fill="#0a4"/>
<rect x="273.5" y="871.0" width="2.5" height="2.5" fill="#24a"/>
<rect x="275.5" y="871.0" width="2.5" height="2.5" fill="#408"/>
<rect x="277.5" y="871.0" width="2.5" height="2.5" fill="#c82"/>
<rect x="279.5" y="871.0" width="2.5" height="2.5" fill="#c0c"/>
<rect x="281.5" y="871.0" width="2.5" height="2.5" fill="#a62"/>
<rect x="283.5" y="871.0" width="2.5" height="2.5" fill="#f00"/>
<rect x="285.4" y="871.0" width="2.5" height="2.5" fill="#4fc"/>
<rect x="287.4" y="871.0" width="2.5" height="2.5" fill="#408"/>
<rect x="289.4" y="871.0" width="2.5" height="2.5" fill="#8f4"/>
<rect x="291.4" y="871.0" width="2.5" height="2.5" fill="#a0f"/>
<rect x="293.4" y="871.0" width="2.5" height="2.5" fill="#0f0"/>
<rect x="295.4" y="871.0" width="2.5" height="2.5" fill="#2a8"/>
<rect x="297.3" y="871.0" width="2.5" height="2.5" fill="#f8a"/>
<rect x="299.3" y="871.0" width="2.5" height="2.5" fill="#c82"/>
<rect x="301.3" y="871.0" width="2.0" height="2.5" fill="#135"/>
<rect x="253.7" y="872.9" width="2.5" height="2.0" fill="#e8e"/>
<rect x="255.7" y="872.9" width="2.5" height="2.0" fill="#000"/>
<rect x="257.7" y="872.9" width="2.5" height="2.0" fill="#2a8"/>
<rect x="259.7" y="872.9" width="2.5" height="2.0" fill="#a62"/>
<rect x="261.6" y="872.9" width="2.5" height="2.0" fill="#06c"/>
<rect x="263.6" y="872.9" width="2.5" height="2.0" fill="#f8a"/>
<rect x="265.6" y="872.9" width="2.5" height="2.0" fill="#084"/>
<rect x="267.6" y="872.9" width="2.5" height="2.0" fill="#06c"/>
<rect x="269.6" y="872.9" width="2.5" height="2.0" fill="#c0c"/>
<rect x="271.6" y="872.9" width="2.5" height="2.0" fill="#6c2"/>
<rect x="273.5" y="872.9" width="2.5" height="2.0" fill="#f00"/>
<rect x="275.5" y="872.9" width="2.5" height="2.0" fill="#000"/>
<rect x="277.5" y="872.9" width="2.5" height="2.0" fill="#f00"/>
<rect x="279.5" y="872.9" width="2.5" height="2.0" fill="#f0f"/>
<rect x="281.5" y="872.9" width="2.5" height="2.0" fill="#b4e"/>
<rect x="283.5" y="872.9" width="2.5" height="2.0" fill="#c82"/>
<rect x="285.4" y="872.9" width="2.5" height="2.0" fill="#b4e"/>
<rect x="287.4" y="872.9" width="2.5" height="2.0" fill="#084"/>
<rect x="289.4" y="872.9" width="2.5" height="2.0" fill="#7d7"/>
<rect x="291.4" y="872.9" width="2.5" height="2.0" fill="#f0f"/>
<rect x="293.4" y="872.9" width="2.5" height="2.0" fill="#7d7"/>
<rect x="295.4" y="872.9" width="2.5" height="2.0" fill="#4fc"/>
<rect x="297.3" y="872.9" width="2.5" height="2.0" fill="#06c"/>
<rect x="299.3" y="872.9" width="2.5" height="2.0" fill="#48f"/>
<rect x="301.3" y="872.9" width="2.0" height="2.0" fill="#b4e"/>
<rect x="251.4" y="821.7" width="2.4" height="53.2" fill="#303030"/>
<rect x="301.2" y="821.7" width="19" height="53.2" fill="url(#ng)"/>
<rect x="322.1" y="821.7" width="0.5" height="53.2" fill="#555"/>
<rect x="274.8" y="818.4" width="18" height="0.6" fill="#999"/>
</svg>
<div class="lb" style="left:13px;top:891px;font-size:13px;letter-spacing:.2px;color:#ececec;-webkit-text-stroke:.15px #ececec">Inkjet-3 Pag...</div>
<div class="a" style="left:12px;top:907px;width:86px;height:14px;border:1px solid #777;border-radius:3px;background:#333;overflow:hidden"><div class="a" style="left:0;top:0;width:21px;height:12px;background:#333"></div><div class="a" style="left:7.5px;top:5px;width:6.5px;height:2px;background:#fff"></div><div class="a" style="left:21px;top:0;width:42px;height:12px;background:#c6c6c6;color:#111;font-size:12px;line-height:13px;text-align:center">1</div><div class="a" style="left:70.5px;top:5px;width:6.5px;height:2px;background:#fff"></div><div class="a" style="left:72.8px;top:2.8px;width:2px;height:6.5px;background:#fff"></div></div>
<div class="lb" style="left:129px;top:891px;font-size:13px;letter-spacing:.2px;color:#ececec;-webkit-text-stroke:.15px #ececec">Inkjet-3 Pag...</div>
<div class="a" style="left:128px;top:907px;width:86px;height:14px;border:1px solid #777;border-radius:3px;background:#333;overflow:hidden"><div class="a" style="left:0;top:0;width:21px;height:12px;background:#444"></div><div class="a" style="left:7.5px;top:5px;width:6.5px;height:2px;background:#aaa"></div><div class="a" style="left:21px;top:0;width:42px;height:12px;background:#c6c6c6;color:#111;font-size:12px;line-height:13px;text-align:center">0</div><div class="a" style="left:70.5px;top:5px;width:6.5px;height:2px;background:#fff"></div><div class="a" style="left:72.8px;top:2.8px;width:2px;height:6.5px;background:#fff"></div></div>
<div class="lb" style="left:245px;top:891px;font-size:13px;letter-spacing:.2px;color:#ececec;-webkit-text-stroke:.15px #ececec">Inkjet-3 Pag...</div>
<div class="a" style="left:244px;top:907px;width:86px;height:14px;border:1px solid #777;border-radius:3px;background:#333;overflow:hidden"><div class="a" style="left:0;top:0;width:21px;height:12px;background:#444"></div><div class="a" style="left:7.5px;top:5px;width:6.5px;height:2px;background:#aaa"></div><div class="a" style="left:21px;top:0;width:42px;height:12px;background:#c6c6c6;color:#111;font-size:12px;line-height:13px;text-align:center">0</div><div class="a" style="left:70.5px;top:5px;width:6.5px;height:2px;background:#fff"></div><div class="a" style="left:72.8px;top:2.8px;width:2px;height:6.5px;background:#fff"></div></div>
<div class="a" style="left:13px;top:955px;width:96px;height:32px;background:#333;border:1px solid #6c6c6c;border-radius:4px"></div>
<div class="a" style="left:43px;top:956px;width:1px;height:30px;background:#6c6c6c"></div>
<div class="a" style="left:76px;top:956px;width:2px;height:30px;background:#6c6c6c"></div>
<div class="a" style="left:13px;top:955px;width:31px;height:32px;background:#0e0e0e;border:1px solid #e08a28;border-radius:4px 0 0 4px"></div>
<svg class="a" style="left:13px;top:955px" width="96" height="32" viewBox="13 955 96 32">
<rect x="18.9" y="961.5" width="18" height="19" fill="none" stroke="#fff" stroke-width="1.2"/><rect x="20" y="962.6" width="15.8" height="16.8" fill="none" stroke="#777" stroke-width=".8"/>
<rect x="32.8" y="963.4" width="2.5" height="15.6" fill="#fff"/><rect x="20.4" y="976.3" width="11.6" height="2.4" fill="#fff"/>
<rect x="49.7" y="961.5" width="20.4" height="19" fill="none" stroke="#fff" stroke-width="1.2"/><rect x="50.8" y="962.6" width="18.2" height="16.8" fill="none" stroke="#888" stroke-width=".8"/>
<rect x="51.8" y="963.2" width="3" height="15.8" fill="#fff"/><rect x="65.2" y="963.2" width="3" height="15.8" fill="#fff"/>
<rect x="83.3" y="961.5" width="19.4" height="19" fill="none" stroke="#fff" stroke-width="1.2"/>
<rect x="94.1" y="963" width="2.9" height="16" fill="#fff"/><rect x="98.1" y="963" width="2.9" height="16" fill="#fff"/>
</svg>
<div class="a" style="left:1127px;top:955px;width:48px;height:32px;background:#d0d0d0;color:#1c1c1c;font-size:18px;line-height:30px;text-align:right;padding-right:4px;-webkit-text-stroke-width:0">1</div>
<div class="a" style="left:1174px;top:955px;width:21px;height:32px;background:#303030;border:1px solid #7a7a7a;border-left:1.5px solid #a8a8a8;border-radius:0 3px 3px 0"></div>
<div class="a" style="left:1175px;top:971px;width:19px;height:1px;background:#7a7a7a"></div>
<svg class="a" style="left:1174px;top:955px" width="21" height="32" viewBox="1174 955 21 32"><path d="M1180.6 966.4 L1184.6 960.6 L1188.6 966.4 Z" fill="#fff"/><path d="M1181 976.4 L1184.6 981.6 L1188.2 976.4 Z" fill="#aaa"/></svg>
<div class="lb" style="left:1197px;top:974px;letter-spacing:.2px;color:#f0f0f0">Copies</div>
<div class="a" style="left:1249px;top:955px;width:144px;height:32px;background:#303030;border:1px solid #8a8a8a;border-radius:3px;font-size:18px;line-height:32px;text-align:center;color:#fff;letter-spacing:.15px">Print</div>
<div class="a" style="left:1055px;top:0;width:347px;height:945px;background:#4d4d4d"></div>
<div class="a" style="left:1055px;top:0;width:347px;height:16px;background:#323232"></div>
<svg class="a" style="left:1386px;top:0" width="16" height="16" viewBox="1386 0 16 16"><path d="M1391 3.4 L1396.3 8 L1391 12.6 M1397.2 3.4 L1402.5 8 L1397.2 12.6" fill="none" stroke="#fff" stroke-width="1.5"/></svg>
<div class="hd" style="top:16px;width:347px"><span style="top:5px">Stored Settings</span></div>
<svg class="a" style="left:1386px;top:22px" width="14" height="12" viewBox="-2 -2 14 12"><path d="M0.4 7.9 L5 1 L9.6 7.9" fill="none" stroke="#fff" stroke-width="1.35"/></svg>
<div class="lb" style="left:1063px;top:50px;letter-spacing:0.28px">Stored Settings:</div>
<div class="dd" style="left:1062px;top:72px;width:338px"><span>Custom</span><i></i></div>
<div class="lb" style="left:1063px;top:103px;letter-spacing:0.23px">Printer:</div>
<div class="dd" style="left:1062px;top:125px;width:338px"><span>PRO-310 series fe80::dec2:c9ff:fedf:e226</span><i></i></div>
<div class="lb" style="left:1063px;top:156px;letter-spacing:0.27px">Layout Mode:</div>
<div class="dd" style="left:1062px;top:178px;width:338px"><span>Multiple Images</span><i></i></div>
<div class="a" style="left:1055px;top:207px;width:347px;height:36px;background:#333"></div>
<div class="a" style="left:1232px;top:216px;width:169px;height:27px;background:#484848;border:1px solid #6c6c6c;border-bottom:none;border-radius:4px 4px 0 0"></div>
<div class="a" style="left:1055px;top:242px;width:347px;height:1px;background:#e88c24"></div>
<div class="a" style="left:1057px;top:216px;width:171px;height:27px;background:#404040;border:1px solid #e88c24;border-bottom:none;border-radius:4px 4px 0 0"></div>
<div class="t" style="left:1057px;width:171px;text-align:center;top:221px">General Settings</div>
<div class="t" style="left:1233px;width:169px;text-align:center;top:221px">Color Settings</div>
<div class="a" style="left:1390px;top:243px;width:12px;height:702px;background:#343434"></div>
<div class="a" style="left:1392px;top:247px;width:14px;height:319px;background:#2f2f2f;border:1px solid #7c7c7c;border-radius:3px"></div>
<div class="hd" style="top:243px;width:335px;height:25px"><span style="top:6px">Print Settings</span></div>
<svg class="a" style="left:1371px;top:250px" width="14" height="12" viewBox="-2 -2 14 12"><path d="M0.4 7.9 L5 1 L9.6 7.9" fill="none" stroke="#fff" stroke-width="1.35"/></svg>
<div class="lb" style="left:1063px;top:278px;letter-spacing:0.23px">Media Type:</div>
<div class="dd" style="left:1062px;top:300px;width:323px"><span>Matte Photo Paper</span><i></i></div>
<div class="btn" style="left:1262px;top:324px;width:125px">Get Information</div>
<div class="lb" style="left:1063px;top:359px;letter-spacing:0.02px">Paper Size:</div>
<div class="dd" style="left:1062px;top:381px;width:323px;background:#000;border-color:#d0d0d0"><span>Letter 8.5"x11" 22x28cm (8.500x11.000)</span><i></i></div>
<div class="cb" style="left:1063px;top:411px"></div>
<div class="t fb" style="left:1081px;top:411px">Borderless Printing</div>
<div class="lb" style="left:1063px;top:437px;letter-spacing:0.09px">Paper Source:</div>
<div class="dd" style="left:1062px;top:459px;width:323px"><span>Top Feed</span><i></i></div>
<div class="lb" style="left:1063px;top:498px;letter-spacing:0.23px">Print Quality:</div>
<div class="dd" style="left:1062px;top:520px;width:323px"><span>Highest</span><i></i></div>
<div class="lb" style="left:1063px;top:551px;letter-spacing:0.18px">Clear Coating:</div>
<div class="dd" style="left:1062px;top:573px;width:323px"><span>Auto</span><i></i></div>
<div class="cb" style="left:1063px;top:603px"></div>
<div class="t fb" style="left:1081px;top:603px">Use contrast reproduction</div>
<div class="cb" style="left:1079px;top:628px"></div>
<div class="t fb" style="left:1097px;top:628px">Use depth information</div>
<div class="btn" style="left:1295px;top:647px;width:92px">Settings...</div>
<div class="a" style="left:1055px;top:680px;width:335px;height:3px;background:#3a3a3a"></div>
<div class="hd" style="top:683px;width:335px;height:23px"><span style="top:4px">Layout</span></div>
<svg class="a" style="left:1371px;top:688px" width="14" height="12" viewBox="-2 -2 14 12"><path d="M0.4 7.9 L5 1 L9.6 7.9" fill="none" stroke="#fff" stroke-width="1.35"/></svg>
<div class="lb" style="left:1063px;top:716px;letter-spacing:0.17px">Move Slot</div>
<div class="dd" style="left:1062px;top:738px;width:323px"><span>None</span><i></i></div>
<div class="lb" style="left:1063px;top:769px;letter-spacing:0.19px">Registered Layouts</div>
<div class="dd" style="left:1062px;top:791px;width:323px"><span>Custom</span><i></i></div>
<div class="lb" style="left:1063px;top:822px;letter-spacing:0.21px">Set Slot Position</div>
<div class="lb" style="left:1063px;top:847px;letter-spacing:0.3px">Top (-10.726 - 11.000inches):</div>
<div class="sl" style="left:1077px;top:878.5px;width:216px"></div><div class="th" style="left:1181px;top:873px"></div>
<div class="vb" style="left:1307.5px;top:870.5px;width:74.5px;height:21px;line-height:23px">0.137</div>
<div class="lb" style="left:1063px;top:902px;letter-spacing:0.5px">Left (-8.500 - 8.500inches):</div>
<div class="sl" style="left:1077px;top:933.5px;width:216px"></div><div class="th" style="left:1181px;top:928px"></div>
<div class="vb" style="left:1307.5px;top:925.5px;width:74.5px;height:19.5px;line-height:23px;letter-spacing:.5px">0.000</div>
</div></body></html>
